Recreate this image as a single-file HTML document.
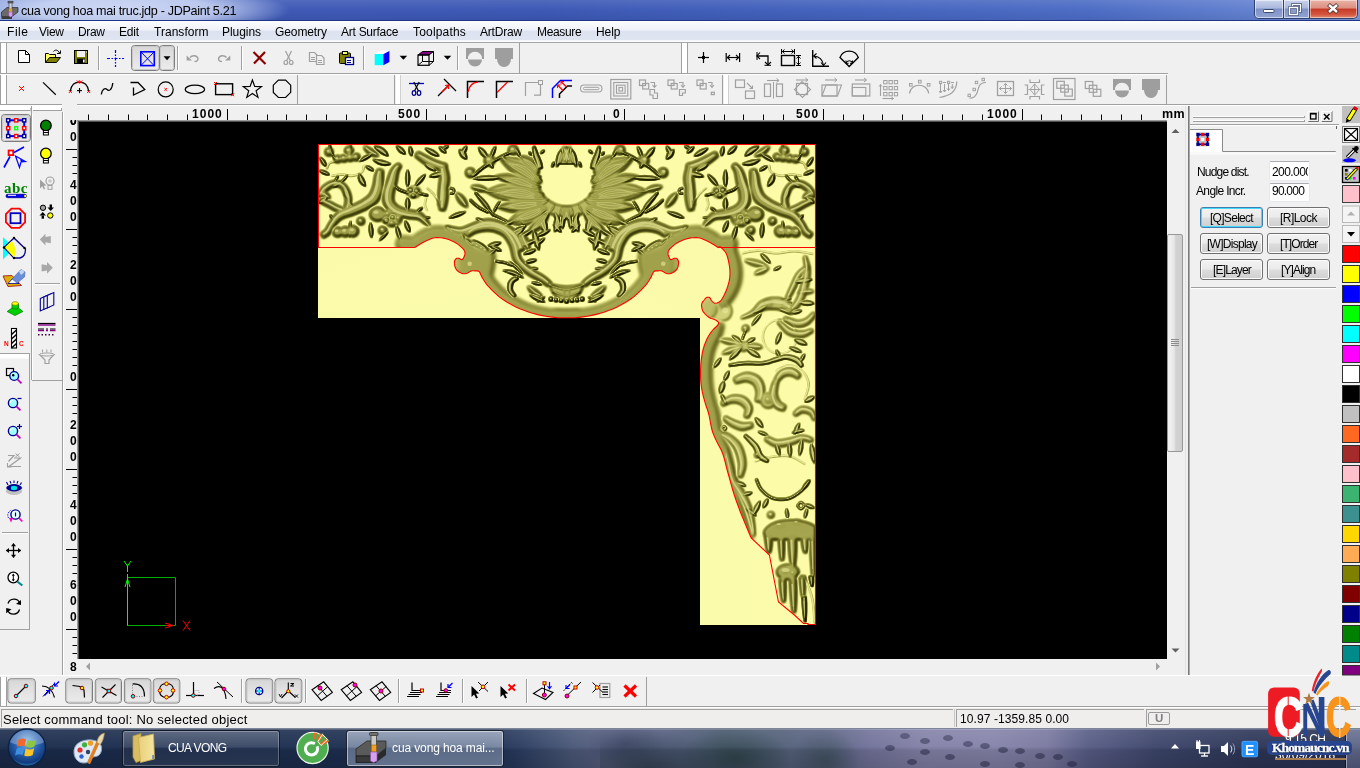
<!DOCTYPE html>
<html lang="en"><head><meta charset="utf-8"><title>cua vong hoa mai truc.jdp - JDPaint 5.21</title>
<style>
html,body{margin:0;padding:0;}
body{width:1360px;height:768px;overflow:hidden;position:relative;background:#f0f0f0;font-family:"Liberation Sans",sans-serif;font-size:12px;color:#000;}
.a{position:absolute;}
.t{position:absolute;white-space:nowrap;line-height:1;}
svg{position:absolute;overflow:visible;}
.t{will-change:transform;}

</style></head>
<body>
<!-- chrome -->
<div class="a" style="left:0px;top:0px;width:1360px;height:20px;background:linear-gradient(90deg,#7f98da 0,#5672c6 14%,#3f5ab6 21%,#3d59b5 40%,#4463bd 60%,#4d6dc5 80%,#6381d0 92%,#7f9adc 100%);"></div>
<div class="a" style="left:0px;top:0px;width:1360px;height:20px;background:linear-gradient(180deg,rgba(255,255,255,.10) 0,rgba(255,255,255,0) 50%,rgba(0,0,30,.08) 100%);"></div>
<div class="a" style="left:-40px;top:-14px;width:330px;height:48px;background:radial-gradient(ellipse closest-side at center,rgba(232,238,255,.8) 0,rgba(225,232,252,.7) 55%,rgba(215,225,250,0) 100%);"></div>
<div class="a" style="left:0px;top:20px;width:1360px;height:1px;background:#1f3688;"></div>
<div class="a" style="left:0px;top:21px;width:1360px;height:1px;background:#fbfcfe;"></div>
<div class="t" style="left:21.0px;top:4.6px;font-size:12.6px;letter-spacing:-0.31px;">cua vong hoa mai truc.jdp - JDPaint 5.21</div>
<div class="a" style="left:0px;top:22px;width:1360px;height:19px;background:linear-gradient(180deg,#fafbfd 0,#eef1f8 42%,#dce2ef 50%,#dfe5f1 100%);"></div>
<div class="a" style="left:0px;top:40px;width:1360px;height:1px;background:#f4f6fa;"></div>
<div class="a" style="left:0px;top:41px;width:1360px;height:1px;background:#fafbfd;"></div>
<div class="a" style="left:0px;top:42px;width:1360px;height:1px;background:#a6a6a6;"></div>
<div class="t" style="left:7.0px;top:25.8px;font-size:12px;letter-spacing:0.55px;">File</div>
<div class="t" style="left:39.0px;top:25.8px;font-size:12px;letter-spacing:-0.26px;">View</div>
<div class="t" style="left:78.0px;top:25.8px;font-size:12px;letter-spacing:-0.33px;">Draw</div>
<div class="t" style="left:119.0px;top:25.8px;font-size:12px;letter-spacing:-0.23px;">Edit</div>
<div class="t" style="left:153.5px;top:25.8px;font-size:12px;letter-spacing:0.03px;">Transform</div>
<div class="t" style="left:222.0px;top:25.8px;font-size:12px;letter-spacing:-0.06px;">Plugins</div>
<div class="t" style="left:275.0px;top:25.8px;font-size:12px;letter-spacing:-0.10px;">Geometry</div>
<div class="t" style="left:341.0px;top:25.8px;font-size:12px;letter-spacing:-0.26px;">Art Surface</div>
<div class="t" style="left:413.2px;top:25.8px;font-size:12px;letter-spacing:0.18px;">Toolpaths</div>
<div class="t" style="left:480.4px;top:25.8px;font-size:12px;letter-spacing:-0.19px;">ArtDraw</div>
<div class="t" style="left:537.4px;top:25.8px;font-size:12px;letter-spacing:-0.35px;">Measure</div>
<div class="t" style="left:596.2px;top:25.8px;font-size:12px;letter-spacing:-0.09px;">Help</div>
<div class="a" style="left:1254px;top:-2px;width:104px;height:20.5px;background:#30406f;border-radius:0 0 5px 5px;"></div>
<div class="a" style="left:1255px;top:0px;width:27.5px;height:17.5px;background:linear-gradient(180deg,#c9d3ec 0,#aab8de 45%,#7e90c6 50%,#93a5d4 100%);border-radius:0 0 0 4px;box-shadow:inset 0 0 0 1px rgba(255,255,255,.55);"></div>
<div class="a" style="left:1283.5px;top:0px;width:25px;height:17.5px;background:linear-gradient(180deg,#c9d3ec 0,#aab8de 45%,#7e90c6 50%,#93a5d4 100%);box-shadow:inset 0 0 0 1px rgba(255,255,255,.55);"></div>
<div class="a" style="left:1309.5px;top:0px;width:47px;height:17.5px;background:linear-gradient(180deg,#e9b4a8 0,#dc8f80 45%,#c63a26 50%,#d4553e 80%,#e08a70 100%);border-radius:0 0 4px 0;box-shadow:inset 0 0 0 1px rgba(255,255,255,.45);"></div>
<svg width="1360" height="768" viewBox="0 0 1360 768" style="left:0;top:0;pointer-events:none;">
<rect x="1263.5" y="9.5" width="10.5" height="3" fill="#fff" stroke="#3c4a70" stroke-width="1" rx=".8"/><rect x="1292.5" y="4.5" width="8" height="7" fill="none" stroke="#3c4a70" stroke-width="2.6" /><rect x="1292.5" y="4.5" width="8" height="7" fill="none" stroke="#fff" stroke-width="1.2" /><rect x="1289.5" y="7.5" width="8" height="7" fill="#8c9cc8" stroke="#3c4a70" stroke-width="2.6" /><rect x="1289.5" y="7.5" width="8" height="7" fill="none" stroke="#fff" stroke-width="1.4" /><line x1="1328.5" y1="4.5" x2="1337.5" y2="12.5" stroke="#4a3030" stroke-width="4.2" /><line x1="1337.5" y1="4.5" x2="1328.5" y2="12.5" stroke="#4a3030" stroke-width="4.2" /><line x1="1329" y1="5" x2="1337" y2="12" stroke="#fff" stroke-width="2.4" /><line x1="1337" y1="5" x2="1329" y2="12" stroke="#fff" stroke-width="2.4" /><polygon points="1.5,12 7,7.5 18,7.5 18,12 12,16.5 1.5,16.5" fill="#6a6a6a" stroke="#2a2a2a" stroke-width="0.7" /><polygon points="1.5,16.5 12,16.5 12,19 1.5,19" fill="#3a3a3a"  /><rect x="8" y="1.2" width="5" height="1.8" fill="#707070" stroke="#303030" stroke-width="0.6" /><rect x="9" y="3" width="3" height="6" fill="#d0d0d0" stroke="#404040" stroke-width="0.6" /><rect x="9" y="8.5" width="3" height="3.5" fill="#f0a020"  /><polygon points="8.8,12 12.4,12 12.4,16 10.5,17 8.8,16" fill="#e0a0f0" stroke="#8050a0" stroke-width="0.5" />
</svg>

<!-- toolbars -->
<div class="a" style="left:0px;top:73px;width:1168px;height:1px;background:#a0a0a0;"></div>
<div class="a" style="left:0px;top:74px;width:1168px;height:1px;background:#fff;"></div>
<div class="a" style="left:0px;top:104px;width:62px;height:1px;background:#a0a0a0;"></div>
<div class="a" style="left:77px;top:104px;width:1283px;height:1px;background:#a0a0a0;"></div>
<div class="a" style="left:77px;top:105px;width:1283px;height:1px;background:#fff;"></div>
<svg width="1360" height="768" viewBox="0 0 1360 768" style="left:0;top:0;pointer-events:none;">
<defs><linearGradient id="gp" x1="0" y1="0" x2="0" y2="1"><stop offset="0" stop-color="#d6d6d6"/><stop offset=".5" stop-color="#e2e2e2"/><stop offset="1" stop-color="#ececec"/></linearGradient></defs><rect x="1" y="43" width="5" height="30" fill="#fff"  /><line x1="0.5" y1="43" x2="0.5" y2="73" stroke="#a0a0a0" stroke-width="1" /><line x1="6.5" y1="43" x2="6.5" y2="73" stroke="#a0a0a0" stroke-width="1" /><path d="M18.5 50.5H25.5L29.5 54.5V62.5H18.5Z" fill="#fff" stroke="#000" stroke-width="1" /><path d="M25.5 50.5V54.5H29.5" fill="none" stroke="#000" stroke-width="1" /><path d="M45.5 62.5V53.5H48.5L49.5 54.5H55.5V57.5" fill="#ffff66" stroke="#000" stroke-width="1" /><path d="M45.5 62.5L49.5 57.5H60.5L56.5 62.5Z" fill="#808000" stroke="#000" stroke-width="1" /><path d="M53.5 51.5C55 49.5 58 49.5 59.5 53" fill="none" stroke="#000" stroke-width="1" /><path d="M57 53.5H60.5V50.5" fill="none" stroke="#000" stroke-width="1" /><rect x="74.5" y="50.5" width="13" height="13" fill="#808000" stroke="#000" stroke-width="1" /><rect x="77" y="51" width="8" height="6" fill="#f0f0f0"  /><rect x="77" y="58.5" width="8" height="5" fill="#000"  /><rect x="83" y="59.5" width="1.6" height="3" fill="#fff"  /><rect x="86" y="51.5" width="1" height="1" fill="#fff"  /><line x1="98.5" y1="46" x2="98.5" y2="70" stroke="#a0a0a0" stroke-width="1" /><line x1="99.5" y1="46" x2="99.5" y2="70" stroke="#fff" stroke-width="1" /><line x1="107" y1="58.5" x2="124" y2="58.5" stroke="#0000ff" stroke-width="1.2" stroke-dasharray="3 1.5 1.5 1.5"/><line x1="115.5" y1="50" x2="115.5" y2="67" stroke="#0000ff" stroke-width="1.2" stroke-dasharray="3 1.5 1.5 1.5"/><rect x="131.5" y="45.5" width="28" height="25" rx="3" ry="3" fill="url(#gp)" stroke="#7d7d7d" stroke-width="1"/><rect x="132.5" y="46.5" width="26" height="23" rx="2" ry="2" fill="none" stroke="#c9c9c9" stroke-width="1"/><rect x="159.5" y="45.5" width="15" height="25" rx="3" ry="3" fill="url(#gp)" stroke="#7d7d7d" stroke-width="1"/><rect x="160.5" y="46.5" width="13" height="23" rx="2" ry="2" fill="none" stroke="#c9c9c9" stroke-width="1"/><rect x="140.8" y="51.8" width="13.5" height="13.8" fill="none" stroke="#0000ff" stroke-width="1.6" /><line x1="141" y1="52" x2="154" y2="65.5" stroke="#0000ff" stroke-width="1" /><line x1="154" y1="52" x2="141" y2="65.5" stroke="#0000ff" stroke-width="1" /><polygon points="163.5,56.2 170.5,56.2 167,60.2" fill="#000"  /><line x1="177.5" y1="46" x2="177.5" y2="70" stroke="#a0a0a0" stroke-width="1" /><line x1="178.5" y1="46" x2="178.5" y2="70" stroke="#fff" stroke-width="1" /><path d="M190 57.5C192 55 197 55 198 58.5C198 60.5 196.5 61.5 194.5 61.5" fill="none" stroke="#a0a0a0" stroke-width="1.4" /><polygon points="186.6,55.5 186.6,60.5 192,60.5" fill="#a0a0a0"  /><path d="M226.5 57.5C224.5 55 219.5 55 218.5 58.5C218.5 60.5 220 61.5 222 61.5" fill="none" stroke="#a0a0a0" stroke-width="1.4" /><polygon points="230.3,55.5 230.3,60.5 225,60.5" fill="#a0a0a0"  /><line x1="241.5" y1="46" x2="241.5" y2="70" stroke="#a0a0a0" stroke-width="1" /><line x1="242.5" y1="46" x2="242.5" y2="70" stroke="#fff" stroke-width="1" /><line x1="253.5" y1="52" x2="265.5" y2="64" stroke="#8b0000" stroke-width="2.2" /><line x1="265" y1="52" x2="254" y2="63.5" stroke="#8b0000" stroke-width="2.2" /><line x1="285.5" y1="51" x2="290.5" y2="61" stroke="#a0a0a0" stroke-width="1.3" /><line x1="291.5" y1="51" x2="286.5" y2="61" stroke="#a0a0a0" stroke-width="1.3" /><ellipse cx="285.8" cy="62.5" rx="1.8" ry="2" fill="none" stroke="#a0a0a0" stroke-width="1.2" /><ellipse cx="291.2" cy="62.5" rx="1.8" ry="2" fill="none" stroke="#a0a0a0" stroke-width="1.2" /><path d="M309.5 52.5H314.5L317.5 55.5V61.5H309.5Z" fill="#f0f0f0" stroke="#a0a0a0" stroke-width="1.2" /><path d="M316.5 55.5H321.5L324 58V64.5H316.5Z" fill="#f0f0f0" stroke="#a0a0a0" stroke-width="1.2" /><line x1="311" y1="57.5" x2="315" y2="57.5" stroke="#a0a0a0" stroke-width="1" /><line x1="311" y1="59.5" x2="315" y2="59.5" stroke="#a0a0a0" stroke-width="1" /><line x1="318" y1="60.5" x2="322" y2="60.5" stroke="#a0a0a0" stroke-width="1" /><line x1="318" y1="62.5" x2="322" y2="62.5" stroke="#a0a0a0" stroke-width="1" /><rect x="339.5" y="53" width="11" height="10.5" fill="#808000" stroke="#000" stroke-width="1" rx="1"/><rect x="342.5" y="51.5" width="5" height="3" fill="#ffff66" stroke="#000" stroke-width="1" /><rect x="345.5" y="57.5" width="8" height="7" fill="#fff" stroke="#00008b" stroke-width="1.3" /><line x1="347" y1="60.5" x2="351" y2="60.5" stroke="#00008b" stroke-width="1" /><line x1="347" y1="62.5" x2="351" y2="62.5" stroke="#00008b" stroke-width="1" /><line x1="363.5" y1="46" x2="363.5" y2="70" stroke="#a0a0a0" stroke-width="1" /><line x1="364.5" y1="46" x2="364.5" y2="70" stroke="#fff" stroke-width="1" /><polygon points="374.7,54 383.3,54 383.3,65.2 374.7,65.2" fill="#00ffff"  /><polygon points="383.3,54 389.4,50.8 389.4,62 383.3,65.2" fill="#0000ff"  /><polygon points="374.7,54 380.8,50.8 389.4,50.8 383.3,54" fill="#fff"  /><polygon points="399.6,55.8 407.2,55.8 403.4,59.8" fill="#000"  /><polygon points="418,55 422.5,51.5 433.5,51.5 429,55" fill="#800080" stroke="#000" stroke-width="1" /><rect x="418" y="55" width="11" height="10.3" fill="none" stroke="#000" stroke-width="1.2" /><path d="M433.5 51.5V61.5L429 65.3M422.5 55V61.5H433.5M422.5 61.5L418 65.3" fill="none" stroke="#000" stroke-width="1" /><polygon points="443.7,55.8 451.3,55.8 447.5,59.8" fill="#000"  /><line x1="457.5" y1="46" x2="457.5" y2="70" stroke="#a0a0a0" stroke-width="1" /><line x1="458.5" y1="46" x2="458.5" y2="70" stroke="#fff" stroke-width="1" /><path d="M466 48H484V59H482A7 7 0 0 0 468 59H466Z" fill="#9e9e9e"  /><path d="M468 59.5A7 7 0 0 0 482 59.5Z" fill="#9e9e9e"  /><path d="M468 58.5A7 6.8 0 0 1 482 58.5Z" fill="#f0f0f0"  /><path d="M495 48H513V59H511A7 8 0 0 1 497 59H495Z" fill="#9e9e9e"  /><line x1="519.5" y1="43" x2="519.5" y2="73" stroke="#a0a0a0" stroke-width="1" /><rect x="682" y="43" width="5" height="30" fill="#fff"  /><line x1="681.5" y1="43" x2="681.5" y2="73" stroke="#a0a0a0" stroke-width="1" /><line x1="687.5" y1="43" x2="687.5" y2="73" stroke="#a0a0a0" stroke-width="1" /><line x1="698" y1="57.5" x2="709" y2="57.5" stroke="#000" stroke-width="1.2" /><line x1="703.5" y1="52" x2="703.5" y2="63" stroke="#000" stroke-width="1.2" /><rect x="702" y="56" width="3" height="3" fill="#000"  /><line x1="726.2" y1="53" x2="726.2" y2="62" stroke="#000" stroke-width="1.2" /><line x1="739.6" y1="53" x2="739.6" y2="62" stroke="#000" stroke-width="1.2" /><line x1="727" y1="57.5" x2="739" y2="57.5" stroke="#000" stroke-width="1.1" /><polyline points="730,55 727.3,57.5 730,60" fill="none" stroke="#000" stroke-width="1.1" /><polyline points="736,55 738.7,57.5 736,60" fill="none" stroke="#000" stroke-width="1.1" /><polyline points="757,56 763.5,56 763.5,56 768,56 768,65" fill="none" stroke="#000" stroke-width="1.3" /><polyline points="760,52.5 756.8,56 760,59" fill="none" stroke="#000" stroke-width="1.1" /><polyline points="765,62 768,65 771,62" fill="none" stroke="#000" stroke-width="1.1" /><line x1="757" y1="52" x2="757" y2="60" stroke="#000" stroke-width="1" /><line x1="764.5" y1="65.3" x2="771" y2="65.3" stroke="#000" stroke-width="1" /><rect x="781.5" y="55.5" width="13" height="10" fill="none" stroke="#000" stroke-width="1.4" /><line x1="781.5" y1="49" x2="781.5" y2="54" stroke="#000" stroke-width="1" /><line x1="794.5" y1="49" x2="794.5" y2="54" stroke="#000" stroke-width="1" /><line x1="782" y1="51.5" x2="794" y2="51.5" stroke="#000" stroke-width="1" /><polyline points="784.5,49.5 782.3,51.5 784.5,53.5" fill="none" stroke="#000" stroke-width="1" /><polyline points="791.5,49.5 793.7,51.5 791.5,53.5" fill="none" stroke="#000" stroke-width="1" /><line x1="796" y1="55.5" x2="801" y2="55.5" stroke="#000" stroke-width="1" /><line x1="796" y1="65.5" x2="801" y2="65.5" stroke="#000" stroke-width="1" /><line x1="798.5" y1="56" x2="798.5" y2="65" stroke="#000" stroke-width="1" /><polyline points="796.5,58.5 798.5,56.3 800.5,58.5" fill="none" stroke="#000" stroke-width="1" /><polyline points="796.5,62.5 798.5,64.7 800.5,62.5" fill="none" stroke="#000" stroke-width="1" /><polyline points="812.7,50 812.7,66.2 829,66.2" fill="none" stroke="#000" stroke-width="1.4" /><path d="M813.5 56C819 56 823 60 823.5 65.5" fill="none" stroke="#000" stroke-width="1.2" /><polyline points="816.5,53.5 813.7,56 816.5,58.5" fill="none" stroke="#000" stroke-width="1.1" /><polyline points="821,62.5 823.5,65.5 826,62.5" fill="none" stroke="#000" stroke-width="1.1" /><path d="M840 57.5A9.8 9.8 0 0 1 858.3 57.5L849.2 66.5Z" fill="none" stroke="#000" stroke-width="1.3" /><path d="M846 63A3.5 3.5 0 0 1 852.5 63" fill="none" stroke="#000" stroke-width="1.1" /><polyline points="846,60.5 846,63.3 848.6,63.3" fill="none" stroke="#000" stroke-width="1" /><polyline points="852.5,60.5 852.5,63.3 850,63.3" fill="none" stroke="#000" stroke-width="1" /><line x1="864.5" y1="43" x2="864.5" y2="73" stroke="#a0a0a0" stroke-width="1" /><rect x="1" y="75" width="5" height="29" fill="#fff"  /><line x1="0.5" y1="75" x2="0.5" y2="104" stroke="#a0a0a0" stroke-width="1" /><line x1="6.5" y1="75" x2="6.5" y2="104" stroke="#a0a0a0" stroke-width="1" /><line x1="19" y1="86" x2="24" y2="91" stroke="#ff0000" stroke-width="1" /><line x1="24" y1="86" x2="19" y2="91" stroke="#ff0000" stroke-width="1" /><line x1="43" y1="82.4" x2="55.8" y2="94.7" stroke="#000" stroke-width="1.2" /><path d="M70.3 91C71.5 84 76 82.2 79.5 82.2C83 82.2 87.5 84 88.7 91" fill="none" stroke="#000" stroke-width="1.2" /><line x1="68.8" y1="90" x2="71.8" y2="93" stroke="#ff0000" stroke-width="1" /><line x1="71.8" y1="90" x2="68.8" y2="93" stroke="#ff0000" stroke-width="1" /><line x1="87.2" y1="90" x2="90.2" y2="93" stroke="#ff0000" stroke-width="1" /><line x1="90.2" y1="90" x2="87.2" y2="93" stroke="#ff0000" stroke-width="1" /><line x1="76.8" y1="80.5" x2="79.8" y2="83.5" stroke="#ff0000" stroke-width="1" /><line x1="79.8" y1="80.5" x2="76.8" y2="83.5" stroke="#ff0000" stroke-width="1" /><line x1="79.2" y1="80.5" x2="82.2" y2="83.5" stroke="#ff0000" stroke-width="1" /><line x1="82.2" y1="80.5" x2="79.2" y2="83.5" stroke="#ff0000" stroke-width="1" /><line x1="77" y1="90.6" x2="82" y2="90.6" stroke="#000" stroke-width="1.1" /><line x1="79.5" y1="88" x2="79.5" y2="93.2" stroke="#000" stroke-width="1.1" /><path d="M101.3 94.5C102 89 105 87.5 107 89.5C109 91.5 112 90 112.8 83" fill="none" stroke="#000" stroke-width="1.3" /><polyline points="130.5,82.5 138,82.5 144.8,89.5 133.5,95 133.5,87.5" fill="none" stroke="#000" stroke-width="1.3" /><circle cx="165.7" cy="89.4" r="7.5" fill="none" stroke="#000" stroke-width="1.2" /><line x1="164.4" y1="88.1" x2="167" y2="90.7" stroke="#ff0000" stroke-width="1" /><line x1="167" y1="88.1" x2="164.4" y2="90.7" stroke="#ff0000" stroke-width="1" /><ellipse cx="194.9" cy="89.4" rx="9.7" ry="4.2" fill="none" stroke="#000" stroke-width="1.3" /><rect x="215.6" y="83.8" width="17" height="10.8" fill="none" stroke="#000" stroke-width="1.4" /><line x1="214" y1="82" x2="217" y2="85" stroke="#ff0000" stroke-width="1" /><line x1="217" y1="82" x2="214" y2="85" stroke="#ff0000" stroke-width="1" /><line x1="231.1" y1="93.2" x2="234.1" y2="96.2" stroke="#ff0000" stroke-width="1" /><line x1="234.1" y1="93.2" x2="231.1" y2="96.2" stroke="#ff0000" stroke-width="1" /><polygon points="252.4,80.0 254.7,86.4 261.5,86.6 256.1,90.8 258.0,97.4 252.4,93.5 246.8,97.4 248.7,90.8 243.3,86.6 250.1,86.4" fill="none" stroke="#000" stroke-width="1.2" /><polygon points="290.7,92.4 285.6,97.5 278.4,97.5 273.3,92.4 273.3,85.2 278.4,80.1 285.6,80.1 290.7,85.2" fill="none" stroke="#000" stroke-width="1.2" /><line x1="297.5" y1="75" x2="297.5" y2="104" stroke="#a0a0a0" stroke-width="1" /><line x1="394.5" y1="75" x2="394.5" y2="104" stroke="#a0a0a0" stroke-width="1" /><rect x="396" y="75" width="4" height="29" fill="#fff"  /><line x1="400.5" y1="75" x2="400.5" y2="104" stroke="#d0d0d0" stroke-width="1" /><line x1="409" y1="83.5" x2="424" y2="83.5" stroke="#0000c0" stroke-width="1.3" /><line x1="413.8" y1="82" x2="418.5" y2="91" stroke="#000" stroke-width="1.2" /><line x1="419.2" y1="82" x2="414.5" y2="91" stroke="#000" stroke-width="1.2" /><ellipse cx="414" cy="93" rx="1.8" ry="2.3" fill="none" stroke="#00008b" stroke-width="1.2" /><ellipse cx="419" cy="93" rx="1.8" ry="2.3" fill="none" stroke="#00008b" stroke-width="1.2" /><line x1="444" y1="79" x2="456" y2="91" stroke="#000" stroke-width="1.2" /><line x1="438" y1="96" x2="449" y2="85" stroke="#000" stroke-width="1.2" /><line x1="442" y1="92" x2="449" y2="85" stroke="#ff0000" stroke-width="1.3" /><polyline points="445,85.5 449,85 448.5,89" fill="none" stroke="#ff0000" stroke-width="1.2" /><polyline points="467.5,98 467.5,81.5 484,81.5" fill="none" stroke="#000" stroke-width="1.5" /><path d="M468 92C469 86 472 82.5 478 82" fill="none" stroke="#ff0000" stroke-width="1.3" /><polyline points="496.5,98 496.5,81.5 513,81.5" fill="none" stroke="#000" stroke-width="1.5" /><line x1="497" y1="92.5" x2="507.5" y2="82" stroke="#ff0000" stroke-width="1.3" /><polyline points="525.5,96 525.5,82.5 540.5,82.5 540.5,95.2 534,95.2" fill="none" stroke="#a0a0a0" stroke-width="1.2" /><rect x="538.5" y="80.5" width="4" height="4" fill="#f0f0f0" stroke="#a0a0a0" stroke-width="1" /><polyline points="552.5,98 552.5,88.5 560.5,80.5 572,80.5" fill="none" stroke="#0000ff" stroke-width="1.5" /><polyline points="559.5,98 559.5,94 567.5,86 572,86" fill="none" stroke="#000" stroke-width="1.5" /><line x1="563" y1="90.5" x2="557.5" y2="85" stroke="#ff0000" stroke-width="1.2" /><line x1="566.5" y1="87" x2="561" y2="81.5" stroke="#ff0000" stroke-width="1.2" /><polyline points="557.5,88 557.5,85 560.5,85" fill="none" stroke="#ff0000" stroke-width="1" /><polyline points="561,84.5 561,81.5 564,81.5" fill="none" stroke="#ff0000" stroke-width="1" /><rect x="580.5" y="85" width="21.5" height="7" fill="none" stroke="#a0a0a0" stroke-width="1.1" rx="3.5"/><rect x="583.5" y="87.3" width="15.5" height="2.4" fill="none" stroke="#a0a0a0" stroke-width="1" rx="1.2"/><rect x="610.8" y="79.5" width="20" height="19.5" fill="none" stroke="#a0a0a0" stroke-width="1.2" /><rect x="613.8" y="82.5" width="14" height="13.5" fill="none" stroke="#a0a0a0" stroke-width="1.1" /><rect x="616.5" y="85.2" width="8.6" height="8" fill="none" stroke="#a0a0a0" stroke-width="1.1" /><rect x="619" y="87.5" width="3.6" height="3.5" fill="none" stroke="#a0a0a0" stroke-width="1.1" /><rect x="639.5" y="80" width="6" height="5.5" fill="none" stroke="#a0a0a0" stroke-width="1.2" /><rect x="642.7" y="83.5" width="6" height="5.5" fill="none" stroke="#a0a0a0" stroke-width="1.2" /><polyline points="650.5,82.5 654.5,82.5 654.5,87" fill="none" stroke="#a0a0a0" stroke-width="1.1" /><polyline points="652.5,85 654.5,87.3 656.5,85" fill="none" stroke="#a0a0a0" stroke-width="1.1" /><polygon points="650,89.5 654.5,89.5 654.5,93 657.5,93 657.5,98.5 653,98.5 653,95 650,95" fill="none" stroke="#a0a0a0" stroke-width="1.2" /><rect x="668" y="80" width="6" height="5.5" fill="none" stroke="#a0a0a0" stroke-width="1.2" /><rect x="671.2" y="83.5" width="6" height="5.5" fill="none" stroke="#a0a0a0" stroke-width="1.2" /><polyline points="679,82.5 683,82.5 683,87" fill="none" stroke="#a0a0a0" stroke-width="1.1" /><polyline points="681,85 683,87.3 685,85" fill="none" stroke="#a0a0a0" stroke-width="1.1" /><polygon points="679.5,89.5 685.3,89.5 685.3,93 682.5,93 682.5,95.5 679.5,95.5" fill="none" stroke="#a0a0a0" stroke-width="1.2" /><rect x="697" y="80" width="6" height="5.5" fill="none" stroke="#a0a0a0" stroke-width="1.2" /><rect x="700.2" y="83.5" width="6" height="5.5" fill="none" stroke="#a0a0a0" stroke-width="1.2" /><polyline points="708,82.5 712,82.5 712,87" fill="none" stroke="#a0a0a0" stroke-width="1.1" /><polyline points="710,85 712,87.3 714,85" fill="none" stroke="#a0a0a0" stroke-width="1.1" /><rect x="711.3" y="92.3" width="3" height="2.3" fill="none" stroke="#a0a0a0" stroke-width="1.2" /><line x1="722.5" y1="75" x2="722.5" y2="104" stroke="#a0a0a0" stroke-width="1" /><rect x="724" y="75" width="4" height="29" fill="#fff"  /><line x1="728.5" y1="75" x2="728.5" y2="104" stroke="#d0d0d0" stroke-width="1" /><rect x="735.5" y="80" width="9" height="7.5" fill="none" stroke="#a0a0a0" stroke-width="1.2" /><rect x="745.5" y="91" width="9" height="7.5" fill="none" stroke="#a0a0a0" stroke-width="1.2" /><line x1="747" y1="83" x2="752.5" y2="88.5" stroke="#a0a0a0" stroke-width="1.1" /><polyline points="752.5,85.5 752.5,88.5 749.5,88.5" fill="none" stroke="#a0a0a0" stroke-width="1.1" /><rect x="764.5" y="84" width="6" height="12.5" fill="none" stroke="#a0a0a0" stroke-width="1.2" /><rect x="776.5" y="84" width="6" height="12.5" fill="none" stroke="#a0a0a0" stroke-width="1.2" /><line x1="773.5" y1="82" x2="773.5" y2="98.5" stroke="#a0a0a0" stroke-width="1" /><line x1="767" y1="80.5" x2="779" y2="80.5" stroke="#a0a0a0" stroke-width="1.1" /><polyline points="776.5,78.5 779,80.5 776.5,82.5" fill="none" stroke="#a0a0a0" stroke-width="1" /><rect x="796.5" y="83.5" width="11" height="11" fill="none" stroke="#a0a0a0" stroke-width="1.2" /><polygon points="802,81.5 810.5,89.5 802.5,97.5 794.5,89.5" fill="none" stroke="#a0a0a0" stroke-width="1.1" /><line x1="796" y1="80" x2="808" y2="80" stroke="#a0a0a0" stroke-width="1.1" /><polyline points="805.5,78 808,80 805.5,82" fill="none" stroke="#a0a0a0" stroke-width="1" /><rect x="822" y="85" width="15" height="11" fill="none" stroke="#a0a0a0" stroke-width="1.2" /><polygon points="826,85 841.5,85 837.5,96 822,96" fill="none" stroke="#a0a0a0" stroke-width="1.1" /><line x1="825" y1="80" x2="837" y2="80" stroke="#a0a0a0" stroke-width="1.1" /><polyline points="834.5,78 837,80 834.5,82" fill="none" stroke="#a0a0a0" stroke-width="1" /><rect x="852.3" y="84" width="17.5" height="12" fill="none" stroke="#a0a0a0" stroke-width="1.2" /><rect x="852.3" y="87.5" width="13.5" height="8.5" fill="none" stroke="#a0a0a0" stroke-width="1.1" /><line x1="855" y1="80" x2="866.5" y2="80" stroke="#a0a0a0" stroke-width="1.1" /><polyline points="864,78 866.5,80 864,82" fill="none" stroke="#a0a0a0" stroke-width="1" /><rect x="883.7" y="80.5" width="3.3" height="3.3" fill="none" stroke="#a0a0a0" stroke-width="1" /><rect x="883.7" y="86.5" width="3.3" height="3.3" fill="none" stroke="#a0a0a0" stroke-width="1" /><rect x="883.7" y="92.5" width="3.3" height="3.3" fill="none" stroke="#a0a0a0" stroke-width="1" /><rect x="889" y="80.5" width="3.3" height="3.3" fill="none" stroke="#a0a0a0" stroke-width="1" /><rect x="889" y="86.5" width="3.3" height="3.3" fill="none" stroke="#a0a0a0" stroke-width="1" /><rect x="889" y="92.5" width="3.3" height="3.3" fill="none" stroke="#a0a0a0" stroke-width="1" /><rect x="894.3" y="80.5" width="3.3" height="3.3" fill="none" stroke="#a0a0a0" stroke-width="1" /><rect x="894.3" y="86.5" width="3.3" height="3.3" fill="none" stroke="#a0a0a0" stroke-width="1" /><rect x="894.3" y="92.5" width="3.3" height="3.3" fill="none" stroke="#a0a0a0" stroke-width="1" /><line x1="880.5" y1="84.5" x2="880.5" y2="96" stroke="#a0a0a0" stroke-width="1.1" /><polyline points="879,86.5 880.5,84.5 882,86.5" fill="none" stroke="#a0a0a0" stroke-width="1" /><line x1="882.5" y1="98.5" x2="893.5" y2="98.5" stroke="#a0a0a0" stroke-width="1.1" /><polyline points="891.5,97 893.5,98.5 891.5,100" fill="none" stroke="#a0a0a0" stroke-width="1" /><path d="M909.5 93.5C911 82.5 927 82.5 928.8 93.5" fill="none" stroke="#a0a0a0" stroke-width="1.2" /><rect x="909.5" y="83.5" width="2.6" height="2.6" fill="#f0f0f0" stroke="#a0a0a0" stroke-width="1" /><rect x="918.5" y="80.3" width="2.6" height="2.6" fill="#f0f0f0" stroke="#a0a0a0" stroke-width="1" /><rect x="927.3" y="83.5" width="2.6" height="2.6" fill="#f0f0f0" stroke="#a0a0a0" stroke-width="1" /><path d="M939.5 97.5C950 95.5 956.5 92 956.8 81.5" fill="none" stroke="#a0a0a0" stroke-width="1.2" /><line x1="940.5" y1="84" x2="940.5" y2="93" stroke="#a0a0a0" stroke-width="1" /><polyline points="939,91 940.5,93 942,91" fill="none" stroke="#a0a0a0" stroke-width="1" /><line x1="944.5" y1="84" x2="944.5" y2="92" stroke="#a0a0a0" stroke-width="1" /><polyline points="943,90 944.5,92 946,90" fill="none" stroke="#a0a0a0" stroke-width="1" /><line x1="948.5" y1="84" x2="948.5" y2="90.5" stroke="#a0a0a0" stroke-width="1" /><polyline points="947,88.5 948.5,90.5 950,88.5" fill="none" stroke="#a0a0a0" stroke-width="1" /><line x1="952.3" y1="84" x2="952.3" y2="88.5" stroke="#a0a0a0" stroke-width="1" /><polyline points="950.8,86.5 952.3,88.5 953.8,86.5" fill="none" stroke="#a0a0a0" stroke-width="1" /><rect x="939.5" y="81.3" width="2.2" height="2.2" fill="#f0f0f0" stroke="#a0a0a0" stroke-width="1" /><rect x="947.5" y="81.3" width="2.2" height="2.2" fill="#f0f0f0" stroke="#a0a0a0" stroke-width="1" /><line x1="943" y1="82.5" x2="946" y2="82.5" stroke="#a0a0a0" stroke-width="1" /><line x1="951" y1="82.5" x2="954" y2="82.5" stroke="#a0a0a0" stroke-width="1" /><path d="M969.5 98C975 99 977.5 93 978.5 88C979.5 84 982 82.5 986 82.5" fill="none" stroke="#a0a0a0" stroke-width="1.2" /><rect x="968" y="94.2" width="2.4" height="2.4" fill="#f0f0f0" stroke="#a0a0a0" stroke-width="1" /><rect x="973" y="88.3" width="2.4" height="2.4" fill="#f0f0f0" stroke="#a0a0a0" stroke-width="1" /><rect x="975.3" y="81.3" width="2.4" height="2.4" fill="#f0f0f0" stroke="#a0a0a0" stroke-width="1" /><rect x="982" y="78.3" width="2.4" height="2.4" fill="#f0f0f0" stroke="#a0a0a0" stroke-width="1" /><rect x="997.5" y="81.5" width="16" height="14" fill="none" stroke="#a0a0a0" stroke-width="1.3" /><line x1="999.5" y1="88.5" x2="1011.5" y2="88.5" stroke="#a0a0a0" stroke-width="1" /><line x1="1005.5" y1="83.5" x2="1005.5" y2="93.5" stroke="#a0a0a0" stroke-width="1" /><polyline points="1001.5,86.5 999.5,88.5 1001.5,90.5" fill="none" stroke="#a0a0a0" stroke-width="1" /><polyline points="1009.5,86.5 1011.5,88.5 1009.5,90.5" fill="none" stroke="#a0a0a0" stroke-width="1" /><polyline points="1003.5,85.5 1005.5,83.5 1007.5,85.5" fill="none" stroke="#a0a0a0" stroke-width="1" /><polyline points="1003.5,91.5 1005.5,93.5 1007.5,91.5" fill="none" stroke="#a0a0a0" stroke-width="1" /><polyline points="1024.5,85 1027.5,85 1027.5,94.5 1024.5,94.5" fill="none" stroke="#a0a0a0" stroke-width="1.2" /><polyline points="1044.5,85 1041.5,85 1041.5,94.5 1044.5,94.5" fill="none" stroke="#a0a0a0" stroke-width="1.2" /><polyline points="1030,79.5 1030,82.5 1039.5,82.5 1039.5,79.5" fill="none" stroke="#a0a0a0" stroke-width="1.2" /><polyline points="1030,99.5 1030,96.5 1039.5,96.5 1039.5,99.5" fill="none" stroke="#a0a0a0" stroke-width="1.2" /><line x1="1028.5" y1="89.5" x2="1040.5" y2="89.5" stroke="#a0a0a0" stroke-width="1" /><line x1="1034.7" y1="83.5" x2="1034.7" y2="95.5" stroke="#a0a0a0" stroke-width="1" /><polygon points="1034.7,84 1039.5,89.5 1034.7,95 1030,89.5" fill="none" stroke="#a0a0a0" stroke-width="0.9" /><rect x="1053.5" y="78.5" width="21.5" height="21" fill="none" stroke="#a0a0a0" stroke-width="1.2" /><rect x="1056.8" y="81.3" width="7.5" height="7" fill="none" stroke="#a0a0a0" stroke-width="1.2" /><rect x="1060.8" y="85.1" width="7.5" height="7" fill="none" stroke="#a0a0a0" stroke-width="1.2" /><rect x="1064.8" y="89.1" width="7.5" height="7" fill="none" stroke="#a0a0a0" stroke-width="1.2" /><rect x="1085.3" y="81.5" width="7.5" height="7" fill="none" stroke="#a0a0a0" stroke-width="1.2" /><rect x="1089.3" y="85.3" width="7.5" height="7" fill="none" stroke="#a0a0a0" stroke-width="1.2" /><rect x="1093.3" y="89.3" width="7.5" height="7" fill="none" stroke="#a0a0a0" stroke-width="1.2" /><path d="M1113 79H1131V90H1129A7 7 0 0 0 1115 90H1113Z" fill="#9e9e9e"  /><path d="M1115 90.5A7 7 0 0 0 1129 90.5Z" fill="#9e9e9e"  /><path d="M1115 89.5A7 6.8 0 0 1 1129 89.5Z" fill="#f0f0f0"  /><path d="M1142 79H1160V90H1158A7 8 0 0 1 1144 90H1142Z" fill="#9e9e9e"  /><line x1="1166.5" y1="75" x2="1166.5" y2="104" stroke="#a0a0a0" stroke-width="1" />
</svg>

<!-- left -->
<div class="t" style="left:4.0px;top:180.6px;font-size:15px;color:#008000;font-weight:bold;font-family:'Liberation Serif',serif;letter-spacing:0.50px;">abc</div>
<div class="t" style="left:4.3px;top:341.3px;font-size:6.5px;color:#ff0000;font-weight:bold;">N</div>
<div class="t" style="left:18.5px;top:341.3px;font-size:6.5px;color:#ff0000;font-weight:bold;">C</div>
<svg width="1360" height="768" viewBox="0 0 1360 768" style="left:0;top:0;pointer-events:none;">
<rect x="0" y="105" width="62" height="5" fill="#fff"  /><line x1="0" y1="110.5" x2="30.5" y2="110.5" stroke="#a0a0a0" stroke-width="1" /><line x1="33" y1="110.5" x2="61.5" y2="110.5" stroke="#a0a0a0" stroke-width="1" /><line x1="61.5" y1="108" x2="61.5" y2="111" stroke="#a0a0a0" stroke-width="1" /><line x1="30.5" y1="108" x2="30.5" y2="111" stroke="#c0c0c0" stroke-width="1" /><line x1="31.5" y1="106" x2="31.5" y2="380" stroke="#a0a0a0" stroke-width="1" /><line x1="32.5" y1="114" x2="32.5" y2="380" stroke="#fff" stroke-width="1" /><line x1="62.5" y1="112" x2="62.5" y2="675" stroke="#a0a0a0" stroke-width="1" /><line x1="63.5" y1="112" x2="63.5" y2="675" stroke="#fff" stroke-width="1" /><line x1="0" y1="353.5" x2="30" y2="353.5" stroke="#a0a0a0" stroke-width="1" /><rect x="0" y="354" width="29" height="4.5" fill="#fff"  /><line x1="29.5" y1="354" x2="29.5" y2="629" stroke="#a0a0a0" stroke-width="1" /><line x1="0" y1="629.5" x2="30" y2="629.5" stroke="#a0a0a0" stroke-width="1" /><line x1="32" y1="380.5" x2="62" y2="380.5" stroke="#a0a0a0" stroke-width="1" /><rect x="1.5" y="114.5" width="29" height="27" rx="3" ry="3" fill="url(#gp)" stroke="#7d7d7d" stroke-width="1"/><rect x="2.5" y="115.5" width="27" height="25" rx="2" ry="2" fill="none" stroke="#c9c9c9" stroke-width="1"/><rect x="8.2" y="120.3" width="16" height="15.8" fill="none" stroke="#0000ff" stroke-width="2" /><rect x="6.6" y="118.7" width="3.2" height="3.2" fill="#fff" stroke="#00008b" stroke-width="1.4" /><rect x="22.6" y="118.7" width="3.2" height="3.2" fill="#fff" stroke="#00008b" stroke-width="1.4" /><rect x="6.6" y="134.5" width="3.2" height="3.2" fill="#fff" stroke="#00008b" stroke-width="1.4" /><rect x="22.6" y="134.5" width="3.2" height="3.2" fill="#fff" stroke="#00008b" stroke-width="1.4" /><rect x="14.6" y="118.7" width="3.2" height="3.2" fill="#fff" stroke="#ff0000" stroke-width="1.4" /><rect x="6.6" y="126.6" width="3.2" height="3.2" fill="#fff" stroke="#ff0000" stroke-width="1.4" /><rect x="22.6" y="126.6" width="3.2" height="3.2" fill="#fff" stroke="#ff0000" stroke-width="1.4" /><rect x="14.6" y="134.5" width="3.2" height="3.2" fill="#fff" stroke="#ff0000" stroke-width="1.4" /><rect x="14.7" y="126.7" width="3" height="3" fill="#f0f0f0" stroke="#00ff00" stroke-width="1.3" /><line x1="14" y1="152.5" x2="24" y2="147" stroke="#0000ff" stroke-width="1.6" /><line x1="10" y1="156.5" x2="4" y2="167.5" stroke="#0000ff" stroke-width="1.6" /><rect x="8.6" y="150.5" width="4.6" height="4.6" fill="#fff" stroke="#ff0000" stroke-width="1.8" /><path d="M15.5 156L25.5 161.5L21 162L19.5 167.5Z" fill="none" stroke="#0000ff" stroke-width="1.2" /><path d="M20 159L25.5 161.5L21 162Z" fill="#0000ff"  /><rect x="6" y="194.3" width="20.5" height="3.4" fill="#0000ff" stroke="#00008b" stroke-width="0.8" rx="1.7"/><line x1="8" y1="195.3" x2="16" y2="195.3" stroke="#fff" stroke-width="1" /><circle cx="25.3" cy="196" r="1.2" fill="#ffff00"  /><polygon points="25.1,222.2 19.5,227.8 11.5,227.8 5.9,222.2 5.9,214.2 11.5,208.6 19.5,208.6 25.1,214.2" fill="none" stroke="#ff0000" stroke-width="1.8" /><rect x="10.5" y="213.2" width="10" height="10" fill="none" stroke="#0000c0" stroke-width="1.8" /><polygon points="3,237 3,259.5 14,248" fill="#00ffff"  /><path d="M14 238L4 247.5L14 258H20C24 257 25.5 253 25.5 249L14 238Z" fill="#f0f0f0" stroke="#00008b" stroke-width="1.3" /><path d="M11.5 241L5 247.5L14 257.5C16 253 16 246 11.5 241Z" fill="#ffff00"  /><circle cx="14" cy="238" r="1.2" fill="#000"  /><circle cx="4" cy="247.5" r="1.2" fill="#000"  /><circle cx="14" cy="258" r="1.2" fill="#000"  /><circle cx="24.5" cy="248" r="1.2" fill="#000"  /><polygon points="3,276 12,275.5 21.5,285.5 8,286.5" fill="#e0b000" stroke="#a52a2a" stroke-width="1" /><polygon points="8,283.5 13,278 19,283.5" fill="#fff" stroke="#00008b" stroke-width="0.8" /><polygon points="12,279 21,269.5 25,272 24.5,277 17,283" fill="#6a8fd8" stroke="#4060b0" stroke-width="0.6" /><polygon points="19,271.5 22,269.5 24.5,272 21,275" fill="#c8d8f0"  /><polygon points="7.2,311.5 12,308 12,303.5 18.5,303.5 18.5,308 22.9,311.5 15,315.5" fill="#00d000" stroke="#008000" stroke-width="0.8" /><ellipse cx="15.2" cy="303.5" rx="3.2" ry="1.8" fill="#ffff00" stroke="#808000" stroke-width="0.7" /><path d="M12 308C14 309.5 16.5 309.5 18.5 308" fill="none" stroke="#008000" stroke-width="0.8" /><rect x="11.5" y="328.5" width="5" height="19.5" fill="#fff" stroke="#000" stroke-width="1.1" /><line x1="11.5" y1="334.5" x2="16.5" y2="330" stroke="#000" stroke-width="1.6" /><line x1="11.5" y1="339" x2="16.5" y2="334.5" stroke="#000" stroke-width="1.6" /><line x1="11.5" y1="343.5" x2="16.5" y2="339" stroke="#000" stroke-width="1.6" /><line x1="11.5" y1="348" x2="16.5" y2="343.5" stroke="#000" stroke-width="1.6" /><rect x="6.5" y="368.5" width="7" height="7" fill="#f0f0f0" stroke="#000" stroke-width="1.2" /><circle cx="14.2" cy="376" r="4.4" fill="#a0ffff" stroke="#00008b" stroke-width="1.4" /><line x1="17.5" y1="379.3" x2="21.5" y2="383.3" stroke="#c000c0" stroke-width="1.8" /><path d="M11.56 376A2.64 2.64 0 0 1 14.2 373.36" fill="none" stroke="#fff" stroke-width="1" /><circle cx="13.2" cy="375.2" r="1.2" fill="#000"  /><circle cx="13" cy="403" r="4.6" fill="#a0ffff" stroke="#00008b" stroke-width="1.4" /><line x1="16.45" y1="406.45" x2="20.45" y2="410.45" stroke="#c000c0" stroke-width="1.8" /><path d="M10.24 403A2.76 2.76 0 0 1 13 400.24" fill="none" stroke="#fff" stroke-width="1" /><line x1="17.5" y1="398.5" x2="21.5" y2="398.5" stroke="#00008b" stroke-width="1.2" /><circle cx="13" cy="431" r="4.6" fill="#a0ffff" stroke="#00008b" stroke-width="1.4" /><line x1="16.45" y1="434.45" x2="20.45" y2="438.45" stroke="#c000c0" stroke-width="1.8" /><path d="M10.24 431A2.76 2.76 0 0 1 13 428.24" fill="none" stroke="#fff" stroke-width="1" /><line x1="17" y1="426.5" x2="22" y2="426.5" stroke="#00008b" stroke-width="1.2" /><line x1="19.5" y1="424" x2="19.5" y2="429" stroke="#00008b" stroke-width="1.2" /><polyline points="8,455.5 14,455.5 8.5,461.5" fill="none" stroke="#a0a0a0" stroke-width="1.2" /><polyline points="14,458 20.5,458 9,466.5 21,466.5" fill="none" stroke="#a0a0a0" stroke-width="1.2" /><polyline points="7.5,463 7.5,467 11.5,467" fill="none" stroke="#a0a0a0" stroke-width="1.1" /><line x1="15.5" y1="453.5" x2="19.5" y2="457" stroke="#a0a0a0" stroke-width="1" /><line x1="19.5" y1="453.5" x2="15.5" y2="457" stroke="#a0a0a0" stroke-width="1" /><ellipse cx="14" cy="491" rx="8.2" ry="4" fill="#c0c0c0"  /><path d="M6 488C9 482.5 19 482.5 22.3 488C19 492.5 9 492.5 6 488Z" fill="#00008b"  /><ellipse cx="14" cy="488" rx="3.2" ry="2.2" fill="#00e0e0"  /><line x1="8" y1="485" x2="6.5" y2="482" stroke="#00008b" stroke-width="1.1" /><line x1="11" y1="483.5" x2="10" y2="481" stroke="#00008b" stroke-width="1.1" /><line x1="14" y1="483" x2="14" y2="480.5" stroke="#00008b" stroke-width="1.1" /><line x1="17" y1="483.5" x2="18" y2="481" stroke="#00008b" stroke-width="1.1" /><line x1="20" y1="485" x2="21.5" y2="482.5" stroke="#00008b" stroke-width="1.1" /><circle cx="15.5" cy="514.5" r="4.6" fill="#e8ffff" stroke="#00008b" stroke-width="1.4" /><line x1="19" y1="518" x2="22.3" y2="521.5" stroke="#ff00c0" stroke-width="1.8" /><line x1="15.5" y1="512.5" x2="15.5" y2="516.5" stroke="#00008b" stroke-width="1.2" /><path d="M10.5 510.5C8 512 7 515 8.5 518" fill="none" stroke="#0000ff" stroke-width="1" stroke-dasharray="1.2 1.2"/><polygon points="9,518 13,518 11,522.5" fill="#ff00c0"  /><line x1="2" y1="532.5" x2="28" y2="532.5" stroke="#a0a0a0" stroke-width="1" /><line x1="2" y1="533.5" x2="28" y2="533.5" stroke="#fff" stroke-width="1" /><line x1="6.5" y1="550.5" x2="20.5" y2="550.5" stroke="#000" stroke-width="1.3" /><line x1="13.5" y1="543.8" x2="13.5" y2="557.3" stroke="#000" stroke-width="1.3" /><polygon points="13.5,543 11,546.3 16,546.3" fill="#000"  /><polygon points="13.5,558 11,554.7 16,554.7" fill="#000"  /><polygon points="5.8,550.5 9,548 9,553" fill="#000"  /><polygon points="21.2,550.5 18,548 18,553" fill="#000"  /><circle cx="13.3" cy="577.5" r="5.3" fill="#fff" stroke="#000" stroke-width="1.3" /><line x1="17.3" y1="581.5" x2="22.3" y2="585.5" stroke="#008b8b" stroke-width="2.2" /><line x1="13.3" y1="574.5" x2="13.3" y2="580.5" stroke="#000" stroke-width="1" /><polygon points="13.3,573.5 11.8,575.8 14.8,575.8" fill="#000"  /><polygon points="13.3,581.5 11.8,579.2 14.8,579.2" fill="#000"  /><path d="M8 603.5A6.3 6.3 0 0 1 19.8 603" fill="none" stroke="#000" stroke-width="1.3" /><path d="M19.5 609.5A6.3 6.3 0 0 1 7.5 610" fill="none" stroke="#000" stroke-width="1.3" /><polygon points="21,600 21,605 16,604" fill="#000"  /><polygon points="6.2,613.2 6.2,608 11.5,609.3" fill="#000"  /><circle cx="45.9" cy="125.5" r="5.3" fill="#008000" stroke="#000" stroke-width="1.3" /><rect x="43.4" y="130.5" width="5" height="4.5" fill="#f0f0f0" stroke="#000" stroke-width="1" /><line x1="43.4" y1="132.5" x2="48.4" y2="132.5" stroke="#000" stroke-width="1" /><circle cx="45.9" cy="153.5" r="5.3" fill="#ffff00" stroke="#000" stroke-width="1.3" /><rect x="43.4" y="158.5" width="5" height="4.5" fill="#f0f0f0" stroke="#000" stroke-width="1" /><line x1="43.4" y1="160.5" x2="48.4" y2="160.5" stroke="#000" stroke-width="1" /><polygon points="40,179.5 40,188.5 42.3,186.3 43.8,189.5 45.2,188.8 43.7,185.8 46.5,185.5" fill="#a0a0a0"  /><circle cx="50" cy="181" r="4" fill="#f0f0f0" stroke="#a0a0a0" stroke-width="1.2" /><circle cx="50" cy="181" r="1.8" fill="#c8c8c8"  /><rect x="48" y="185.5" width="4" height="3.8" fill="#f0f0f0" stroke="#a0a0a0" stroke-width="1" /><circle cx="43" cy="207.8" r="2.7" fill="#a0a0a0" stroke="#000" stroke-width="1" /><circle cx="50.3" cy="215.5" r="2.7" fill="#ffff00" stroke="#000" stroke-width="1" /><polygon points="47.5,207.5 54,207.5 50.7,211" fill="#000"  /><rect x="49.6" y="204.5" width="2.4" height="3.5" fill="#000"  /><polygon points="39.5,215.5 46,215.5 42.7,212" fill="#000"  /><rect x="41.6" y="215.5" width="2.4" height="3.2" fill="#000"  /><polygon points="39.8,239.6 45.5,233.8 45.5,237 50.8,236 50.8,243.2 45.5,242.2 45.5,245.5" fill="#a8a8a8"  /><polygon points="52.8,267.8 47,262 47,265.2 41.6,264.2 41.6,271.4 47,270.4 47,273.7" fill="#a8a8a8"  /><line x1="35" y1="283.5" x2="60" y2="283.5" stroke="#a0a0a0" stroke-width="1" /><line x1="35" y1="284.5" x2="60" y2="284.5" stroke="#fff" stroke-width="1" /><polygon points="40.3,298.5 46.8,295.5 46.8,308 40.3,311" fill="#f0f0f0" stroke="#00008b" stroke-width="1.1" /><polygon points="43.8,297 50.3,294 50.3,306.5 43.8,309.5" fill="#f0f0f0" stroke="#00008b" stroke-width="1.1" /><polygon points="47.3,295.5 53.8,292.5 53.8,305 47.3,308" fill="#f0f0f0" stroke="#00008b" stroke-width="1.1" /><line x1="38" y1="323.5" x2="55.5" y2="323.5" stroke="#000" stroke-width="1.2" /><line x1="38" y1="325" x2="55.5" y2="325" stroke="#800080" stroke-width="1.4" /><line x1="38" y1="329" x2="55.5" y2="329" stroke="#000" stroke-width="1.2" stroke-dasharray="6 2 2 2"/><line x1="38" y1="330.5" x2="55.5" y2="330.5" stroke="#800080" stroke-width="1.4" stroke-dasharray="6 2 2 2"/><line x1="38" y1="334.8" x2="55.5" y2="334.8" stroke="#400040" stroke-width="1.6" stroke-dasharray="1.5 2"/><polygon points="39.5,354.5 54,354.5 49,360 49,363.5 45,363.5 45,360" fill="#f0f0f0" stroke="#a0a0a0" stroke-width="1.2" /><ellipse cx="46.8" cy="354.5" rx="7.3" ry="1.5" fill="#f0f0f0" stroke="#a0a0a0" stroke-width="1" /><line x1="42.5" y1="349.5" x2="42.5" y2="352.5" stroke="#a0a0a0" stroke-width="1" /><line x1="46.8" y1="349.5" x2="46.8" y2="352.5" stroke="#a0a0a0" stroke-width="1" /><line x1="51" y1="349.5" x2="51" y2="352.5" stroke="#a0a0a0" stroke-width="1" />
</svg>

<!-- canvas -->
<div class="a" style="left:77px;top:120px;width:1090px;height:539px;background:#000;box-shadow:inset 1px 1px 0 #808080;"></div>
<div class="a" style="left:77px;top:120px;width:1090px;height:1px;background:#9a9a9a;"></div>
<div class="a" style="left:77px;top:121px;width:1090px;height:1px;background:#505050;"></div>
<div class="a" style="left:77px;top:120px;width:1px;height:539px;background:#9a9a9a;"></div>
<div class="a" style="left:78px;top:121px;width:1px;height:538px;background:#505050;"></div>
<svg width="1360" height="768" viewBox="0 0 1360 768" style="left:0;top:0;pointer-events:none;">
<line x1="88.5" y1="114.5" x2="88.5" y2="120" stroke="#000" stroke-width="1" /><line x1="108.5" y1="114.5" x2="108.5" y2="120" stroke="#000" stroke-width="1" /><line x1="128.5" y1="114.5" x2="128.5" y2="120" stroke="#000" stroke-width="1" /><line x1="147.5" y1="114.5" x2="147.5" y2="120" stroke="#000" stroke-width="1" /><line x1="167.5" y1="114.5" x2="167.5" y2="120" stroke="#000" stroke-width="1" /><line x1="187.5" y1="114.5" x2="187.5" y2="120" stroke="#000" stroke-width="1" /><line x1="207.5" y1="114.5" x2="207.5" y2="120" stroke="#000" stroke-width="1" /><line x1="227.5" y1="109" x2="227.5" y2="120" stroke="#000" stroke-width="1" /><line x1="247.5" y1="114.5" x2="247.5" y2="120" stroke="#000" stroke-width="1" /><line x1="267.5" y1="114.5" x2="267.5" y2="120" stroke="#000" stroke-width="1" /><line x1="286.5" y1="114.5" x2="286.5" y2="120" stroke="#000" stroke-width="1" /><line x1="306.5" y1="114.5" x2="306.5" y2="120" stroke="#000" stroke-width="1" /><line x1="326.5" y1="114.5" x2="326.5" y2="120" stroke="#000" stroke-width="1" /><line x1="346.5" y1="114.5" x2="346.5" y2="120" stroke="#000" stroke-width="1" /><line x1="366.5" y1="114.5" x2="366.5" y2="120" stroke="#000" stroke-width="1" /><line x1="386.5" y1="114.5" x2="386.5" y2="120" stroke="#000" stroke-width="1" /><line x1="406.5" y1="114.5" x2="406.5" y2="120" stroke="#000" stroke-width="1" /><line x1="426.5" y1="109" x2="426.5" y2="120" stroke="#000" stroke-width="1" /><line x1="445.5" y1="114.5" x2="445.5" y2="120" stroke="#000" stroke-width="1" /><line x1="465.5" y1="114.5" x2="465.5" y2="120" stroke="#000" stroke-width="1" /><line x1="485.5" y1="114.5" x2="485.5" y2="120" stroke="#000" stroke-width="1" /><line x1="505.5" y1="114.5" x2="505.5" y2="120" stroke="#000" stroke-width="1" /><line x1="525.5" y1="114.5" x2="525.5" y2="120" stroke="#000" stroke-width="1" /><line x1="545.5" y1="114.5" x2="545.5" y2="120" stroke="#000" stroke-width="1" /><line x1="565.5" y1="114.5" x2="565.5" y2="120" stroke="#000" stroke-width="1" /><line x1="584.5" y1="114.5" x2="584.5" y2="120" stroke="#000" stroke-width="1" /><line x1="604.5" y1="114.5" x2="604.5" y2="120" stroke="#000" stroke-width="1" /><line x1="624.5" y1="109" x2="624.5" y2="120" stroke="#000" stroke-width="1" /><line x1="644.5" y1="114.5" x2="644.5" y2="120" stroke="#000" stroke-width="1" /><line x1="664.5" y1="114.5" x2="664.5" y2="120" stroke="#000" stroke-width="1" /><line x1="684.5" y1="114.5" x2="684.5" y2="120" stroke="#000" stroke-width="1" /><line x1="704.5" y1="114.5" x2="704.5" y2="120" stroke="#000" stroke-width="1" /><line x1="724.5" y1="114.5" x2="724.5" y2="120" stroke="#000" stroke-width="1" /><line x1="743.5" y1="114.5" x2="743.5" y2="120" stroke="#000" stroke-width="1" /><line x1="763.5" y1="114.5" x2="763.5" y2="120" stroke="#000" stroke-width="1" /><line x1="783.5" y1="114.5" x2="783.5" y2="120" stroke="#000" stroke-width="1" /><line x1="803.5" y1="114.5" x2="803.5" y2="120" stroke="#000" stroke-width="1" /><line x1="823.5" y1="109" x2="823.5" y2="120" stroke="#000" stroke-width="1" /><line x1="843.5" y1="114.5" x2="843.5" y2="120" stroke="#000" stroke-width="1" /><line x1="863.5" y1="114.5" x2="863.5" y2="120" stroke="#000" stroke-width="1" /><line x1="882.5" y1="114.5" x2="882.5" y2="120" stroke="#000" stroke-width="1" /><line x1="902.5" y1="114.5" x2="902.5" y2="120" stroke="#000" stroke-width="1" /><line x1="922.5" y1="114.5" x2="922.5" y2="120" stroke="#000" stroke-width="1" /><line x1="942.5" y1="114.5" x2="942.5" y2="120" stroke="#000" stroke-width="1" /><line x1="962.5" y1="114.5" x2="962.5" y2="120" stroke="#000" stroke-width="1" /><line x1="982.5" y1="114.5" x2="982.5" y2="120" stroke="#000" stroke-width="1" /><line x1="1002.5" y1="114.5" x2="1002.5" y2="120" stroke="#000" stroke-width="1" /><line x1="1022.5" y1="109" x2="1022.5" y2="120" stroke="#000" stroke-width="1" /><line x1="1041.5" y1="114.5" x2="1041.5" y2="120" stroke="#000" stroke-width="1" /><line x1="1061.5" y1="114.5" x2="1061.5" y2="120" stroke="#000" stroke-width="1" /><line x1="1081.5" y1="114.5" x2="1081.5" y2="120" stroke="#000" stroke-width="1" /><line x1="1101.5" y1="114.5" x2="1101.5" y2="120" stroke="#000" stroke-width="1" /><line x1="1121.5" y1="114.5" x2="1121.5" y2="120" stroke="#000" stroke-width="1" /><line x1="1141.5" y1="114.5" x2="1141.5" y2="120" stroke="#000" stroke-width="1" /><line x1="72.5" y1="125.5" x2="77" y2="125.5" stroke="#000" stroke-width="1" class="vt"/><line x1="72.5" y1="133.5" x2="77" y2="133.5" stroke="#000" stroke-width="1" class="vt"/><line x1="72.5" y1="141.5" x2="77" y2="141.5" stroke="#000" stroke-width="1" class="vt"/><line x1="66" y1="149.5" x2="77" y2="149.5" stroke="#000" stroke-width="1" /><line x1="72.5" y1="157.5" x2="77" y2="157.5" stroke="#000" stroke-width="1" class="vt"/><line x1="72.5" y1="165.5" x2="77" y2="165.5" stroke="#000" stroke-width="1" class="vt"/><line x1="72.5" y1="173.5" x2="77" y2="173.5" stroke="#000" stroke-width="1" class="vt"/><line x1="72.5" y1="181.5" x2="77" y2="181.5" stroke="#000" stroke-width="1" class="vt"/><line x1="72.5" y1="189.5" x2="77" y2="189.5" stroke="#000" stroke-width="1" class="vt"/><line x1="72.5" y1="197.5" x2="77" y2="197.5" stroke="#000" stroke-width="1" class="vt"/><line x1="72.5" y1="205.5" x2="77" y2="205.5" stroke="#000" stroke-width="1" class="vt"/><line x1="72.5" y1="213.5" x2="77" y2="213.5" stroke="#000" stroke-width="1" class="vt"/><line x1="72.5" y1="221.5" x2="77" y2="221.5" stroke="#000" stroke-width="1" class="vt"/><line x1="66" y1="229.5" x2="77" y2="229.5" stroke="#000" stroke-width="1" /><line x1="72.5" y1="237.5" x2="77" y2="237.5" stroke="#000" stroke-width="1" class="vt"/><line x1="72.5" y1="245.5" x2="77" y2="245.5" stroke="#000" stroke-width="1" class="vt"/><line x1="72.5" y1="253.5" x2="77" y2="253.5" stroke="#000" stroke-width="1" class="vt"/><line x1="72.5" y1="261.5" x2="77" y2="261.5" stroke="#000" stroke-width="1" class="vt"/><line x1="72.5" y1="269.5" x2="77" y2="269.5" stroke="#000" stroke-width="1" class="vt"/><line x1="72.5" y1="277.5" x2="77" y2="277.5" stroke="#000" stroke-width="1" class="vt"/><line x1="72.5" y1="285.5" x2="77" y2="285.5" stroke="#000" stroke-width="1" class="vt"/><line x1="72.5" y1="293.5" x2="77" y2="293.5" stroke="#000" stroke-width="1" class="vt"/><line x1="72.5" y1="301.5" x2="77" y2="301.5" stroke="#000" stroke-width="1" class="vt"/><line x1="66" y1="309.5" x2="77" y2="309.5" stroke="#000" stroke-width="1" /><line x1="72.5" y1="317.5" x2="77" y2="317.5" stroke="#000" stroke-width="1" class="vt"/><line x1="72.5" y1="325.5" x2="77" y2="325.5" stroke="#000" stroke-width="1" class="vt"/><line x1="72.5" y1="333.5" x2="77" y2="333.5" stroke="#000" stroke-width="1" class="vt"/><line x1="72.5" y1="341.5" x2="77" y2="341.5" stroke="#000" stroke-width="1" class="vt"/><line x1="72.5" y1="349.5" x2="77" y2="349.5" stroke="#000" stroke-width="1" class="vt"/><line x1="72.5" y1="357.5" x2="77" y2="357.5" stroke="#000" stroke-width="1" class="vt"/><line x1="72.5" y1="365.5" x2="77" y2="365.5" stroke="#000" stroke-width="1" class="vt"/><line x1="72.5" y1="373.5" x2="77" y2="373.5" stroke="#000" stroke-width="1" class="vt"/><line x1="72.5" y1="381.5" x2="77" y2="381.5" stroke="#000" stroke-width="1" class="vt"/><line x1="66" y1="389.5" x2="77" y2="389.5" stroke="#000" stroke-width="1" /><line x1="72.5" y1="397.5" x2="77" y2="397.5" stroke="#000" stroke-width="1" class="vt"/><line x1="72.5" y1="405.5" x2="77" y2="405.5" stroke="#000" stroke-width="1" class="vt"/><line x1="72.5" y1="413.5" x2="77" y2="413.5" stroke="#000" stroke-width="1" class="vt"/><line x1="72.5" y1="421.5" x2="77" y2="421.5" stroke="#000" stroke-width="1" class="vt"/><line x1="72.5" y1="429.5" x2="77" y2="429.5" stroke="#000" stroke-width="1" class="vt"/><line x1="72.5" y1="437.5" x2="77" y2="437.5" stroke="#000" stroke-width="1" class="vt"/><line x1="72.5" y1="445.5" x2="77" y2="445.5" stroke="#000" stroke-width="1" class="vt"/><line x1="72.5" y1="453.5" x2="77" y2="453.5" stroke="#000" stroke-width="1" class="vt"/><line x1="72.5" y1="461.5" x2="77" y2="461.5" stroke="#000" stroke-width="1" class="vt"/><line x1="66" y1="469.5" x2="77" y2="469.5" stroke="#000" stroke-width="1" /><line x1="72.5" y1="477.5" x2="77" y2="477.5" stroke="#000" stroke-width="1" class="vt"/><line x1="72.5" y1="485.5" x2="77" y2="485.5" stroke="#000" stroke-width="1" class="vt"/><line x1="72.5" y1="493.5" x2="77" y2="493.5" stroke="#000" stroke-width="1" class="vt"/><line x1="72.5" y1="501.5" x2="77" y2="501.5" stroke="#000" stroke-width="1" class="vt"/><line x1="72.5" y1="509.5" x2="77" y2="509.5" stroke="#000" stroke-width="1" class="vt"/><line x1="72.5" y1="517.5" x2="77" y2="517.5" stroke="#000" stroke-width="1" class="vt"/><line x1="72.5" y1="525.5" x2="77" y2="525.5" stroke="#000" stroke-width="1" class="vt"/><line x1="72.5" y1="533.5" x2="77" y2="533.5" stroke="#000" stroke-width="1" class="vt"/><line x1="72.5" y1="541.5" x2="77" y2="541.5" stroke="#000" stroke-width="1" class="vt"/><line x1="66" y1="549.5" x2="77" y2="549.5" stroke="#000" stroke-width="1" /><line x1="72.5" y1="557.5" x2="77" y2="557.5" stroke="#000" stroke-width="1" class="vt"/><line x1="72.5" y1="565.5" x2="77" y2="565.5" stroke="#000" stroke-width="1" class="vt"/><line x1="72.5" y1="573.5" x2="77" y2="573.5" stroke="#000" stroke-width="1" class="vt"/><line x1="72.5" y1="581.5" x2="77" y2="581.5" stroke="#000" stroke-width="1" class="vt"/><line x1="72.5" y1="589.5" x2="77" y2="589.5" stroke="#000" stroke-width="1" class="vt"/><line x1="72.5" y1="597.5" x2="77" y2="597.5" stroke="#000" stroke-width="1" class="vt"/><line x1="72.5" y1="605.5" x2="77" y2="605.5" stroke="#000" stroke-width="1" class="vt"/><line x1="72.5" y1="613.5" x2="77" y2="613.5" stroke="#000" stroke-width="1" class="vt"/><line x1="72.5" y1="621.5" x2="77" y2="621.5" stroke="#000" stroke-width="1" class="vt"/><line x1="66" y1="629.5" x2="77" y2="629.5" stroke="#000" stroke-width="1" /><line x1="72.5" y1="637.5" x2="77" y2="637.5" stroke="#000" stroke-width="1" class="vt"/><line x1="72.5" y1="645.5" x2="77" y2="645.5" stroke="#000" stroke-width="1" class="vt"/><line x1="72.5" y1="653.5" x2="77" y2="653.5" stroke="#000" stroke-width="1" class="vt"/>
</svg>
<div class="a" style="left:191.1px;top:108px;width:31.8px;height:12px;background:#f0f0f0;"></div>
<div class="t" style="left:192.0px;top:108.2px;font-size:12px;font-weight:bold;letter-spacing:1.03px;">1000</div>
<div class="a" style="left:397.35px;top:108px;width:24.2px;height:12px;background:#f0f0f0;"></div>
<div class="t" style="left:398.3px;top:108.2px;font-size:12px;font-weight:bold;letter-spacing:1.09px;">500</div>
<div class="a" style="left:611.6px;top:108px;width:8.6px;height:12px;background:#f0f0f0;"></div>
<div class="t" style="left:612.5px;top:108.2px;font-size:12px;font-weight:bold;letter-spacing:-0.07px;">0</div>
<div class="a" style="left:794.65px;top:108px;width:24.2px;height:12px;background:#f0f0f0;"></div>
<div class="t" style="left:795.5px;top:108.2px;font-size:12px;font-weight:bold;letter-spacing:1.09px;">500</div>
<div class="a" style="left:985.7px;top:108px;width:31.8px;height:12px;background:#f0f0f0;"></div>
<div class="t" style="left:986.6px;top:108.2px;font-size:12px;font-weight:bold;letter-spacing:1.03px;">1000</div>
<div class="a" style="left:1160px;top:107px;width:26px;height:13px;background:#f0f0f0;"></div>
<div class="t" style="left:1161.5px;top:108.2px;font-size:12.5px;font-weight:bold;letter-spacing:0.27px;">mm</div>
<div class="a" style="left:68px;top:115.6px;width:9px;height:11px;background:#f0f0f0;"></div>
<div class="t" style="left:69.6px;top:115.3px;font-size:12px;font-weight:bold;">0</div>
<div class="a" style="left:68px;top:131.6px;width:9px;height:11px;background:#f0f0f0;"></div>
<div class="t" style="left:69.6px;top:131.3px;font-size:12px;font-weight:bold;">0</div>
<div class="a" style="left:68px;top:179.4px;width:9px;height:11px;background:#f0f0f0;"></div>
<div class="t" style="left:69.6px;top:179.1px;font-size:12px;font-weight:bold;">4</div>
<div class="a" style="left:68px;top:195.4px;width:9px;height:11px;background:#f0f0f0;"></div>
<div class="t" style="left:69.6px;top:195.1px;font-size:12px;font-weight:bold;">0</div>
<div class="a" style="left:68px;top:211.4px;width:9px;height:11px;background:#f0f0f0;"></div>
<div class="t" style="left:69.6px;top:211.1px;font-size:12px;font-weight:bold;">0</div>
<div class="a" style="left:68px;top:259.4px;width:9px;height:11px;background:#f0f0f0;"></div>
<div class="t" style="left:69.6px;top:259.1px;font-size:12px;font-weight:bold;">2</div>
<div class="a" style="left:68px;top:275.4px;width:9px;height:11px;background:#f0f0f0;"></div>
<div class="t" style="left:69.6px;top:275.1px;font-size:12px;font-weight:bold;">0</div>
<div class="a" style="left:68px;top:291.4px;width:9px;height:11px;background:#f0f0f0;"></div>
<div class="t" style="left:69.6px;top:291.1px;font-size:12px;font-weight:bold;">0</div>
<div class="a" style="left:68px;top:371.5px;width:9px;height:11px;background:#f0f0f0;"></div>
<div class="t" style="left:69.6px;top:371.2px;font-size:12px;font-weight:bold;">0</div>
<div class="a" style="left:68px;top:419.3px;width:9px;height:11px;background:#f0f0f0;"></div>
<div class="t" style="left:69.6px;top:419.0px;font-size:12px;font-weight:bold;">2</div>
<div class="a" style="left:68px;top:435.3px;width:9px;height:11px;background:#f0f0f0;"></div>
<div class="t" style="left:69.6px;top:435.0px;font-size:12px;font-weight:bold;">0</div>
<div class="a" style="left:68px;top:451.3px;width:9px;height:11px;background:#f0f0f0;"></div>
<div class="t" style="left:69.6px;top:451.0px;font-size:12px;font-weight:bold;">0</div>
<div class="a" style="left:68px;top:499.2px;width:9px;height:11px;background:#f0f0f0;"></div>
<div class="t" style="left:69.6px;top:498.9px;font-size:12px;font-weight:bold;">4</div>
<div class="a" style="left:68px;top:515.2px;width:9px;height:11px;background:#f0f0f0;"></div>
<div class="t" style="left:69.6px;top:514.9px;font-size:12px;font-weight:bold;">0</div>
<div class="a" style="left:68px;top:531.2px;width:9px;height:11px;background:#f0f0f0;"></div>
<div class="t" style="left:69.6px;top:530.9px;font-size:12px;font-weight:bold;">0</div>
<div class="a" style="left:68px;top:579.1px;width:9px;height:11px;background:#f0f0f0;"></div>
<div class="t" style="left:69.6px;top:578.8px;font-size:12px;font-weight:bold;">6</div>
<div class="a" style="left:68px;top:595.1px;width:9px;height:11px;background:#f0f0f0;"></div>
<div class="t" style="left:69.6px;top:594.8px;font-size:12px;font-weight:bold;">0</div>
<div class="a" style="left:68px;top:611.1px;width:9px;height:11px;background:#f0f0f0;"></div>
<div class="t" style="left:69.6px;top:610.8px;font-size:12px;font-weight:bold;">0</div>
<div class="a" style="left:64px;top:106px;width:13px;height:15px;background:#f0f0f0;"></div>
<div class="a" style="left:64px;top:120px;width:13px;height:6.4px;overflow:hidden;"><div class="t" style="left:5.6px;top:-4.7px;font-size:12px;font-weight:bold;">0</div></div><div class="a" style="left:64px;top:659px;width:13px;height:16px;background:#f0f0f0;"></div>
<div class="t" style="left:69.6px;top:660.7px;font-size:12px;font-weight:bold;">8</div>
<div class="a" style="left:1167px;top:122px;width:17px;height:537px;background:#f0f0f0;"></div>
<div class="a" style="left:79px;top:659px;width:1088px;height:16px;background:#f0f0f0;"></div>
<div class="a" style="left:1167px;top:659px;width:17px;height:16px;background:#f0f0f0;"></div>
<div class="a" style="left:1167px;top:234px;width:16px;height:218px;background:linear-gradient(90deg,#f4f4f4 0,#e6e6e6 45%,#d2d2d2 55%,#cfcfcf 100%);border:1px solid #979797;border-radius:2px;box-sizing:border-box;"></div>
<div class="a" style="left:1171px;top:339px;width:8px;height:1px;background:#8c8c8c;"></div>
<div class="a" style="left:1171px;top:341px;width:8px;height:1px;background:#8c8c8c;"></div>
<div class="a" style="left:1171px;top:343px;width:8px;height:1px;background:#8c8c8c;"></div>
<div class="a" style="left:1171px;top:345px;width:8px;height:1px;background:#8c8c8c;"></div>
<svg width="1360" height="768" viewBox="0 0 1360 768" style="left:0;top:0;pointer-events:none;">
<polygon points="1171.5,133 1175.5,129 1179.5,133" fill="#606060"  /><polygon points="1171.5,648.5 1179.5,648.5 1175.5,652.5" fill="#606060"  /><polygon points="90,662.5 90,670.5 86,666.5" fill="#a0a0a0"  /><polygon points="1156,662.5 1156,670.5 1160,666.5" fill="#a0a0a0"  />
</svg>
<div class="a" style="left:0px;top:675px;width:1360px;height:1px;background:#fff;"></div>

<!-- art -->
<svg width="1360" height="768" viewBox="0 0 1360 768" style="left:0;top:0;pointer-events:none;">
<defs><radialGradient id="ybg" cx=".3" cy=".9" r="1"><stop offset="0" stop-color="#fdfdb0"/><stop offset="1" stop-color="#f9f9a8"/></radialGradient><clipPath id="rc"><polygon points="318.5,247.5 318.5,144.5 815.5,144.5 815.5,624.5 815.5,624.5 808.0,624.5 808.0,623.5 803.5,623.5 795.0,615.5 778.5,602.0 769.4,555.0 751.2,538.0 749.5,534.0 747.1,528.3 744.4,521.9 742.0,516.0 739.9,510.7 738.0,505.5 736.1,500.3 734.3,495.0 732.6,489.5 731.0,483.9 729.5,478.4 728.0,473.0 726.6,467.8 725.3,462.6 724.0,457.7 722.6,453.4 721.1,449.8 719.5,446.7 717.9,443.8 716.5,441.0 715.2,438.2 714.1,435.7 713.0,433.0 712.0,430.0 711.2,426.4 710.4,422.5 709.7,418.5 709.0,415.0 708.2,412.0 707.3,409.4 706.4,406.8 705.6,404.3 704.8,401.7 704.1,399.1 703.4,396.6 702.8,394.0 702.2,391.4 701.7,388.7 701.3,386.0 701.0,383.4 700.8,380.8 700.7,378.2 700.6,375.6 700.6,373.0 700.6,370.5 700.7,367.9 700.8,365.4 701.0,362.6 701.3,359.6 701.8,356.3 702.3,353.1 703.0,350.0 703.8,347.1 704.8,344.2 705.9,341.5 707.0,339.0 708.1,336.8 709.3,334.8 710.6,332.9 712.0,331.0 713.8,329.0 715.9,327.0 717.7,325.1 718.6,323.5 718.4,322.2 717.4,321.2 716.0,320.3 714.7,319.6 713.6,319.1 712.4,318.8 711.2,318.5 710.0,318.0 708.8,317.2 707.7,316.3 706.6,315.3 705.6,314.4 704.7,313.6 704.0,312.7 703.3,311.9 702.8,311.0 702.4,310.0 702.1,308.8 701.8,307.7 701.7,306.6 701.6,305.6 701.6,304.7 701.8,303.8 702.0,303.0 702.4,302.2 703.0,301.4 703.7,300.7 704.3,300.0 704.8,299.3 705.2,298.7 705.7,298.1 706.3,297.7 707.0,297.4 707.9,297.3 708.8,297.3 709.5,297.5 710.1,298.0 710.5,298.8 710.9,299.7 711.5,300.5 712.2,301.3 713.0,302.1 713.9,302.8 714.7,303.2 715.5,303.3 716.3,303.2 717.2,303.0 718.0,302.6 718.8,302.2 719.6,301.8 720.4,301.1 721.3,300.0 722.4,298.2 723.7,295.9 724.9,293.4 726.0,291.0 726.9,288.7 727.7,286.4 728.4,284.2 729.0,281.9 729.4,279.7 729.8,277.5 729.9,275.3 730.0,273.0 729.9,270.7 729.8,268.4 729.4,266.0 729.0,263.6 728.5,260.9 727.8,258.1 727.0,255.4 726.0,253.0 724.6,251.0 722.8,249.2 721.1,247.7 720.0,246.7 718.2,247.5 717.0,246.7 715.2,245.5 713.1,244.2 711.0,243.0 708.7,241.8 706.2,240.5 703.7,239.4 701.5,238.5 699.7,238.0 698.1,237.7 696.6,237.6 695.0,237.6 693.3,237.7 691.5,237.8 689.7,238.1 687.9,238.5 686.1,239.0 684.3,239.6 682.6,240.3 681.0,241.0 679.6,241.6 678.3,242.3 677.0,243.0 675.6,243.9 674.0,245.1 672.2,246.6 670.6,248.1 669.4,249.4 668.7,250.5 668.2,251.6 668.1,252.6 668.0,253.5 668.1,254.4 668.3,255.3 668.6,256.1 669.0,256.9 669.4,257.7 669.8,258.6 670.2,259.3 670.8,259.7 671.5,259.6 672.3,259.2 673.2,258.7 674.0,258.4 674.8,258.3 675.5,258.2 676.3,258.3 676.9,258.7 677.5,259.3 678.0,260.1 678.4,261.2 678.6,262.4 678.5,263.9 678.2,265.8 677.7,267.6 676.9,269.2 675.8,270.5 674.4,271.7 672.9,272.6 671.5,273.3 670.1,273.6 668.7,273.7 667.3,273.6 666.0,273.3 664.9,272.8 663.9,272.1 662.9,271.4 661.9,270.9 660.9,270.7 660.0,270.7 659.0,270.8 658.0,270.9 656.9,270.9 655.8,270.9 654.7,271.1 653.7,271.7 653.0,272.7 652.5,274.0 651.8,275.6 650.9,277.4 649.6,279.5 648.2,281.8 646.4,284.3 644.1,287.0 641.3,289.9 637.9,293.1 634.3,296.4 630.4,299.3 626.2,302.0 621.7,304.5 617.1,306.9 612.7,308.9 608.5,310.6 604.5,312.1 600.4,313.3 596.2,314.4 591.7,315.4 587.1,316.2 582.6,316.9 578.5,317.4 574.8,317.7 571.4,317.8 568.5,317.8 566.5,317.8 566.5,317.8 564.5,317.8 561.6,317.8 558.2,317.7 554.5,317.4 550.4,316.9 545.9,316.2 541.3,315.4 536.8,314.4 532.6,313.3 528.5,312.1 524.5,310.6 520.3,308.9 515.9,306.9 511.3,304.5 506.8,302.0 502.6,299.3 498.7,296.4 495.1,293.1 491.7,289.9 488.9,287.0 486.6,284.3 484.8,281.8 483.4,279.5 482.1,277.4 481.2,275.6 480.5,274.0 480.0,272.7 479.3,271.7 478.3,271.1 477.2,270.9 476.1,270.9 475.0,270.9 474.0,270.8 473.0,270.7 472.1,270.7 471.1,270.9 470.1,271.4 469.1,272.1 468.1,272.8 467.0,273.3 465.7,273.6 464.3,273.7 462.9,273.6 461.5,273.3 460.1,272.6 458.6,271.7 457.2,270.5 456.1,269.2 455.3,267.6 454.8,265.8 454.5,263.9 454.4,262.4 454.6,261.2 455.0,260.1 455.5,259.3 456.1,258.7 456.7,258.3 457.5,258.2 458.2,258.3 459.0,258.4 459.8,258.7 460.7,259.2 461.5,259.6 462.2,259.7 462.8,259.3 463.2,258.6 463.6,257.7 464.0,256.9 464.4,256.1 464.7,255.3 464.9,254.4 465.0,253.5 464.9,252.6 464.8,251.6 464.3,250.5 463.6,249.4 462.4,248.1 460.7,246.6 459.0,245.1 457.4,243.9 456.0,243.0 454.7,242.3 453.4,241.6 452.0,241.0 450.4,240.3 448.7,239.6 446.9,239.0 445.1,238.5 443.3,238.1 441.5,237.8 439.7,237.7 438.0,237.6 436.4,237.6 434.9,237.7 433.3,238.0 431.5,238.5 429.3,239.4 426.8,240.5 424.3,241.8 422.0,243.0 419.9,244.2 417.8,245.5 416.0,246.7 414.8,247.5"/></clipPath><filter id="fb" filterUnits="userSpaceOnUse" x="300" y="130" width="540" height="510"><feGaussianBlur stdDeviation="2.2"/></filter><filter id="fw" filterUnits="userSpaceOnUse" x="300" y="130" width="540" height="510"><feGaussianBlur stdDeviation="0.85"/></filter><filter id="fm" filterUnits="userSpaceOnUse" x="300" y="130" width="540" height="510"><feGaussianBlur stdDeviation="0.55"/></filter><filter id="ft" filterUnits="userSpaceOnUse" x="300" y="130" width="540" height="510"><feGaussianBlur stdDeviation="0.32"/></filter><filter id="fh" filterUnits="userSpaceOnUse" x="300" y="130" width="540" height="510"><feGaussianBlur stdDeviation="0.45"/></filter><filter id="rel" filterUnits="userSpaceOnUse" x="300" y="130" width="540" height="510" color-interpolation-filters="sRGB"><feGaussianBlur in="SourceAlpha" stdDeviation="0.35" result="h"/><feDiffuseLighting in="h" surfaceScale="3.3" diffuseConstant="1" lighting-color="#ffffff" result="d"><feDistantLight azimuth="235" elevation="80"/></feDiffuseLighting><feColorMatrix in="h" type="matrix" values="0 0 0 -0.36 1  0 0 0 -0.36 1  0 0 0 -0.36 1  0 0 0 0 1" result="hr"/><feComposite in="d" in2="hr" operator="arithmetic" k1="1" k2="0" k3="0" k4="0" result="dd"/><feComponentTransfer in="dd"><feFuncR type="linear" slope="1.0" intercept="0"/><feFuncG type="linear" slope="1.0" intercept="0"/><feFuncB type="gamma" amplitude="0.68" exponent="1.8" offset="0"/></feComponentTransfer></filter></defs><polygon points="318,144 816,144 816,625 700,625 700,318 318,318" fill="url(#ybg)"/><g clip-path="url(#rc)"><g filter="url(#rel)" fill="#000"><g id="lh"><g filter="url(#fb)"><polygon points="396.1,244.1 397.1,245.7 398.5,248.0 400.0,250.6 401.3,253.2 401.6,255.0 400.7,256.0 400.5,257.4 401.8,259.9 406.1,263.7 414.7,266.4 423.7,265.4 429.1,263.1 431.8,261.6 432.8,261.4 433.0,261.8 434.0,261.7 435.8,261.1 437.5,260.6 438.6,260.3 439.0,260.4 438.7,260.6 438.0,260.8 437.3,260.8 437.2,260.8 437.7,260.7 438.1,260.6 438.4,260.5 438.8,260.4 439.3,260.4 439.7,260.3 440.0,260.2 440.6,260.3 441.3,260.4 442.3,260.6 443.3,261.0 444.3,261.2 444.8,261.3 444.9,261.2 444.9,261.0 445.1,261.0 445.9,261.4 446.8,261.9 447.5,262.3 447.8,262.5 447.3,261.7 446.4,260.3 446.1,259.5 446.1,259.7 446.4,260.6 446.7,261.7 475.1,251.8 474.9,251.2 474.5,250.1 473.8,248.3 472.8,246.1 471.3,243.6 469.5,241.6 467.9,239.9 466.2,238.4 464.7,237.0 463.2,235.8 461.7,234.7 460.1,233.7 458.7,232.9 457.3,232.2 456.1,231.6 454.7,230.9 453.1,230.2 451.4,229.5 449.6,228.8 447.6,228.3 445.7,227.8 443.8,227.4 441.9,227.0 440.0,226.8 438.1,226.7 436.5,226.7 434.7,226.8 432.6,227.0 430.3,227.5 428.0,228.2 425.6,229.2 423.3,230.4 421.0,231.6 419.0,232.8 416.8,234.2 414.6,235.9 412.9,237.5 412.1,238.4 412.7,238.5 414.8,238.4 416.9,239.3 417.1,239.8 415.9,239.4 413.7,238.3 411.0,237.4 408.3,236.9 405.5,236.7 402.8,236.7 400.5,236.6 398.9,236.6"/><polygon points="469.0,245.2 467.7,246.5 465.8,248.3 463.6,251.1 461.5,254.5 460.2,258.2 459.7,261.7 459.7,265.6 460.0,270.3 460.7,275.7 462.2,281.8 464.6,287.7 467.8,292.5 470.9,295.9 473.4,298.0 475.7,299.7 478.4,301.9 481.6,304.5 485.2,307.2 489.1,310.0 493.2,312.7 497.4,315.2 501.7,317.5 505.9,319.6 510.0,321.5 514.0,323.2 518.0,324.7 521.9,326.0 525.7,327.1 529.5,328.0 533.3,328.9 537.3,329.8 541.5,330.6 545.5,331.3 549.3,331.8 552.9,332.3 556.1,332.6 559.1,332.7 561.8,332.8 564.2,332.8 566.6,332.8 569.6,332.7 572.9,332.6 576.1,332.5 578.7,332.4 580.5,332.4 579.7,310.4 577.9,310.4 575.2,310.5 572.2,310.6 569.2,310.7 566.4,310.8 564.1,310.8 561.9,310.8 559.9,310.7 557.8,310.6 555.3,310.4 552.2,310.0 548.8,309.6 545.3,309.0 541.8,308.3 538.5,307.6 535.3,306.7 532.3,305.7 529.3,304.7 526.3,303.5 523.3,302.2 520.0,300.6 516.5,298.8 513.1,297.0 509.9,295.0 507.0,293.0 504.4,290.8 501.8,288.4 499.4,285.9 497.1,283.4 495.1,281.0 493.4,278.9 492.1,277.3 491.5,276.3 491.4,275.8 491.5,275.3 491.6,274.1 492.1,272.1 492.7,269.4 493.3,266.5 493.7,263.8 493.9,261.4 493.9,258.9 493.9,256.3 493.9,254.0 494.0,252.2"/></g><g filter="url(#fw)"><ellipse cx="461.5" cy="265.5" rx="9.0" ry="9.5" fill-opacity="0.5"/><ellipse cx="461.5" cy="265.5" rx="6.2" ry="6.7" fill-opacity="0.35"/><ellipse cx="474.0" cy="266.5" rx="7.8" ry="6.7" fill-opacity="0.5"/><path d="M363.2 145.7Q367.1 157.0 379.0 156.0Q373.1 147.9 363.2 145.7Z"/><polygon points="414.7,155.8 415.7,156.7 417.2,158.0 419.0,159.6 421.0,161.1 422.9,162.5 424.9,163.7 426.9,164.8 429.0,165.9 431.1,167.0 433.4,167.9 435.9,168.8 438.6,169.6 441.2,170.3 443.4,170.9 445.0,171.3 447.0,164.5 445.5,164.0 443.3,163.3 440.9,162.5 438.4,161.6 436.2,160.8 434.3,159.9 432.4,159.0 430.4,158.1 428.5,157.1 426.7,156.1 424.8,155.2 422.7,154.1 420.7,153.0 419.0,152.0 417.8,151.4"/><polygon points="439.5,181.9 439.6,183.3 439.7,185.2 439.8,187.4 439.8,189.7 439.9,191.6 439.8,193.5 439.7,195.4 439.6,197.4 439.5,199.3 439.5,201.2 439.4,203.1 439.4,205.1 439.3,207.0 439.3,208.6 439.3,209.8 444.7,210.5 445.0,209.4 445.4,207.8 445.9,206.0 446.4,203.9 446.8,201.9 447.1,200.0 447.3,197.9 447.5,195.8 447.6,193.7 447.5,191.4 447.3,189.1 447.0,186.7 446.5,184.4 446.1,182.5 445.9,181.1"/><circle cx="328.9" cy="151.7" r="3.8"/><circle cx="348.9" cy="150.7" r="4.2"/><circle cx="337.5" cy="158.9" r="3.4"/><circle cx="343.9" cy="158.2" r="3.4"/><circle cx="350.1" cy="157.5" r="3.4"/><circle cx="356.1" cy="156.9" r="3.4"/><polygon points="321.2,197.8 322.0,196.7 323.0,195.2 324.2,193.5 325.4,192.0 326.6,190.7 327.9,189.7 329.4,188.5 330.9,187.6 332.4,186.8 333.8,186.3 335.1,186.1 336.6,186.1 338.0,186.3 339.3,186.7 340.3,187.2 341.1,188.0 342.0,189.2 342.8,190.8 343.5,192.4 344.1,194.0 344.6,195.5 345.0,197.0 345.3,198.4 345.5,199.9 345.5,201.3 345.3,202.8 344.8,204.5 344.2,206.4 343.5,208.1 343.1,209.3 347.6,211.0 348.1,209.9 348.8,208.3 349.7,206.3 350.5,204.1 350.9,201.9 351.0,199.8 350.9,197.7 350.6,195.7 350.1,193.8 349.5,191.9 348.7,190.1 347.7,188.2 346.4,186.3 345.0,184.5 343.2,183.0 341.3,181.9 339.2,181.2 337.0,180.8 334.8,180.8 332.6,181.0 330.4,181.6 328.3,182.6 326.2,183.8 324.3,185.1 322.6,186.6 321.0,188.4 319.7,190.5 318.6,192.5 317.7,194.2 317.1,195.3"/><polygon points="319.4,202.2 320.4,202.7 321.9,203.4 323.6,204.3 325.4,205.2 327.0,206.0 328.5,206.8 330.0,207.7 331.5,208.6 333.2,209.6 334.9,210.5 336.8,211.3 338.8,212.2 340.8,213.0 342.4,213.6 343.6,214.1 345.7,209.1 344.5,208.6 342.8,207.9 340.9,207.1 338.9,206.3 337.2,205.5 335.7,204.8 334.2,204.0 332.6,203.1 331.0,202.2 329.3,201.4 327.5,200.6 325.6,199.8 323.8,199.1 322.3,198.5 321.2,198.1"/><path d="M319.6 191.5Q322.1 199.4 330.3 198.0Q327.8 190.1 319.6 191.5Z"/><polygon points="323.2,238.0 323.9,237.5 325.1,236.8 326.6,236.0 328.1,234.9 329.6,233.6 330.8,232.0 331.7,230.5 332.5,229.0 333.3,227.6 334.3,226.2 335.5,224.6 336.8,222.9 338.2,221.3 339.6,219.9 341.1,218.9 342.7,218.0 344.6,217.3 346.9,216.6 349.4,215.8 352.0,214.9 354.6,213.9 357.3,212.9 360.1,211.8 362.9,210.6 365.5,209.4 368.0,208.1 370.4,206.8 372.8,205.3 375.2,203.5 377.4,201.3 379.1,198.8 380.4,196.1 381.4,193.5 382.1,190.9 382.7,188.4 383.1,185.6 383.2,182.8 383.1,180.3 383.0,178.1 383.0,176.3 383.0,174.8 383.0,173.3 383.0,172.0 383.0,170.9 383.1,170.0 377.8,168.7 377.4,169.4 376.9,170.4 376.2,171.8 375.6,173.4 375.0,175.3 374.6,177.5 374.2,179.8 373.9,182.1 373.5,184.2 373.0,186.1 372.4,188.1 371.6,190.0 370.9,191.8 370.0,193.4 369.2,194.6 368.1,195.8 366.7,197.0 365.0,198.3 363.1,199.6 361.0,200.9 358.8,202.1 356.4,203.3 353.8,204.5 351.2,205.7 348.7,206.9 346.4,207.9 344.0,208.9 341.6,210.0 339.1,211.3 336.7,212.9 334.7,214.9 333.0,217.0 331.6,219.0 330.4,221.0 329.2,222.8 328.2,224.5 327.3,226.2 326.6,227.7 325.9,228.8 325.3,229.7 324.5,230.5 323.4,231.3 322.2,232.1 321.1,232.8 320.3,233.3"/><polygon points="398.1,162.9 397.2,163.5 396.0,164.4 394.5,165.7 392.9,167.2 391.4,169.2 390.3,171.3 389.3,173.6 388.5,175.9 387.7,178.1 387.0,180.2 386.2,182.2 385.3,184.5 384.4,187.0 383.6,189.6 383.1,192.2 382.8,194.7 382.8,197.2 382.9,199.8 383.5,202.4 384.5,205.0 385.9,207.4 387.7,209.4 389.6,211.2 391.7,212.7 394.0,214.1 396.5,215.2 399.1,216.1 401.7,216.8 404.3,217.3 406.8,217.8 409.4,218.2 411.9,218.3 414.2,218.5 416.1,218.6 417.6,218.9 419.1,219.5 420.8,220.6 422.6,221.9 424.2,223.2 425.7,224.2 426.8,225.0 427.7,225.6 428.4,226.1 429.0,226.5 429.5,226.8 430.1,226.4 430.0,225.9 429.8,225.1 429.5,224.2 429.0,223.1 428.2,221.8 427.3,220.3 426.1,218.5 424.6,216.5 422.8,214.5 420.5,212.8 417.9,211.7 415.3,211.0 412.8,210.6 410.6,210.2 408.5,209.7 406.3,209.0 403.9,208.4 401.7,207.7 399.9,207.0 398.4,206.2 397.0,205.3 395.8,204.2 394.8,203.0 394.0,201.9 393.5,200.9 393.3,200.0 393.2,198.7 393.2,197.2 393.3,195.5 393.5,193.7 393.8,191.9 394.3,189.9 394.9,187.7 395.6,185.3 396.2,182.9 396.7,180.4 397.1,178.1 397.4,175.9 397.7,173.9 398.1,172.4 398.5,171.0 399.2,169.5 400.1,168.1 400.9,166.8 401.4,165.8"/><circle cx="337.5" cy="231.9" r="4.6"/><circle cx="345.1" cy="231.6" r="4.8"/><circle cx="352.9" cy="231.1" r="5.3"/><ellipse cx="377.6" cy="214.0" rx="7.7" ry="6.7"/><ellipse cx="391.9" cy="217.3" rx="10.3" ry="9.0" fill-opacity="0.6"/><circle cx="387.6" cy="213.7" r="2.9"/><circle cx="394.0" cy="211.6" r="2.7"/><circle cx="398.3" cy="218.0" r="2.9"/><circle cx="391.9" cy="223.0" r="2.9"/><circle cx="360.7" cy="221.0" r="3.5"/><circle cx="382.6" cy="230.2" r="3.8"/><ellipse cx="413.6" cy="191.8" rx="7.1" ry="5.8" fill-opacity="0.6"/><polygon points="438.3,164.4 438.5,166.3 438.9,169.0 439.4,172.0 439.7,174.9 439.8,177.4 439.8,179.5 439.6,181.7 439.3,184.1 439.0,186.7 438.7,189.6 438.5,193.0 438.4,196.6 438.3,200.2 438.2,203.4 438.1,205.6 444.8,206.2 445.1,204.0 445.5,200.9 446.1,197.3 446.6,193.7 447.0,190.6 447.5,188.0 448.0,185.5 448.5,182.9 448.8,180.1 448.8,177.0 448.3,173.7 447.5,170.4 446.6,167.3 445.7,164.7 445.2,162.9"/><circle cx="470.1" cy="172.5" r="4.5"/><circle cx="489.4" cy="160.3" r="5.1"/><circle cx="513.0" cy="150.0" r="4.6"/><path d="M470.4 186.1Q477.9 193.5 488.0 190.4Q480.4 182.9 470.4 186.1Z"/><path d="M541.6 182.9Q530.7 153.3 499.4 157.9Q514.4 180.8 541.6 182.9Z" fill-opacity="0.8"/><path d="M544.5 197.3Q517.0 172.9 485.1 191.3Q513.2 209.6 544.5 197.3Z" fill-opacity="0.8"/><path d="M547.4 207.3Q522.7 201.8 508.0 222.3Q534.2 231.8 547.4 207.3Z" fill-opacity="0.8"/><path d="M538.8 172.9Q537.2 155.2 519.5 155.7Q524.4 169.6 538.8 172.9Z" fill-opacity="0.8"/><path d="M548.8 211.6Q533.4 217.7 527.3 233.1Q547.0 231.3 548.8 211.6Z" fill-opacity="0.8"/><path d="M540.2 188.7Q521.0 169.1 494.4 175.8Q514.9 190.7 540.2 188.7Z" fill-opacity="0.8"/><path d="M545.2 203.0Q520.2 193.8 497.3 207.3Q522.5 219.4 545.2 203.0Z" fill-opacity="0.8"/><polygon points="532.4,163.2 531.5,165.4 530.2,168.7 528.8,172.7 527.6,177.2 527.2,181.7 527.7,186.1 528.6,190.4 530.1,194.5 532.0,198.5 534.3,202.1 537.1,205.3 540.3,208.1 543.8,210.4 547.4,212.4 551.1,214.1 555.4,215.4 560.0,216.2 564.3,216.8 567.9,217.1 570.3,217.4 571.7,207.2 569.1,206.8 565.6,206.4 561.7,205.7 558.1,204.9 555.1,203.9 552.4,202.6 549.7,201.0 547.2,199.2 545.0,197.3 543.3,195.3 541.7,192.9 540.2,190.1 538.9,187.1 538.0,184.0 537.5,181.3 537.4,178.4 537.9,174.9 538.7,171.3 539.5,167.9 540.1,165.5" fill-opacity="0.75"/><path d="M563.1 162.9Q571.6 156.3 570.0 145.7Q561.5 152.3 563.1 162.9Z"/><path d="M455.7 192.3Q456.5 203.8 467.5 207.6Q466.7 196.0 455.7 192.3Z"/><polygon points="445.2,228.8 447.1,229.8 449.8,231.2 453.0,232.8 456.4,234.3 459.8,235.1 462.9,235.3 465.7,234.9 468.2,234.3 470.5,233.6 472.9,233.0 475.7,232.3 478.7,231.3 481.5,230.5 484.0,229.9 486.2,229.7 488.3,229.9 490.7,230.4 493.2,231.0 495.7,231.8 498.0,232.7 500.2,233.6 502.3,234.7 504.4,236.0 506.3,237.2 507.8,238.5 509.0,239.6 510.0,240.8 511.0,242.2 511.9,243.8 512.9,245.3 513.7,246.8 514.5,248.4 515.2,250.0 515.8,251.4 516.2,252.5 524.7,249.4 524.4,248.4 523.9,246.8 523.3,244.9 522.6,242.8 521.7,240.8 520.9,239.0 520.0,237.1 518.8,234.9 517.2,232.7 515.3,230.5 513.1,228.5 510.7,226.7 508.1,224.9 505.2,223.3 502.3,222.0 499.2,220.9 496.0,220.1 492.6,219.4 489.1,219.1 485.5,219.2 481.8,219.9 478.4,221.0 475.3,222.3 472.6,223.5 470.1,224.5 467.7,225.5 465.5,226.4 463.7,227.2 462.0,227.8 460.3,228.1 457.8,228.1 454.7,227.6 451.3,226.9 448.4,226.3 446.3,225.8"/><path d="M520.2 231.6Q519.1 243.9 529.5 250.5Q530.6 238.2 520.2 231.6Z"/><polygon points="467.3,237.6 468.8,236.6 470.8,235.3 473.0,233.8 475.4,232.6 477.7,231.8 480.4,231.3 483.5,230.8 486.7,230.6 489.8,230.6 492.5,230.8 494.8,231.2 497.0,231.9 499.1,232.8 501.0,233.9 502.8,235.2 504.4,236.8 506.0,238.8 507.4,241.1 508.8,243.6 510.0,246.1 510.8,248.5 511.5,251.3 512.1,254.6 513.0,258.0 514.5,261.4 516.6,264.3 518.9,266.9 521.4,269.2 523.9,271.3 526.5,273.3 529.4,275.2 532.5,277.0 535.5,278.6 538.3,280.1 540.6,281.4 542.5,282.6 544.3,283.8 545.9,284.9 547.2,285.8 548.2,286.5 551.3,282.6 550.4,281.8 549.3,280.7 547.8,279.3 546.0,277.8 543.9,276.2 541.4,274.6 538.6,273.0 535.8,271.4 533.0,269.7 530.6,267.9 528.2,266.0 525.9,264.1 523.8,262.1 522.1,260.0 520.7,258.0 519.8,255.7 519.3,253.1 518.8,249.9 518.1,246.5 517.1,243.2 515.6,240.1 514.0,237.2 512.2,234.4 510.1,231.8 507.8,229.4 505.3,227.5 502.7,225.8 499.8,224.5 496.8,223.5 493.5,222.9 490.0,222.7 486.2,222.9 482.4,223.4 478.8,224.1 475.5,225.1 472.3,226.6 469.5,228.5 467.2,230.4 465.3,232.0 464.0,233.1"/><circle cx="473.2" cy="243.5" r="2.8"/><circle cx="477.3" cy="246.0" r="2.8"/><circle cx="481.4" cy="248.3" r="2.8"/><circle cx="485.1" cy="250.4" r="2.8"/><path d="M527.2 285.6Q530.8 297.2 542.9 297.3Q537.0 288.8 527.2 285.6Z"/></g><g filter="url(#fm)"><path d="M374.0 146.4Q379.4 153.8 388.3 156.0Q384.8 145.8 374.0 146.4Z"/><path d="M396.2 145.7Q398.0 153.1 405.5 154.3Q403.7 147.0 396.2 145.7Z"/><path d="M409.8 146.0Q407.2 151.7 411.6 156.0Q414.2 150.4 409.8 146.0Z"/><path d="M372.5 159.3Q380.4 167.6 391.2 164.1Q382.4 159.5 372.5 159.3Z"/><path d="M358.9 161.5Q367.4 160.3 372.5 153.6Q364.1 154.8 358.9 161.5Z"/><path d="M424.8 147.9Q429.9 155.6 439.1 156.0Q434.0 148.3 424.8 147.9Z"/><path d="M439.1 146.4Q440.1 152.2 446.0 152.9Q445.0 147.1 439.1 146.4Z"/><path d="M429.1 176.5Q438.4 178.9 445.6 172.6Q436.3 170.2 429.1 176.5Z"/><path d="M424.8 164.3Q428.6 170.9 436.3 170.8Q432.4 164.2 424.8 164.3Z"/><path d="M320.0 156.9Q320.2 163.6 326.3 166.5Q326.1 159.8 320.0 156.9Z"/><path d="M319.1 170.4Q323.3 175.2 329.6 174.6Q325.5 169.8 319.1 170.4Z"/><path d="M358.9 173.6Q356.6 182.9 365.4 186.5Q365.2 178.6 358.9 173.6Z"/><path d="M365.4 165.8Q368.2 170.8 374.0 170.8Q371.1 165.8 365.4 165.8Z"/><path d="M318.9 203.0Q325.5 203.6 327.5 197.3Q320.8 196.7 318.9 203.0Z"/><path d="M343.9 187.2Q342.2 195.3 348.9 200.1Q350.6 192.1 343.9 187.2Z"/><path d="M341.8 181.5Q335.9 182.0 333.2 187.2Q339.1 186.8 341.8 181.5Z"/><circle cx="386.2" cy="220.2" r="2.6"/><circle cx="392.6" cy="217.3" r="2.2"/><path d="M370.4 222.3Q367.5 230.4 371.5 238.1Q374.5 229.9 370.4 222.3Z"/><path d="M396.2 225.2Q395.1 234.0 400.8 240.9Q401.8 232.1 396.2 225.2Z"/><path d="M404.8 220.2Q404.0 227.6 409.8 232.3Q410.5 224.9 404.8 220.2Z"/><path d="M407.6 187.2Q411.5 178.3 407.6 169.3Q403.8 178.3 407.6 187.2Z"/><path d="M407.6 197.3Q403.5 204.1 407.6 210.9Q411.8 204.1 407.6 197.3Z"/><path d="M414.8 186.5Q423.1 182.8 425.5 174.1Q417.2 177.8 414.8 186.5Z"/><circle cx="410.5" cy="190.1" r="2.4"/><circle cx="416.5" cy="190.8" r="2.4"/><circle cx="413.4" cy="195.4" r="2.2"/><path d="M459.3 149.3Q458.7 157.3 466.5 159.3Q467.1 151.3 459.3 149.3Z"/><path d="M466.5 145.7Q460.6 148.6 461.5 155.0Q467.4 152.2 466.5 145.7Z"/><path d="M488.0 158.6Q486.9 149.7 478.4 146.9Q479.4 155.8 488.0 158.6Z"/><path d="M490.8 157.5Q496.1 153.0 495.5 146.0Q490.2 150.5 490.8 157.5Z"/><path d="M490.1 162.9Q489.0 166.8 493.0 167.9Q494.0 164.0 490.1 162.9Z"/><path d="M472.6 178.4Q487.2 182.1 501.6 177.5Q487.0 173.8 472.6 178.4Z"/><path d="M540.7 184.5Q523.7 171.0 503.9 161.9Q520.3 176.4 540.7 184.5Z" fill-opacity="1"/><path d="M541.3 183.5Q524.0 166.6 500.9 159.2Q520.7 172.1 541.3 183.5Z" fill-opacity="1"/><path d="M541.9 182.4Q525.9 163.2 501.3 158.6Q522.7 168.7 541.9 182.4Z" fill-opacity="1"/><path d="M542.6 181.4Q529.2 161.4 505.1 159.9Q526.0 166.9 542.6 181.4Z" fill-opacity="1"/><path d="M544.3 199.4Q519.4 196.1 494.5 193.7Q518.7 202.0 544.3 199.4Z" fill-opacity="1"/><path d="M544.4 198.3Q517.4 192.5 489.8 192.5Q516.8 198.3 544.4 198.3Z" fill-opacity="1"/><path d="M544.5 197.3Q515.4 188.4 485.1 191.3Q514.8 194.2 544.5 197.3Z" fill-opacity="1"/><path d="M544.6 196.2Q518.1 185.2 489.9 191.0Q517.5 191.1 544.6 196.2Z" fill-opacity="1"/><path d="M544.7 195.1Q520.6 182.5 494.7 190.8Q520.1 188.4 544.7 195.1Z" fill-opacity="1"/><path d="M548.0 208.9Q531.3 217.3 513.1 221.6Q533.5 223.3 548.0 208.9Z" fill-opacity="1"/><path d="M547.6 207.8Q528.7 215.0 509.7 222.1Q530.9 221.0 547.6 207.8Z" fill-opacity="1"/><path d="M547.2 206.7Q527.4 211.8 509.4 221.4Q529.7 217.7 547.2 206.7Z" fill-opacity="1"/><path d="M546.7 205.6Q527.7 208.0 512.3 219.4Q530.1 214.0 546.7 205.6Z" fill-opacity="1"/><path d="M539.9 189.7Q519.3 182.2 497.9 177.5Q517.7 187.9 539.9 189.7Z" fill-opacity="1"/><path d="M540.2 188.7Q518.8 177.1 494.4 175.8Q517.1 182.8 540.2 188.7Z" fill-opacity="1"/><path d="M540.5 187.6Q521.7 173.3 498.3 176.1Q520.1 179.1 540.5 187.6Z" fill-opacity="1"/><path d="M545.3 204.2Q523.4 207.6 501.2 207.8Q523.9 214.4 545.3 204.2Z" fill-opacity="1"/><path d="M545.2 203.0Q521.1 203.2 497.3 207.3Q521.7 210.0 545.2 203.0Z" fill-opacity="1"/><path d="M545.1 201.7Q522.5 198.2 501.0 206.1Q523.2 205.0 545.1 201.7Z" fill-opacity="1"/><path d="M514.4 220.2Q507.1 219.9 503.0 225.9Q510.3 226.2 514.4 220.2Z"/><path d="M525.9 225.9Q516.9 225.7 511.6 233.1Q520.6 233.2 525.9 225.9Z"/><path d="M507.3 161.5Q505.5 156.4 500.1 155.7Q501.9 160.9 507.3 161.5Z"/><path d="M520.2 157.2Q520.6 151.6 515.9 148.6Q515.4 154.2 520.2 157.2Z"/><polygon points="532.7,146.7 532.7,147.8 532.8,149.3 533.0,151.1 533.2,153.1 533.5,155.0 534.0,156.8 534.6,158.7 535.2,160.6 535.8,162.2 536.3,163.7 536.8,165.0 537.2,166.3 537.5,167.4 537.8,168.4 538.0,169.1 542.4,168.1 542.3,167.4 542.2,166.4 541.9,165.1 541.6,163.7 541.2,162.1 540.6,160.5 539.9,158.7 539.2,157.0 538.4,155.2 537.8,153.7 537.1,152.1 536.5,150.3 535.8,148.7 535.3,147.2 534.9,146.2"/><path d="M556.7 167.2Q563.8 159.1 561.7 148.6Q554.5 156.6 556.7 167.2Z"/><path d="M554.5 211.6Q553.4 220.8 560.5 226.6Q561.7 217.4 554.5 211.6Z"/><path d="M566.0 210.2Q563.9 216.6 569.1 220.9Q571.3 214.4 566.0 210.2Z"/><path d="M543.1 217.3Q541.1 225.4 546.7 231.6Q548.6 223.5 543.1 217.3Z"/><path d="M448.6 218.0Q458.5 218.1 466.1 211.6Q456.1 211.5 448.6 218.0Z"/><path d="M475.8 218.0Q480.2 224.5 488.0 224.8Q483.6 218.3 475.8 218.0Z"/><path d="M472.9 240.2Q478.3 248.4 488.0 250.2Q482.6 242.0 472.9 240.2Z"/><path d="M490.1 245.9Q494.5 251.4 501.6 251.0Q497.1 245.5 490.1 245.9Z"/><path d="M533.1 228.8Q531.1 241.0 539.1 250.5Q541.0 238.3 533.1 228.8Z"/><path d="M540.2 220.2Q538.8 228.8 546.2 233.3Q547.6 224.8 540.2 220.2Z"/><path d="M559.1 220.2Q553.2 224.6 554.5 231.9Q560.4 227.4 559.1 220.2Z"/><path d="M445.1 226.2Q447.5 231.7 453.3 233.0Q451.0 227.5 445.1 226.2Z"/><path d="M487.5 246.0Q495.3 247.8 501.2 242.6Q493.5 240.7 487.5 246.0Z"/><path d="M495.7 249.4Q490.0 250.3 487.5 255.6Q493.3 254.7 495.7 249.4Z"/><path d="M519.7 237.8Q527.9 236.7 532.0 229.6Q523.8 230.6 519.7 237.8Z"/><path d="M521.7 246.0Q531.0 245.9 537.4 239.1Q528.1 239.2 521.7 246.0Z"/><path d="M523.1 254.2Q530.7 255.0 536.1 249.4Q528.4 248.6 523.1 254.2Z"/><path d="M525.1 262.4Q531.7 264.3 536.8 259.7Q530.2 257.7 525.1 262.4Z"/><path d="M527.9 269.2Q533.2 271.6 538.1 268.6Q532.8 266.1 527.9 269.2Z"/><path d="M531.3 230.9Q537.1 229.9 538.1 224.1Q532.3 225.1 531.3 230.9Z"/><path d="M536.8 236.4Q545.2 236.3 550.4 229.6Q542.0 229.7 536.8 236.4Z"/><path d="M534.7 246.0Q541.6 244.0 545.0 237.8Q538.1 239.7 534.7 246.0Z"/><path d="M516.2 235.0Q522.3 234.1 523.8 228.2Q517.7 229.1 516.2 235.0Z"/><path d="M553.2 224.1Q554.7 230.8 561.4 232.3Q559.9 225.6 553.2 224.1Z"/><path d="M554.5 229.6Q560.9 228.4 564.1 222.7Q557.7 223.9 554.5 229.6Z"/><path d="M523.8 278.1Q515.2 268.2 502.3 270.3Q512.7 275.1 523.8 278.1Z"/><polygon points="516.9,276.1 516.0,276.5 514.6,277.0 512.9,277.8 511.1,278.9 509.7,280.4 508.7,282.1 508.1,284.1 507.8,286.1 507.7,288.2 508.0,290.3 508.9,292.3 510.3,294.0 511.7,295.5 513.0,296.7 513.8,297.5 515.9,295.7 515.3,294.7 514.3,293.3 513.3,291.8 512.5,290.4 512.2,289.2 512.1,288.0 512.2,286.6 512.4,285.1 512.8,283.7 513.2,282.7 513.8,281.9 514.9,281.0 516.2,280.2 517.4,279.4 518.3,278.8"/><path d="M529.2 294.5Q535.6 301.7 545.2 302.3Q538.9 295.1 529.2 294.5Z"/><path d="M542.2 284.3Q537.3 280.5 531.3 282.2Q536.3 286.0 542.2 284.3Z"/></g><g filter="url(#ft)"><polyline points="329.6,145.7 329.9,146.7 330.2,148.1 330.7,149.7 331.2,151.4 331.7,152.9 332.4,154.3 333.2,155.8 334.1,157.2 334.8,158.5 335.3,159.3" fill="none" stroke="#000" stroke-width="1.6" stroke-linecap="round" stroke-linejoin="round"/><polyline points="350.4,146.4 350.2,148.0 350.1,149.6 349.9,151.2 349.8,152.7 349.6,154.3" fill="none" stroke="#000" stroke-width="1.6" stroke-linecap="round" stroke-linejoin="round"/><polyline points="326.7,168.6 327.1,167.8 327.5,166.5 328.1,165.2 328.8,163.9 329.6,162.9 330.8,162.3 332.2,162.0 333.8,161.7 335.1,161.6 336.0,161.5" fill="none" stroke="#000" stroke-width="0.8" stroke-linecap="round" stroke-linejoin="round" stroke-opacity="0.5"/><polyline points="331.7,175.8 333.1,175.6 335.0,175.2 337.3,174.8 339.6,174.5 341.8,174.4 343.8,174.5 345.8,175.0 347.8,175.4 349.8,175.8 351.8,175.8 353.9,175.5 356.2,174.9 358.4,174.1 360.3,173.2 361.8,172.2 362.8,170.9 363.3,169.3 363.6,167.6 363.8,166.1 364.0,165.1" fill="none" stroke="#000" stroke-width="0.8" stroke-linecap="round" stroke-linejoin="round" stroke-opacity="0.4"/><polyline points="337.5,176.5 337.1,177.2 336.6,178.3 336.0,179.4 335.4,180.6 334.6,181.5 333.7,182.3 332.5,183.0 331.3,183.5 330.3,184.0 329.6,184.4" fill="none" stroke="#000" stroke-width="1.6" stroke-linecap="round" stroke-linejoin="round"/><polyline points="346.8,175.8 346.3,176.4 345.6,177.3 344.9,178.3 344.0,179.2 343.2,180.1 342.3,180.8 341.3,181.5 340.3,182.1 339.5,182.6 338.9,182.9" fill="none" stroke="#000" stroke-width="1.4" stroke-linecap="round" stroke-linejoin="round"/><path d="M416.2 212.3Q420.8 211.6 422.7 207.3Q418.1 208.0 416.2 212.3Z"/><path d="M422.7 218.0Q426.8 219.6 430.5 217.3Q426.4 215.8 422.7 218.0Z"/><path d="M334.6 220.2Q333.8 215.8 329.6 214.4Q330.4 218.8 334.6 220.2Z"/><path d="M353.2 208.0Q353.3 203.9 349.6 202.3Q349.5 206.3 353.2 208.0Z"/><path d="M388.3 231.6Q382.2 234.8 379.0 240.9Q385.1 237.8 388.3 231.6Z"/><path d="M350.4 220.2Q347.6 228.7 349.6 237.4Q352.4 228.9 350.4 220.2Z"/><polyline points="394.0,185.8 394.9,186.4 396.1,187.3 397.5,188.3 399.0,189.3 400.5,190.1 402.0,190.8 403.6,191.4 405.2,191.9 406.6,192.4 407.6,192.7" fill="none" stroke="#000" stroke-width="2" stroke-linecap="round" stroke-linejoin="round"/><polyline points="419.1,193.3 420.7,193.7 422.2,194.1 423.8,194.5 425.4,194.9 427.0,195.3" fill="none" stroke="#000" stroke-width="1.6" stroke-linecap="round" stroke-linejoin="round"/><polyline points="427.0,188.0 427.7,188.6 428.9,189.5 430.2,190.6 431.5,191.8 432.7,193.0 433.8,194.3 434.9,195.8 435.9,197.3 436.9,198.8 437.7,200.1 438.4,201.3 439.0,202.5 439.5,203.6 440.0,204.5 440.3,205.1" fill="none" stroke="#000" stroke-width="0.8" stroke-linecap="round" stroke-linejoin="round" stroke-opacity="0.5"/><polyline points="426.2,197.3 426.0,198.3 425.6,199.7 425.2,201.3 424.9,203.0 424.8,204.4 425.0,205.8 425.5,207.1 426.1,208.3 426.6,209.4 427.0,210.2" fill="none" stroke="#000" stroke-width="0.7" stroke-linecap="round" stroke-linejoin="round" stroke-opacity="0.4"/><polyline points="450.0,188.0 450.6,188.1 451.4,188.3 452.3,188.6 453.1,188.9 453.6,189.4 453.9,190.0 454.0,190.8 454.0,191.7 453.9,192.4 453.6,193.0 453.1,193.2 452.4,193.3 451.5,193.3 450.8,193.3 450.3,193.3" fill="none" stroke="#000" stroke-width="1.2" stroke-linecap="round" stroke-linejoin="round"/><path d="M442.9 148.6Q446.9 149.5 448.6 145.7Q444.6 144.9 442.9 148.6Z"/><polyline points="511.6,151.7 509.6,152.7 506.9,154.0 503.7,155.6 500.4,157.3 497.3,158.9 494.3,160.5 491.3,162.2 488.3,164.0 485.5,165.8 482.9,167.5 480.6,169.3 478.3,171.2 476.2,173.1 474.5,174.7 473.2,175.8" fill="none" stroke="#000" stroke-width="2.2" stroke-linecap="round" stroke-linejoin="round"/><path d="M538.2 173.6Q531.4 163.4 520.6 157.6Q527.9 167.2 538.2 173.6Z" fill-opacity="1"/><path d="M538.8 172.9Q532.5 160.5 519.5 155.7Q529.1 164.3 538.8 172.9Z" fill-opacity="1"/><path d="M539.4 172.2Q534.9 159.2 521.4 156.7Q531.6 163.1 539.4 172.2Z" fill-opacity="1"/><path d="M549.5 212.3Q541.3 223.8 529.5 231.8Q544.9 227.5 549.5 212.3Z" fill-opacity="1"/><path d="M548.8 211.6Q538.4 222.7 527.3 233.1Q542.0 226.3 548.8 211.6Z" fill-opacity="1"/><path d="M548.1 210.9Q536.9 219.4 528.6 230.9Q540.5 223.0 548.1 210.9Z" fill-opacity="1"/><path d="M532.3 174.4Q536.6 177.5 541.9 176.9Q537.6 173.8 532.3 174.4Z" fill-opacity="0.9"/><path d="M530.9 185.1Q535.8 187.9 541.4 187.0Q536.5 184.1 530.9 185.1Z" fill-opacity="0.9"/><path d="M533.8 196.5Q539.4 196.7 543.8 193.3Q538.2 193.1 533.8 196.5Z" fill-opacity="0.9"/><path d="M540.9 205.9Q546.1 204.1 548.8 199.4Q543.6 201.1 540.9 205.9Z" fill-opacity="0.9"/><path d="M550.2 212.3Q554.2 209.3 554.8 204.4Q550.9 207.4 550.2 212.3Z" fill-opacity="0.9"/><path d="M559.5 215.2Q562.7 211.7 562.1 207.0Q559.0 210.5 559.5 215.2Z" fill-opacity="0.9"/><path d="M568.1 216.6Q570.4 212.7 568.8 208.4Q566.6 212.3 568.1 216.6Z" fill-opacity="0.9"/><path d="M531.6 155.7Q531.8 152.5 528.8 151.5Q528.6 154.7 531.6 155.7Z"/><path d="M540.2 153.6Q543.6 153.3 544.5 150.0Q541.1 150.3 540.2 153.6Z"/><path d="M551.7 167.2Q555.1 165.3 554.5 161.5Q551.1 163.3 551.7 167.2Z"/><polyline points="475.8,193.0 477.0,194.5 478.6,196.8 480.5,199.4 482.5,202.0 484.4,204.4 486.3,206.7 488.3,209.1 490.3,211.4 492.0,213.3 493.3,214.7" fill="none" stroke="#000" stroke-width="2" stroke-linecap="round" stroke-linejoin="round"/><polyline points="470.4,200.1 471.5,201.1 473.0,202.6 474.9,204.3 476.8,205.9 478.7,207.3 480.5,208.4 482.6,209.5 484.6,210.5 486.3,211.3 487.5,211.9" fill="none" stroke="#000" stroke-width="1.8" stroke-linecap="round" stroke-linejoin="round"/><path d="M500.4 200.1Q494.8 205.7 492.7 213.3Q498.3 207.8 500.4 200.1Z"/><path d="M476.5 193.7Q481.5 202.8 490.1 208.7Q485.1 199.6 476.5 193.7Z"/><polyline points="493.3,214.7 494.2,215.2 495.5,215.8 497.0,216.5 498.6,217.3 500.1,218.0 501.7,218.8 503.3,219.6 504.9,220.4 506.3,221.1 507.3,221.6" fill="none" stroke="#000" stroke-width="1.5" stroke-linecap="round" stroke-linejoin="round"/><path d="M446.4 225.9Q448.4 230.8 453.6 231.6Q451.6 226.8 446.4 225.9Z"/><path d="M461.5 234.5Q457.8 236.2 457.2 240.2Q460.9 238.5 461.5 234.5Z"/><path d="M507.3 224.5Q512.0 224.2 514.4 220.2Q509.7 220.4 507.3 224.5Z"/><path d="M465.8 238.8Q467.6 244.1 472.9 245.9Q471.0 240.7 465.8 238.8Z"/><path d="M525.9 225.9Q524.6 221.4 520.2 220.2Q521.4 224.6 525.9 225.9Z"/><path d="M460.2 233.0Q460.2 237.4 464.3 239.1Q464.3 234.7 460.2 233.0Z"/><path d="M523.1 274.7Q518.6 264.5 508.0 261.0Q515.3 268.2 523.1 274.7Z"/><path d="M536.8 302.1Q542.1 301.2 545.0 296.6Q539.6 297.4 536.8 302.1Z"/><polyline points="495.7,261.0 496.8,261.2 498.4,261.4 500.3,261.7 502.2,262.0 503.9,262.4 505.7,262.9 507.6,263.5 509.5,264.2 511.0,264.7 512.1,265.1" fill="none" stroke="#000" stroke-width="1.5" stroke-linecap="round" stroke-linejoin="round"/></g></g><use href="#lh" transform="translate(1133 0) scale(-1 1)"/><g filter="url(#fb)"><polygon points="709.1,262.6 710.4,263.8 711.6,265.1 712.0,266.0 711.2,266.1 709.2,264.6 707.7,262.9 707.1,262.7 706.9,263.7 706.9,265.6 706.9,267.7 707.0,269.3 706.9,270.4 706.9,271.3 706.9,272.2 706.9,273.0 706.9,273.8 706.9,274.5 707.0,275.3 707.0,276.1 707.1,277.0 707.2,278.0 707.2,279.0 707.2,280.2 707.2,281.6 707.2,283.0 707.3,284.6 707.3,286.4 707.3,288.3 707.4,289.8 708.0,290.5 709.4,290.2 711.2,289.9 712.4,290.2 712.4,291.1 711.8,292.1 720.9,307.6 721.3,307.7 722.1,307.6 723.7,307.1 725.7,306.0 727.6,304.5 729.1,302.7 730.6,300.9 732.1,298.9 733.6,296.8 734.8,294.8 735.9,292.8 736.9,290.7 737.8,288.6 738.6,286.4 739.3,284.2 739.9,282.0 740.3,279.8 740.6,277.6 740.8,275.3 740.9,273.0 740.8,270.7 740.6,268.4 740.3,266.1 739.9,263.8 739.4,261.7 738.8,259.6 738.2,257.1 737.3,254.2 736.0,251.0 733.9,247.5 730.9,244.6 727.9,242.7 725.4,241.4 723.6,240.7 722.5,240.3"/><polygon points="700.7,315.2 699.6,316.5 698.1,318.1 696.4,319.8 694.8,321.2 693.8,321.8 693.3,321.7 692.6,322.1 691.3,323.6 689.4,326.2 687.5,329.4 686.0,332.3 684.9,335.2 683.8,338.2 682.8,341.3 681.9,344.7 681.1,348.1 680.5,351.5 680.0,354.7 679.7,357.6 679.3,360.4 679.1,363.2 678.9,366.0 678.9,368.5 678.8,370.8 678.8,373.0 678.8,375.3 678.8,377.6 678.9,380.2 679.1,382.9 679.4,385.6 679.8,388.4 680.3,391.1 680.9,393.6 681.6,396.1 682.2,398.6 683.0,401.1 683.7,403.5 684.5,405.8 685.3,408.0 686.1,410.3 687.0,412.7 687.9,414.9 688.6,416.7 689.3,418.2 689.8,419.7 690.5,421.5 691.2,424.2 692.1,427.5 693.1,431.2 694.3,434.9 695.7,438.4 697.1,441.4 698.5,443.9 699.7,446.0 701.2,448.3 702.9,451.0 704.6,453.3 706.0,455.1 707.3,456.7 708.5,458.5 709.9,461.0 711.3,464.2 712.9,468.0 714.5,472.1 716.2,476.2 717.9,480.4 719.6,484.6 721.4,489.1 723.3,493.5 725.2,497.9 727.2,502.2 729.3,506.3 731.4,510.4 733.5,514.4 735.7,518.5 738.1,523.0 740.9,527.9 743.5,532.7 745.8,536.7 747.4,539.6 753.0,537.3 751.9,534.2 750.3,529.8 748.4,524.8 746.6,519.6 745.0,514.8 743.6,510.5 742.2,506.3 740.9,502.1 739.7,497.9 738.6,493.6 737.5,489.3 736.4,484.8 735.4,480.3 734.5,475.8 733.6,471.5 732.7,467.3 731.9,463.1 731.1,458.9 730.2,454.9 729.2,451.0 728.0,447.5 726.8,444.4 725.6,441.8 724.6,439.6 723.7,437.5 722.9,435.4 722.1,433.3 721.4,431.5 720.8,429.6 720.3,427.7 719.9,425.3 719.5,422.5 719.1,419.3 718.6,416.0 718.0,412.8 717.3,409.9 716.6,407.4 715.9,405.3 715.3,403.4 714.8,401.5 714.3,399.5 713.7,397.5 713.3,395.6 712.9,393.7 712.5,391.8 712.1,389.9 711.8,388.0 711.6,386.0 711.4,384.2 711.2,382.3 711.1,380.6 711.0,378.8 710.9,376.9 710.9,375.0 710.8,373.0 710.8,371.0 710.9,369.2 710.9,367.4 711.0,365.6 711.2,363.6 711.4,361.4 711.7,359.0 712.1,356.7 712.5,354.5 712.9,352.5 713.5,350.6 714.1,348.7 714.8,346.8 715.5,345.0 716.2,343.5 716.7,342.4 717.3,341.4 718.2,339.9 719.4,337.8 720.6,335.3 721.4,332.6 722.1,329.9 722.6,327.3 722.9,325.2 723.2,323.7"/></g><g filter="url(#fw)"><path d="M548.6 282C552 296 558 300 566.5 300C575 300 581 296 584.4 282C578 287.5 555 287.5 548.6 282Z" fill-opacity=".8"/><ellipse cx="708.0" cy="307.5" rx="9.5" ry="11.8" fill-opacity="0.5"/><ellipse cx="708.5" cy="308.0" rx="6.7" ry="9.0" fill-opacity="0.35"/><ellipse cx="722.0" cy="311.0" rx="10.1" ry="10.1" fill-opacity="0.45"/><path d="M768.1 266.2Q757.2 257.4 743.4 259.7Q754.3 268.6 768.1 266.2Z" fill-opacity="0.72"/><path d="M769.4 267.6Q759.6 266.0 753.8 274.1Q763.6 275.7 769.4 267.6Z" fill-opacity="0.72"/><polygon points="741.1,318.6 742.8,318.2 745.1,317.7 747.9,317.0 750.9,316.1 753.7,315.1 756.3,313.9 758.9,312.4 761.2,311.1 763.3,310.1 765.0,309.5 766.6,309.2 768.3,309.0 769.9,309.0 771.7,309.0 773.4,309.1 775.2,309.1 777.0,309.2 778.7,309.4 780.3,309.6 781.6,309.9 782.8,310.3 784.4,311.1 786.0,312.1 787.6,313.1 788.8,313.9 794.4,307.2 793.5,306.2 792.2,304.8 790.5,303.0 788.4,301.2 785.9,299.7 783.3,298.7 780.8,298.0 778.2,297.6 775.7,297.4 773.2,297.4 770.8,297.6 768.4,298.0 765.9,298.7 763.4,299.7 760.8,301.1 758.4,303.1 756.4,305.3 754.7,307.5 753.0,309.5 751.3,311.1 749.2,312.5 746.8,313.9 744.2,315.2 742.0,316.2 740.5,317.0" fill-opacity="0.72"/><ellipse cx="768.1" cy="303.2" rx="4.7" ry="3.5" fill-opacity="0.72"/><polygon points="790.7,314.7 792.3,313.0 794.6,310.7 797.3,307.9 799.9,304.9 802.2,301.7 803.8,298.4 805.2,295.1 806.3,291.8 807.2,288.5 808.0,285.3 808.7,282.1 809.2,278.7 809.7,275.4 809.9,272.1 809.8,268.8 809.3,265.6 808.5,262.4 807.5,259.5 806.6,257.1 806.0,255.5 803.2,256.2 803.5,258.0 803.9,260.4 804.3,263.3 804.6,266.2 804.6,268.9 804.2,271.6 803.6,274.4 802.9,277.5 802.0,280.5 801.2,283.6 800.4,286.8 799.6,289.9 798.7,292.9 797.7,295.8 796.6,298.5 795.0,301.3 792.9,304.3 790.6,307.2 788.6,309.8 787.2,311.6" fill-opacity="0.72"/><polygon points="787.9,300.9 788.9,299.2 790.3,296.8 792.0,293.9 793.7,291.0 795.2,288.2 796.6,285.5 797.8,282.7 799.0,280.1 800.2,277.7 801.5,275.7 802.9,273.8 804.7,272.0 806.6,270.2 808.3,268.7 809.6,267.6 807.4,264.9 806.1,265.7 804.1,266.9 801.8,268.4 799.4,270.3 797.3,272.5 795.6,275.0 794.1,277.7 792.9,280.5 791.7,283.3 790.5,285.9 789.2,288.8 787.9,291.9 786.6,294.9 785.6,297.5 784.8,299.3" fill-opacity="0.72"/><polygon points="782.8,320.5 784.5,321.4 787.0,322.8 790.0,324.4 793.2,325.9 796.3,326.7 799.2,326.8 801.9,326.5 804.4,325.7 806.6,324.7 808.8,323.4 810.8,321.6 812.6,319.5 814.1,317.4 815.2,315.6 816.1,314.4 812.9,311.8 811.8,312.9 810.4,314.5 808.8,316.1 807.1,317.5 805.6,318.5 804.1,319.2 802.4,319.8 800.6,320.2 798.9,320.4 797.2,320.4 795.1,320.0 792.2,319.1 789.3,318.0 786.6,316.9 784.7,316.2" fill-opacity="0.72"/><polygon points="777.0,322.3 778.3,323.9 780.1,326.3 782.2,329.0 784.7,331.7 787.5,333.9 790.4,335.3 793.4,336.2 796.4,336.8 799.4,337.0 802.2,336.9 805.1,336.2 807.8,335.0 810.0,333.6 811.9,332.4 813.1,331.6 811.7,328.5 810.2,329.0 808.2,329.7 805.9,330.4 803.7,330.9 801.7,331.1 799.6,331.0 797.2,330.7 794.8,330.3 792.5,329.7 790.4,328.8 788.3,327.5 786.0,325.5 783.6,323.2 781.6,321.1 780.1,319.6" fill-opacity="0.72"/><path d="M796.8 292.3Q806.0 296.9 814.5 291.0Q805.2 286.4 796.8 292.3Z" fill-opacity="0.72"/><circle cx="745.5" cy="328.2" r="3.2" fill-opacity="0.72"/><path d="M742.1 344.4Q731.5 336.6 718.6 339.2Q729.2 346.9 742.1 344.4Z" fill-opacity="0.72"/><path d="M743.4 345.7Q730.4 344.1 721.2 353.5Q734.3 355.1 743.4 345.7Z" fill-opacity="0.72"/><path d="M746.0 345.7Q754.0 352.1 762.9 347.0Q754.9 340.5 746.0 345.7Z" fill-opacity="0.72"/><ellipse cx="743.4" cy="346.5" rx="5.3" ry="4.7" fill-opacity="0.6"/><polygon points="735.4,383.5 737.1,383.1 739.5,382.4 742.1,381.7 744.5,381.3 746.1,381.3 747.6,381.6 749.3,382.0 750.8,382.7 752.2,383.4 753.1,384.1 753.8,385.0 754.6,386.3 755.3,388.0 755.9,389.8 756.2,391.4 756.3,392.9 756.1,395.0 755.7,397.2 755.2,399.3 754.9,400.8 760.5,402.6 761.1,401.2 762.0,399.3 763.1,396.9 764.0,394.1 764.4,391.1 764.2,388.3 763.8,385.6 762.9,382.8 761.6,380.0 759.7,377.6 757.3,375.6 754.7,374.2 751.9,373.2 748.9,372.6 745.8,372.6 742.6,373.2 739.6,374.5 736.8,376.0 734.7,377.3 733.2,378.1" fill-opacity="0.72"/><polygon points="777.8,382.2 778.8,381.1 780.2,379.6 781.7,377.9 783.2,376.7 784.3,376.0 785.4,375.7 786.7,375.4 788.1,375.3 789.5,375.3 790.6,375.4 791.7,375.7 793.2,376.3 795.0,377.3 796.6,378.3 797.8,379.0 801.0,374.9 800.1,373.9 798.8,372.5 797.1,370.8 795.0,369.2 792.6,368.1 790.1,367.6 787.6,367.6 785.2,368.0 782.9,368.8 780.6,370.1 778.6,371.9 777.0,374.2 775.7,376.4 774.7,378.2 774.0,379.5" fill-opacity="0.72"/><polygon points="773.4,380.2 772.8,381.9 771.9,384.5 771.0,387.5 770.2,390.8 769.8,394.0 770.1,396.9 770.7,399.7 771.6,402.3 772.8,404.6 774.4,406.8 776.6,408.6 779.0,409.7 781.2,410.3 782.9,410.6 784.0,410.9 786.1,405.5 784.9,404.9 783.4,404.1 781.9,403.3 780.8,402.5 780.1,401.7 779.4,400.7 778.5,399.1 777.8,397.4 777.2,395.5 776.8,393.7 776.8,391.6 777.1,388.9 777.6,386.0 778.1,383.4 778.5,381.5" fill-opacity="0.72"/><ellipse cx="768.1" cy="400.4" rx="7.6" ry="7.6" fill-opacity="0.6"/><circle cx="768.1" cy="399.6" r="3.5" fill-opacity="0.72"/><polygon points="722.3,406.0 723.8,405.4 726.0,404.5 728.3,403.5 730.6,402.8 732.4,402.5 734.0,402.5 735.8,402.6 737.5,403.0 739.0,403.4 740.1,404.0 741.3,404.7 742.6,405.7 743.7,406.9 744.7,408.1 745.2,408.8 745.4,409.6 745.2,411.2 744.7,413.2 744.2,415.1 743.8,416.4 748.2,418.2 748.8,417.0 749.8,415.3 751.0,413.1 751.9,410.5 752.0,407.5 751.2,404.8 749.9,402.4 748.3,400.2 746.3,398.3 744.0,396.8 741.5,395.7 738.9,395.2 736.2,395.0 733.6,395.1 730.9,395.6 728.2,396.8 725.7,398.3 723.4,400.0 721.5,401.5 720.2,402.5" fill-opacity="0.72"/><polygon points="722.7,419.0 723.6,419.8 724.8,421.1 726.4,422.5 728.2,424.0 730.2,425.3 732.1,426.5 734.2,427.6 736.6,428.6 739.1,429.5 741.8,429.9 744.6,429.7 747.3,429.0 749.8,428.2 751.7,427.4 753.0,426.9 752.0,422.3 750.5,422.5 748.4,422.8 746.2,423.0 744.0,423.1 742.4,422.9 740.8,422.6 739.0,422.0 737.0,421.3 735.0,420.4 733.2,419.7 731.4,418.9 729.5,418.0 727.7,417.1 726.2,416.2 725.0,415.6" fill-opacity="0.72"/><polygon points="795.4,416.3 796.6,415.5 798.2,414.4 799.9,413.4 801.4,412.6 802.5,412.3 803.6,412.4 805.2,412.6 806.8,413.0 808.3,413.5 809.3,414.0 810.1,414.7 811.0,416.0 811.8,417.6 812.5,419.2 813.1,420.3 815.9,419.4 815.7,418.3 815.4,416.5 815.0,414.4 814.3,412.2 812.9,410.1 810.9,408.7 808.8,407.6 806.4,406.9 804.0,406.5 801.4,406.6 799.0,407.6 796.9,409.1 795.2,410.8 793.8,412.2 792.9,413.1" fill-opacity="0.72"/><polygon points="717.8,434.5 719.2,435.3 721.2,436.3 723.3,437.6 725.4,438.9 727.1,440.4 728.8,442.0 730.5,443.8 732.2,445.8 733.6,447.8 734.8,449.9 735.8,452.4 736.8,455.3 737.6,458.3 738.2,461.3 738.6,463.9 738.6,466.4 738.3,469.2 737.8,472.0 737.3,474.4 736.9,476.2 742.0,477.5 742.6,475.9 743.5,473.5 744.5,470.5 745.3,467.2 745.6,463.8 745.4,460.3 744.9,456.8 744.0,453.2 743.0,449.7 741.6,446.5 739.8,443.6 737.8,441.1 735.6,438.9 733.3,437.0 731.0,435.2 728.4,433.8 725.7,432.6 723.1,431.8 720.9,431.2 719.5,430.7" fill-opacity="0.72"/><polygon points="723.7,448.6 724.1,450.7 724.6,453.8 725.2,457.4 725.9,461.1 726.5,464.5 727.1,467.6 727.6,470.8 728.2,474.1 728.9,477.4 730.0,480.7 731.4,483.8 733.0,486.5 734.7,489.0 736.4,491.5 738.0,494.1 739.7,497.0 741.4,500.0 743.1,503.0 744.8,506.1 746.1,509.0 747.3,512.0 748.3,515.1 749.2,518.2 750.1,521.3 750.8,524.1 751.4,526.7 751.9,529.4 752.3,531.9 752.7,534.0 752.9,535.5 754.7,535.4 754.7,533.9 754.7,531.7 754.6,529.1 754.5,526.3 754.2,523.4 753.8,520.5 753.4,517.3 752.8,514.0 752.0,510.6 751.1,507.2 749.8,503.8 748.4,500.5 746.8,497.1 745.2,494.0 743.6,490.9 741.9,488.0 740.2,485.4 738.6,483.0 737.1,480.7 735.9,478.3 734.9,475.6 734.1,472.7 733.3,469.6 732.5,466.4 731.6,463.2 730.6,459.9 729.4,456.3 728.3,452.9 727.3,450.0 726.6,447.9" fill-opacity="0.72"/><circle cx="757.2" cy="454.7" r="2.6" fill-opacity="0.72"/><polygon points="764.3,439.8 765.6,440.7 767.4,442.1 769.7,443.7 772.4,445.2 775.3,446.2 778.3,446.5 781.3,446.4 784.1,446.0 786.9,445.5 789.7,444.8 792.5,444.0 795.3,442.9 797.9,441.8 800.2,440.9 802.1,440.4 804.0,440.4 806.2,440.8 808.4,441.4 810.3,442.0 811.8,442.4 813.0,438.5 811.7,438.0 809.8,437.1 807.5,436.2 804.8,435.5 801.8,435.2 798.9,435.5 796.0,436.3 793.3,437.2 790.7,438.0 788.2,438.6 785.7,439.0 783.1,439.5 780.7,439.8 778.4,439.9 776.5,439.9 774.6,439.4 772.4,438.6 770.2,437.6 768.2,436.5 766.7,435.8" fill-opacity="0.72"/><circle cx="770.7" cy="514.6" r="3.2" fill-opacity="0.72"/><path d="M763.7 532.1C768.1 518.5 799.4 515.9 815.5 526.4L815.5 539.4L765.5 539.4Z" fill-opacity=".95"/><polygon points="764.9,534.4 765.0,535.6 765.2,537.3 765.3,539.4 765.5,541.5 765.8,543.4 766.1,545.3 766.5,547.4 766.9,549.5 767.2,551.2 767.5,552.4 770.3,552.4 770.5,551.1 770.8,549.4 771.1,547.3 771.4,545.2 771.5,543.2 771.6,541.2 771.5,539.0 771.5,537.0 771.4,535.2 771.3,534.0" fill-opacity="1"/><polygon points="778.5,536.9 778.6,538.5 778.7,540.7 778.9,543.4 779.1,546.1 779.3,548.6 779.6,551.1 779.9,553.8 780.2,556.4 780.5,558.6 780.7,560.2 783.1,560.2 783.3,558.6 783.5,556.3 783.7,553.7 783.9,551.0 784.0,548.4 784.0,545.9 784.0,543.1 783.9,540.5 783.8,538.2 783.8,536.6" fill-opacity="1"/><polygon points="788.3,534.3 788.4,536.6 788.5,539.8 788.7,543.6 788.9,547.5 789.2,551.2 789.5,554.8 790.0,558.7 790.5,562.5 790.9,565.7 791.2,568.0 794.6,568.0 794.8,565.7 795.1,562.4 795.5,558.6 795.8,554.7 796.0,551.0 796.1,547.3 796.1,543.4 796.0,539.6 795.9,536.3 795.9,534.0" fill-opacity="1"/><polygon points="801.4,537.0 801.5,538.1 801.6,539.6 801.8,541.3 802.0,543.1 802.2,544.7 802.5,546.4 802.9,548.2 803.3,549.9 803.7,551.4 803.9,552.4 806.8,552.4 807.0,551.3 807.3,549.8 807.6,548.0 807.8,546.2 808.0,544.4 808.0,542.7 808.0,540.9 807.9,539.1 807.8,537.6 807.8,536.5" fill-opacity="1"/><polygon points="809.8,534.2 809.9,537.1 810.0,541.1 810.2,545.7 810.3,550.6 810.6,555.0 810.8,559.5 811.2,564.4 811.5,569.0 811.8,573.0 812.0,575.8 814.4,575.8 814.5,573.0 814.7,569.0 815.0,564.3 815.2,559.5 815.3,555.0 815.3,550.4 815.2,545.6 815.2,540.9 815.1,536.9 815.0,534.1" fill-opacity="1"/><ellipse cx="779.8" cy="525.1" rx="5.8" ry="3.5" fill-opacity="0.72"/><ellipse cx="796.8" cy="522.4" rx="4.7" ry="2.9" fill-opacity="0.72"/><ellipse cx="787.7" cy="571.9" rx="11.1" ry="7.6" fill-opacity="0.9"/><circle cx="785.1" cy="570.6" r="2.9" fill-opacity="1"/><circle cx="792.9" cy="572.7" r="2.6" fill-opacity="1"/><polygon points="779.5,578.6 779.7,580.2 779.8,582.4 780.0,585.0 780.2,587.7 780.5,590.3 780.8,592.8 781.2,595.5 781.7,598.1 782.1,600.3 782.3,601.9 784.7,601.8 784.8,600.2 785.0,598.0 785.2,595.3 785.3,592.6 785.4,590.0 785.5,587.5 785.5,584.8 785.4,582.2 785.4,579.9 785.4,578.3" fill-opacity="1"/><polygon points="789.7,578.5 789.8,580.8 789.9,584.1 790.1,587.9 790.4,591.8 790.7,595.4 791.0,599.1 791.5,603.0 791.9,606.8 792.3,610.0 792.6,612.3 795.2,612.3 795.3,609.9 795.5,606.7 795.8,602.9 796.0,598.9 796.1,595.3 796.2,591.6 796.2,587.7 796.1,583.9 796.1,580.6 796.1,578.3" fill-opacity="1"/><polygon points="799.4,576.0 799.5,577.4 799.6,579.4 799.8,581.7 800.0,584.1 800.3,586.4 800.6,588.6 801.0,591.0 801.4,593.3 801.7,595.3 802.0,596.7 804.1,596.6 804.2,595.2 804.3,593.2 804.5,590.8 804.6,588.4 804.7,586.1 804.8,583.9 804.7,581.5 804.7,579.1 804.6,577.1 804.6,575.7" fill-opacity="1"/></g><g filter="url(#fm)"><path d="M566.5 146C563 153 558 156 556.5 164H576.5C575 156 570 153 566.5 146Z" fill-opacity=".6"/><path d="M566.5 164.0Q570.1 155.5 566.5 147.0Q562.9 155.5 566.5 164.0Z"/><path d="M557.5 215.0Q552.6 221.4 555.2 229.0Q560.1 222.6 557.5 215.0Z"/><path d="M563.0 215.0Q558.8 221.8 562.1 229.0Q566.4 222.2 563.0 215.0Z"/><path d="M570.0 215.0Q566.6 222.2 570.9 229.0Q574.2 221.8 570.0 215.0Z"/><path d="M575.5 215.0Q572.9 222.6 577.8 229.0Q580.4 221.4 575.5 215.0Z"/><circle cx="551.0" cy="299.1" r="2.0"/><circle cx="556.0" cy="299.7" r="2.0"/><circle cx="561.0" cy="300.3" r="2.0"/><circle cx="566.5" cy="301.0" r="2.0"/><circle cx="572.0" cy="300.3" r="2.0"/><circle cx="577.0" cy="299.7" r="2.0"/><circle cx="582.0" cy="299.1" r="2.0"/><path d="M770.7 263.6Q768.2 255.8 760.3 253.2Q762.8 261.1 770.7 263.6Z" fill-opacity="0.72"/><path d="M781.1 266.2Q775.9 265.6 773.3 270.2Q778.5 270.8 781.1 266.2Z" fill-opacity="0.72"/><path d="M768.1 304.8Q758.1 304.8 752.5 313.1Q762.5 313.1 768.1 304.8Z" fill-opacity="0.72"/><path d="M761.6 313.1Q754.1 317.8 751.2 326.1Q758.7 321.5 761.6 313.1Z" fill-opacity="0.72"/><path d="M794.2 281.9Q803.9 285.2 812.4 279.3Q802.6 276.0 794.2 281.9Z" fill-opacity="0.72"/><path d="M799.4 302.7Q806.8 307.6 814.5 303.2Q807.1 298.3 799.4 302.7Z" fill-opacity="0.72"/><path d="M791.6 313.1Q797.6 315.2 802.0 310.5Q795.9 308.4 791.6 313.1Z" fill-opacity="0.72"/><path d="M781.1 331.4Q775.0 336.5 775.9 344.4Q782.1 339.3 781.1 331.4Z" fill-opacity="0.72"/><path d="M794.2 339.2Q798.9 346.1 807.2 344.4Q802.4 337.4 794.2 339.2Z" fill-opacity="0.72"/><path d="M789.0 347.0Q794.2 352.8 802.0 352.2Q796.8 346.3 789.0 347.0Z" fill-opacity="0.72"/><path d="M742.1 347.0Q732.5 350.4 729.1 360.0Q738.7 356.6 742.1 347.0Z" fill-opacity="0.72"/><path d="M746.0 348.3Q750.6 356.8 760.3 357.4Q755.7 348.9 746.0 348.3Z" fill-opacity="0.72"/><path d="M742.1 343.1Q739.1 336.1 731.7 335.3Q734.6 342.2 742.1 343.1Z" fill-opacity="0.72"/><path d="M746.0 343.1Q752.3 343.5 755.1 337.9Q748.8 337.4 746.0 343.1Z" fill-opacity="0.72"/><path d="M721.2 357.4Q714.5 360.5 713.4 367.8Q720.1 364.7 721.2 357.4Z" fill-opacity="0.72"/><polygon points="729.2,366.4 731.3,366.1 734.3,365.7 737.7,365.2 741.3,364.8 744.8,364.6 748.2,364.5 752.0,364.6 755.8,364.7 759.6,364.8 763.1,364.6 766.2,364.1 769.1,363.4 771.7,362.6 774.1,361.8 776.4,361.2 778.7,360.5 780.9,359.9 782.8,359.3 784.6,359.0 786.3,358.9 788.2,359.2 790.2,359.7 792.2,360.4 794.0,361.2 795.5,361.9 796.6,362.8 797.8,364.0 798.9,365.3 799.8,366.6 800.5,367.5 803.4,365.5 802.9,364.6 802.2,363.1 801.2,361.4 799.8,359.6 798.1,358.1 796.0,357.0 793.7,356.1 791.3,355.4 788.8,355.0 786.4,354.8 784.0,355.0 781.8,355.6 779.7,356.3 777.6,357.1 775.4,357.8 773.1,358.6 770.6,359.5 768.2,360.4 765.6,361.1 762.8,361.7 759.5,361.9 755.9,361.8 752.1,361.7 748.3,361.6 744.6,361.7 741.0,362.0 737.3,362.6 733.9,363.2 731.0,363.7 728.9,364.1" fill-opacity="0.72"/><path d="M779.8 357.4Q780.5 352.2 775.9 349.6Q775.3 354.8 779.8 357.4Z" fill-opacity="0.72"/><path d="M800.7 361.3Q805.2 358.7 804.6 353.5Q800.0 356.1 800.7 361.3Z" fill-opacity="0.72"/><path d="M723.9 380.8Q717.4 386.0 719.9 393.9Q726.4 388.7 723.9 380.8Z" fill-opacity="0.72"/><path d="M729.1 370.4Q723.3 374.1 723.9 380.8Q729.6 377.2 729.1 370.4Z" fill-opacity="0.72"/><path d="M755.1 417.3Q755.5 425.1 762.9 427.7Q762.5 419.9 755.1 417.3Z" fill-opacity="0.72"/><path d="M721.2 393.9Q720.7 400.6 726.5 404.3Q727.0 397.5 721.2 393.9Z" fill-opacity="0.72"/><path d="M804.6 401.7Q811.6 402.9 814.5 396.5Q807.5 395.2 804.6 401.7Z" fill-opacity="0.72"/><path d="M799.4 422.5Q793.3 427.3 794.2 435.0Q800.3 430.2 799.4 422.5Z" fill-opacity="0.72"/><path d="M726.5 453.4Q721.2 458.9 722.6 466.5Q727.9 461.0 726.5 453.4Z" fill-opacity="0.72"/><path d="M735.6 482.1Q739.4 487.6 746.0 486.0Q742.1 480.5 735.6 482.1Z" fill-opacity="0.72"/><path d="M742.1 495.1Q748.1 497.2 752.5 492.5Q746.4 490.4 742.1 495.1Z" fill-opacity="0.72"/><path d="M746.0 508.1Q749.1 514.8 756.4 515.9Q753.3 509.2 746.0 508.1Z" fill-opacity="0.72"/><polygon points="743.7,436.3 745.1,437.8 747.1,439.9 749.4,442.4 751.6,444.9 753.2,447.0 754.3,448.9 755.2,451.0 756.0,453.2 757.1,455.4 758.5,457.5 760.4,459.2 762.5,460.4 764.6,461.4 766.3,462.0 767.4,462.5 768.8,460.0 767.8,459.2 766.3,458.2 764.7,457.1 763.2,455.8 762.1,454.6 761.3,453.2 760.5,451.3 759.7,449.1 758.6,446.7 757.0,444.2 754.8,441.9 752.2,439.5 749.6,437.3 747.3,435.5 745.7,434.1" fill-opacity="0.72"/><path d="M775.9 443.0Q774.3 450.6 779.8 456.0Q781.5 448.4 775.9 443.0Z" fill-opacity="0.72"/><path d="M789.0 441.7Q785.8 449.8 790.3 457.3Q793.4 449.2 789.0 441.7Z" fill-opacity="0.72"/><path d="M802.0 439.1Q796.9 447.0 799.4 456.0Q804.4 448.2 802.0 439.1Z" fill-opacity="0.72"/><path d="M811.1 443.0Q808.2 454.2 814.5 463.9Q817.4 452.7 811.1 443.0Z" fill-opacity="0.72"/><path d="M768.1 435.2Q763.9 430.5 757.7 431.3Q761.9 436.0 768.1 435.2Z" fill-opacity="0.72"/><path d="M791.6 432.6Q798.8 434.7 804.6 430.0Q797.4 427.9 791.6 432.6Z" fill-opacity="0.72"/><path d="M802.0 489.9Q808.9 486.9 810.3 479.5Q803.4 482.5 802.0 489.9Z" fill-opacity="0.72"/><path d="M768.1 498.2Q762.2 501.4 762.9 508.1Q768.9 504.9 768.1 498.2Z" fill-opacity="0.72"/><path d="M760.3 500.3Q752.5 506.2 752.5 515.9Q760.3 510.1 760.3 500.3Z" fill-opacity="0.72"/><path d="M804.6 504.2Q808.2 509.4 814.5 508.1Q810.8 502.9 804.6 504.2Z" fill-opacity="0.72"/><path d="M787.7 518.5Q789.9 513.0 786.4 508.1Q784.1 513.7 787.7 518.5Z" fill-opacity="0.72"/><path d="M804.6 518.5Q808.4 514.0 807.2 508.1Q803.3 512.7 804.6 518.5Z" fill-opacity="0.72"/><polygon points="802.0,596.8 802.1,598.4 802.3,600.8 802.4,603.6 802.6,606.4 802.8,609.1 803.1,611.8 803.4,614.6 803.8,617.4 804.1,619.8 804.3,621.4 805.9,621.4 806.0,619.7 806.1,617.3 806.2,614.5 806.3,611.6 806.3,609.0 806.3,606.3 806.3,603.4 806.2,600.6 806.1,598.3 806.1,596.6" fill-opacity="1"/><polygon points="809.1,576.0 809.2,576.7 809.3,577.7 809.5,578.9 809.7,580.1 809.9,581.2 810.2,582.3 810.5,583.5 810.8,584.7 811.1,585.6 811.3,586.3 812.9,586.2 813.0,585.4 813.1,584.4 813.2,583.2 813.3,582.0 813.3,580.9 813.3,579.7 813.3,578.5 813.2,577.3 813.2,576.3 813.1,575.6" fill-opacity="1"/></g><g filter="url(#ft)"><path d="M560.0 164.0Q563.9 159.1 563.0 153.0Q559.1 157.9 560.0 164.0Z"/><path d="M573.0 164.0Q573.9 157.9 570.0 153.0Q569.1 159.1 573.0 164.0Z"/><polyline points="550.5,285.5 552.7,286.2 555.7,287.2 559.3,288.3 563.0,289.1 566.5,289.5 570.0,289.1 573.7,288.3 577.3,287.2 580.3,286.2 582.5,285.5" fill="none" stroke="#000" stroke-width="1.8" stroke-linecap="round" stroke-linejoin="round"/><polyline points="553.5,292.0 555.3,292.6 557.8,293.5 560.7,294.4 563.7,295.2 566.5,295.5 569.3,295.2 572.3,294.4 575.2,293.5 577.7,292.6 579.5,292.0" fill="none" stroke="#000" stroke-width="1.6" stroke-linecap="round" stroke-linejoin="round"/><polyline points="564.0,289.5 564.0,291.4 564.0,293.3 564.0,295.2 564.0,297.1 564.0,299.0" fill="none" stroke="#000" stroke-width="1.2" stroke-linecap="round" stroke-linejoin="round"/><polyline points="569.0,289.5 569.0,291.4 569.0,293.3 569.0,295.2 569.0,297.1 569.0,299.0" fill="none" stroke="#000" stroke-width="1.2" stroke-linecap="round" stroke-linejoin="round"/><polyline points="742.1,253.2 744.2,252.8 747.1,252.1 750.5,251.4 754.2,250.9 757.7,250.6 761.2,250.9 764.8,251.5 768.5,252.3 772.2,252.9 775.9,253.2 779.6,253.0 783.2,252.5 786.9,251.9 790.5,251.3 794.2,251.1 798.1,251.4 802.3,252.0 806.4,252.7 809.9,253.3 812.4,253.8" fill="none" stroke="#000" stroke-width="0.7" stroke-linecap="round" stroke-linejoin="round" stroke-opacity="0.4"/><polyline points="781.1,300.1 783.0,299.8 784.8,299.6 786.6,299.3 788.4,299.1 790.3,298.8" fill="none" stroke="#000" stroke-width="1" stroke-linecap="round" stroke-linejoin="round" stroke-opacity="0.72"/><polyline points="781.7,303.2 783.6,303.2 785.6,303.2 787.6,303.2 789.6,303.2 791.6,303.2" fill="none" stroke="#000" stroke-width="1" stroke-linecap="round" stroke-linejoin="round" stroke-opacity="0.72"/><polyline points="781.1,306.6 783.1,307.0 785.1,307.3 787.1,307.7 789.1,308.1 791.0,308.4" fill="none" stroke="#000" stroke-width="1" stroke-linecap="round" stroke-linejoin="round" stroke-opacity="0.72"/><polyline points="780.6,310.0 782.3,310.6 784.0,311.2 785.6,311.9 787.3,312.5 789.0,313.1" fill="none" stroke="#000" stroke-width="1" stroke-linecap="round" stroke-linejoin="round" stroke-opacity="0.72"/><circle cx="779.8" cy="336.6" r="17" fill="none" stroke="#000" stroke-opacity=".3" stroke-width=".8"/><polyline points="745.5,330.8 744.8,332.5 744.1,334.2 743.4,335.8 742.8,337.5 742.1,339.2" fill="none" stroke="#000" stroke-width="1.4" stroke-linecap="round" stroke-linejoin="round" stroke-opacity="0.72"/><polyline points="721.8,428.2 722.1,427.9 722.5,427.3 722.9,426.8 723.4,426.3 723.9,426.1 724.3,426.3 724.9,426.7 725.4,427.2 725.8,427.7 725.9,428.2 725.8,428.7 725.4,429.3 724.9,429.8 724.3,430.2 723.9,430.3 723.4,430.1 722.9,429.7 722.5,429.1 722.1,428.6 721.8,428.2" fill="none" stroke="#000" stroke-width="1.2" stroke-linecap="round" stroke-linejoin="round" stroke-opacity="0.72"/><polyline points="775.9,370.4 777.7,369.5 780.2,368.2 783.1,366.8 786.1,365.7 789.0,365.2 791.7,365.5 794.5,366.2 797.2,367.3 799.8,368.7 802.0,370.4 803.9,372.5 805.6,374.9 806.9,377.7 808.0,380.5 808.5,383.4 808.3,386.6 807.5,390.3 806.4,393.8 805.3,396.9 804.6,399.1" fill="none" stroke="#000" stroke-width="0.7" stroke-linecap="round" stroke-linejoin="round" stroke-opacity="0.4"/><polyline points="756.4,479.5 757.0,480.9 757.8,483.0 758.8,485.4 760.1,487.8 761.6,489.9 763.5,491.8 765.6,493.8 768.1,495.6 770.6,497.1 773.3,498.2 776.3,498.9 779.4,499.2 782.7,499.2 785.9,498.9 789.0,498.2 791.8,497.1 794.7,495.5 797.4,493.7 799.8,491.7 802.0,489.9 803.8,488.0 805.4,485.9 806.7,483.8 807.7,482.0 808.5,480.8" fill="none" stroke="#000" stroke-width="2" stroke-linecap="round" stroke-linejoin="round" stroke-opacity="0.72"/><polyline points="755.1,461.2 756.8,460.7 759.0,459.8 761.7,458.9 764.8,458.0 768.1,457.3 771.9,456.8 776.1,456.2 780.6,455.8 785.0,455.7 789.0,456.0 792.7,457.1 796.3,458.9 799.7,460.9 802.5,462.6 804.6,463.9" fill="none" stroke="#000" stroke-width="0.7" stroke-linecap="round" stroke-linejoin="round" stroke-opacity="0.4"/><polyline points="797.3,505.5 797.8,505.0 798.4,504.1 799.2,503.2 799.9,502.4 800.7,502.1 801.5,502.4 802.4,503.0 803.2,503.8 803.8,504.7 804.1,505.5 803.8,506.3 803.2,507.2 802.4,508.0 801.5,508.7 800.7,508.9 799.9,508.6 799.2,507.9 798.4,507.0 797.8,506.1 797.3,505.5" fill="none" stroke="#000" stroke-width="1.3" stroke-linecap="round" stroke-linejoin="round" stroke-opacity="0.72"/><polyline points="804.6,575.8 805.7,579.0 807.4,583.5 809.3,588.8 811.1,594.2 812.4,599.3 813.2,604.3 813.7,609.8 814.1,615.0 814.3,619.5 814.5,622.7" fill="none" stroke="#000" stroke-width="0.7" stroke-linecap="round" stroke-linejoin="round" stroke-opacity="0.4"/></g></g><g filter="url(#fh)" fill="#e8e89c" opacity=".62"><g id="lhh"><circle cx="469.7" cy="263.8" r="2.3"/><path d="M366.4 147.8Q370.4 151.9 375.8 154.0" fill="none" stroke="#e8e89c" stroke-width="1.1" stroke-linecap="round"/><path d="M376.8 148.4Q382.4 149.3 385.4 154.1" fill="none" stroke="#e8e89c" stroke-width="1.0" stroke-linecap="round"/><path d="M398.0 147.4Q401.2 149.7 403.6 152.6" fill="none" stroke="#e8e89c" stroke-width="0.8" stroke-linecap="round"/><path d="M410.1 148.0Q410.3 151.1 411.3 154.0" fill="none" stroke="#e8e89c" stroke-width="0.7" stroke-linecap="round"/><path d="M376.3 160.3Q381.5 163.1 387.4 163.1" fill="none" stroke="#e8e89c" stroke-width="0.8" stroke-linecap="round"/><path d="M361.7 159.9Q365.6 157.2 369.8 155.2" fill="none" stroke="#e8e89c" stroke-width="0.6" stroke-linecap="round"/><path d="M427.7 149.5Q432.2 151.5 436.3 154.4" fill="none" stroke="#e8e89c" stroke-width="0.8" stroke-linecap="round"/><path d="M440.5 147.7Q442.8 149.4 444.6 151.6" fill="none" stroke="#e8e89c" stroke-width="0.7" stroke-linecap="round"/><polygon points="419.0,155.5 420.9,156.8 422.9,158.1 424.8,159.3 426.7,160.4 428.7,161.5 430.7,162.5 432.7,163.4 434.8,164.3 437.2,165.2 439.7,166.0 442.3,166.8 442.8,165.0 440.3,164.2 437.8,163.3 435.6,162.5 433.5,161.6 431.5,160.7 429.6,159.7 427.6,158.7 425.8,157.7 423.8,156.6 421.8,155.4 419.9,154.2"/><path d="M432.4 175.7Q437.2 174.0 442.3 173.4" fill="none" stroke="#e8e89c" stroke-width="0.9" stroke-linecap="round"/><path d="M427.1 165.6Q430.8 167.2 434.0 169.5" fill="none" stroke="#e8e89c" stroke-width="0.8" stroke-linecap="round"/><polygon points="441.3,185.0 441.5,187.2 441.6,189.5 441.7,191.6 441.7,193.5 441.6,195.5 441.5,197.5 441.3,199.5 441.2,201.4 441.1,203.3 440.9,205.3 440.8,207.2 442.4,207.4 442.7,205.5 442.9,203.5 443.1,201.6 443.3,199.6 443.5,197.7 443.6,195.6 443.7,193.6 443.7,191.5 443.6,189.4 443.4,187.0 443.1,184.8"/><ellipse cx="328.1" cy="150.8" rx="1.4" ry="1.1"/><ellipse cx="348.1" cy="149.7" rx="1.6" ry="1.2"/><ellipse cx="336.8" cy="158.1" rx="1.3" ry="1.0"/><ellipse cx="343.3" cy="157.3" rx="1.3" ry="1.0"/><ellipse cx="349.4" cy="156.6" rx="1.3" ry="1.0"/><ellipse cx="355.4" cy="156.1" rx="1.3" ry="1.0"/><path d="M321.3 158.8Q322.8 161.9 325.0 164.6" fill="none" stroke="#e8e89c" stroke-width="0.7" stroke-linecap="round"/><path d="M321.2 171.2Q324.5 172.2 327.5 173.8" fill="none" stroke="#e8e89c" stroke-width="0.6" stroke-linecap="round"/><path d="M360.2 176.2Q360.4 181.0 364.1 184.0" fill="none" stroke="#e8e89c" stroke-width="1.0" stroke-linecap="round"/><path d="M367.1 166.8Q369.9 168.0 372.3 169.8" fill="none" stroke="#e8e89c" stroke-width="0.6" stroke-linecap="round"/><polygon points="320.8,193.8 321.9,192.0 323.2,190.2 324.6,188.7 326.1,187.4 327.8,186.2 329.6,185.1 331.4,184.2 333.2,183.7 335.0,183.4 336.8,183.5 338.6,183.8 340.3,184.3 341.8,185.1 343.1,186.2 344.2,187.7 345.2,189.5 346.1,191.2 346.8,193.0 347.4,194.6 347.8,196.4 348.1,198.1 348.3,199.8 348.2,201.6 347.9,203.4 347.2,205.4 346.5,207.3 347.7,207.8 348.5,205.9 349.2,203.8 349.6,201.7 349.7,199.8 349.6,197.9 349.3,196.0 348.8,194.2 348.2,192.4 347.4,190.6 346.5,188.8 345.4,187.0 344.1,185.3 342.5,184.0 340.8,183.1 338.9,182.4 336.9,182.1 334.9,182.0 332.9,182.3 330.9,182.9 328.9,183.8 327.0,184.9 325.2,186.2 323.5,187.6 322.1,189.3 320.8,191.2 319.6,193.1"/><polygon points="322.9,201.3 324.6,202.1 326.5,202.9 328.2,203.7 329.7,204.5 331.3,205.4 332.8,206.3 334.4,207.2 336.0,208.0 337.9,208.8 339.8,209.7 341.8,210.4 342.3,209.1 340.4,208.3 338.4,207.5 336.7,206.7 335.1,205.9 333.5,205.1 332.0,204.2 330.4,203.3 328.8,202.5 327.0,201.7 325.2,200.9 323.4,200.1"/><path d="M321.7 192.8Q325.3 194.2 328.2 196.7" fill="none" stroke="#e8e89c" stroke-width="1.1" stroke-linecap="round"/><path d="M320.6 201.8Q322.9 199.7 325.7 198.4" fill="none" stroke="#e8e89c" stroke-width="0.8" stroke-linecap="round"/><path d="M344.9 189.8Q345.9 193.9 347.9 197.6" fill="none" stroke="#e8e89c" stroke-width="0.9" stroke-linecap="round"/><path d="M340.1 182.7Q337.3 184.1 334.9 186.1" fill="none" stroke="#e8e89c" stroke-width="0.6" stroke-linecap="round"/><polygon points="323.7,234.5 325.0,233.6 326.3,232.7 327.5,231.6 328.4,230.4 329.1,229.1 329.9,227.6 330.7,226.0 331.7,224.5 332.9,222.8 334.2,221.0 335.6,219.1 337.2,217.4 338.9,215.9 340.9,214.7 343.1,213.6 345.5,212.8 347.9,211.9 350.4,210.9 352.9,209.8 355.5,208.7 358.2,207.6 360.8,206.4 363.2,205.1 365.5,203.9 367.7,202.6 369.8,201.2 371.7,199.7 373.3,198.0 374.6,196.1 375.7,194.0 376.5,191.8 377.2,189.5 377.8,187.2 378.3,184.9 378.5,182.5 378.7,180.0 378.8,177.8 379.0,175.8 379.3,174.1 379.6,172.5 379.9,171.2 378.3,170.8 377.9,172.1 377.4,173.7 376.9,175.5 376.6,177.6 376.4,179.9 376.1,182.3 375.8,184.6 375.3,186.7 374.7,188.8 374.0,190.9 373.2,192.9 372.2,194.7 371.1,196.2 369.8,197.7 368.2,199.0 366.3,200.3 364.2,201.6 362.1,202.9 359.8,204.2 357.3,205.4 354.6,206.5 352.0,207.7 349.5,208.8 347.1,209.8 344.7,210.8 342.3,211.8 340.0,212.9 337.8,214.3 335.9,216.1 334.2,218.0 332.8,220.0 331.6,221.8 330.4,223.6 329.4,225.2 328.5,226.9 327.8,228.3 327.1,229.6 326.3,230.6 325.4,231.5 324.2,232.4 322.9,233.2"/><polygon points="396.9,165.3 395.6,166.6 394.2,168.1 393.0,169.9 392.1,172.0 391.3,174.1 390.5,176.4 389.9,178.7 389.2,180.8 388.4,183.0 387.6,185.3 386.7,187.7 386.0,190.1 385.6,192.6 385.3,194.9 385.3,197.2 385.4,199.5 385.8,201.8 386.7,204.1 387.9,206.1 389.4,207.9 391.1,209.5 393.0,210.9 395.0,212.2 397.3,213.2 399.8,214.1 402.3,214.7 404.7,215.3 407.2,215.8 409.7,216.3 412.1,216.5 414.5,216.7 416.5,217.0 418.3,217.5 420.0,218.3 421.7,219.6 423.4,221.1 425.0,222.5 426.3,223.7 427.3,224.5 428.1,225.3 428.8,225.9 429.1,225.6 428.6,224.9 427.9,224.0 427.0,223.0 425.8,221.8 424.3,220.2 422.7,218.6 421.0,217.0 419.1,215.9 417.0,215.1 414.8,214.7 412.4,214.5 410.0,214.2 407.6,213.7 405.3,213.2 402.8,212.6 400.4,211.9 398.2,211.1 396.2,210.2 394.4,209.0 392.7,207.7 391.2,206.2 390.0,204.7 389.0,203.0 388.4,201.2 388.1,199.3 388.0,197.2 388.1,195.1 388.3,193.0 388.7,190.8 389.3,188.5 390.1,186.1 390.9,183.8 391.6,181.5 392.2,179.3 392.8,177.0 393.4,174.7 394.0,172.6 394.7,170.8 395.7,169.1 396.9,167.6 398.0,166.2"/><ellipse cx="336.6" cy="230.7" rx="1.7" ry="1.3"/><ellipse cx="344.1" cy="230.4" rx="1.8" ry="1.4"/><ellipse cx="351.9" cy="229.7" rx="2.0" ry="1.5"/><ellipse cx="376.0" cy="212.3" rx="2.7" ry="1.8"/><ellipse cx="387.0" cy="213.0" rx="1.1" ry="0.8"/><ellipse cx="393.5" cy="210.9" rx="1.0" ry="0.8"/><ellipse cx="397.8" cy="217.3" rx="1.1" ry="0.8"/><ellipse cx="391.3" cy="222.3" rx="1.1" ry="0.8"/><ellipse cx="385.6" cy="219.5" rx="1.0" ry="0.7"/><ellipse cx="392.2" cy="216.7" rx="0.8" ry="0.6"/><ellipse cx="360.0" cy="220.1" rx="1.3" ry="1.0"/><ellipse cx="381.8" cy="229.2" rx="1.4" ry="1.1"/><path d="M370.6 225.5Q370.6 230.2 371.3 234.9" fill="none" stroke="#e8e89c" stroke-width="0.7" stroke-linecap="round"/><path d="M397.1 228.3Q398.1 233.2 399.8 237.8" fill="none" stroke="#e8e89c" stroke-width="0.7" stroke-linecap="round"/><path d="M405.8 222.6Q406.9 226.4 408.8 229.9" fill="none" stroke="#e8e89c" stroke-width="0.7" stroke-linecap="round"/><path d="M350.2 223.6Q349.7 228.7 349.8 233.9" fill="none" stroke="#e8e89c" stroke-width="0.5" stroke-linecap="round"/><path d="M407.6 183.7Q407.2 178.3 407.6 172.9" fill="none" stroke="#e8e89c" stroke-width="0.8" stroke-linecap="round"/><path d="M407.6 200.0Q407.1 204.1 407.6 208.1" fill="none" stroke="#e8e89c" stroke-width="0.8" stroke-linecap="round"/><path d="M416.9 184.0Q419.8 180.0 423.4 176.6" fill="none" stroke="#e8e89c" stroke-width="0.8" stroke-linecap="round"/><ellipse cx="410.0" cy="189.5" rx="0.9" ry="0.7"/><ellipse cx="416.0" cy="190.2" rx="0.9" ry="0.7"/><ellipse cx="412.9" cy="194.8" rx="0.8" ry="0.6"/><polygon points="440.8,168.6 441.3,171.6 441.7,174.7 442.0,177.3 441.9,179.7 441.7,182.0 441.4,184.4 441.0,187.0 440.7,189.9 440.5,193.1 440.2,196.8 440.0,200.4 441.9,200.6 442.2,197.0 442.6,193.3 442.9,190.1 443.2,187.4 443.6,184.8 444.0,182.3 444.3,179.8 444.3,177.2 444.0,174.3 443.4,171.2 442.8,168.1"/><path d="M460.8 151.3Q462.4 154.7 465.1 157.3" fill="none" stroke="#e8e89c" stroke-width="1.0" stroke-linecap="round"/><path d="M465.5 147.6Q463.6 150.2 462.5 153.2" fill="none" stroke="#e8e89c" stroke-width="0.8" stroke-linecap="round"/><path d="M444.0 148.0Q445.6 146.9 447.4 146.3" fill="none" stroke="#e8e89c" stroke-width="0.5" stroke-linecap="round"/><ellipse cx="469.2" cy="171.4" rx="1.7" ry="1.3"/><ellipse cx="488.4" cy="159.0" rx="1.9" ry="1.5"/><path d="M486.0 156.3Q483.6 152.4 480.3 149.2" fill="none" stroke="#e8e89c" stroke-width="1.0" stroke-linecap="round"/><path d="M491.8 155.2Q492.8 151.6 494.6 148.3" fill="none" stroke="#e8e89c" stroke-width="0.6" stroke-linecap="round"/><path d="M490.7 163.9Q491.2 165.6 492.4 166.9" fill="none" stroke="#e8e89c" stroke-width="0.6" stroke-linecap="round"/><ellipse cx="512.1" cy="148.9" rx="1.7" ry="1.3"/><path d="M478.4 178.2Q487.1 177.4 495.8 177.7" fill="none" stroke="#e8e89c" stroke-width="0.8" stroke-linecap="round"/><path d="M473.9 187.0Q479.3 187.6 484.4 189.5" fill="none" stroke="#e8e89c" stroke-width="1.1" stroke-linecap="round"/><path d="M533.4 180.0Q522.2 173.4 511.3 166.4" fill="none" stroke="#e8e89c" stroke-width="0.6" stroke-linecap="round"/><path d="M533.3 178.6Q522.5 169.0 509.0 164.1" fill="none" stroke="#e8e89c" stroke-width="0.6" stroke-linecap="round"/><path d="M533.8 177.7Q524.5 165.6 509.4 163.3" fill="none" stroke="#e8e89c" stroke-width="0.6" stroke-linecap="round"/><path d="M535.1 177.1Q527.8 163.8 512.6 164.2" fill="none" stroke="#e8e89c" stroke-width="0.6" stroke-linecap="round"/><path d="M534.3 198.3Q519.1 198.7 504.4 194.8" fill="none" stroke="#e8e89c" stroke-width="0.6" stroke-linecap="round"/><path d="M533.5 197.2Q517.1 195.0 500.7 193.6" fill="none" stroke="#e8e89c" stroke-width="0.6" stroke-linecap="round"/><path d="M532.6 196.1Q515.1 190.9 497.0 192.5" fill="none" stroke="#e8e89c" stroke-width="0.6" stroke-linecap="round"/><path d="M533.7 195.2Q517.8 187.8 500.9 192.0" fill="none" stroke="#e8e89c" stroke-width="0.6" stroke-linecap="round"/><path d="M534.7 194.2Q520.4 185.1 504.7 191.6" fill="none" stroke="#e8e89c" stroke-width="0.6" stroke-linecap="round"/><path d="M541.0 211.5Q532.3 219.9 520.1 219.1" fill="none" stroke="#e8e89c" stroke-width="0.6" stroke-linecap="round"/><path d="M540.0 210.7Q529.7 217.7 517.3 219.2" fill="none" stroke="#e8e89c" stroke-width="0.6" stroke-linecap="round"/><path d="M539.6 209.7Q528.4 214.4 517.0 218.4" fill="none" stroke="#e8e89c" stroke-width="0.6" stroke-linecap="round"/><path d="M539.9 208.4Q528.8 210.7 519.2 216.7" fill="none" stroke="#e8e89c" stroke-width="0.6" stroke-linecap="round"/><path d="M534.6 170.4Q529.8 165.1 524.1 160.8" fill="none" stroke="#e8e89c" stroke-width="0.5" stroke-linecap="round"/><path d="M534.9 169.5Q531.0 162.2 523.3 159.2" fill="none" stroke="#e8e89c" stroke-width="0.5" stroke-linecap="round"/><path d="M535.8 169.1Q533.5 160.9 525.0 159.8" fill="none" stroke="#e8e89c" stroke-width="0.5" stroke-linecap="round"/><path d="M545.5 216.2Q542.8 225.5 533.5 227.9" fill="none" stroke="#e8e89c" stroke-width="0.5" stroke-linecap="round"/><path d="M544.5 215.9Q540.0 224.2 531.6 228.8" fill="none" stroke="#e8e89c" stroke-width="0.5" stroke-linecap="round"/><path d="M544.2 214.9Q538.5 221.0 532.5 226.9" fill="none" stroke="#e8e89c" stroke-width="0.5" stroke-linecap="round"/><path d="M531.5 187.3Q518.6 184.7 506.3 180.0" fill="none" stroke="#e8e89c" stroke-width="0.6" stroke-linecap="round"/><path d="M531.1 186.1Q518.0 179.6 503.6 178.4" fill="none" stroke="#e8e89c" stroke-width="0.6" stroke-linecap="round"/><path d="M532.1 185.3Q521.0 175.9 506.7 178.4" fill="none" stroke="#e8e89c" stroke-width="0.6" stroke-linecap="round"/><path d="M536.5 205.0Q523.6 210.6 510.0 207.1" fill="none" stroke="#e8e89c" stroke-width="0.7" stroke-linecap="round"/><path d="M535.6 203.9Q521.3 206.2 506.9 206.4" fill="none" stroke="#e8e89c" stroke-width="0.7" stroke-linecap="round"/><path d="M536.3 202.6Q522.8 201.2 509.8 205.2" fill="none" stroke="#e8e89c" stroke-width="0.7" stroke-linecap="round"/><path d="M512.2 221.3Q508.5 222.7 505.3 224.8" fill="none" stroke="#e8e89c" stroke-width="0.7" stroke-linecap="round"/><path d="M523.0 227.3Q518.5 229.0 514.4 231.6" fill="none" stroke="#e8e89c" stroke-width="0.8" stroke-linecap="round"/><path d="M505.9 160.3Q503.9 158.3 501.6 156.9" fill="none" stroke="#e8e89c" stroke-width="0.6" stroke-linecap="round"/><path d="M519.3 155.5Q517.7 153.0 516.7 150.3" fill="none" stroke="#e8e89c" stroke-width="0.6" stroke-linecap="round"/><polygon points="533.5,149.2 533.8,150.9 534.1,152.8 534.5,154.7 535.0,156.4 535.7,158.3 536.4,160.1 537.0,161.8 537.5,163.3 537.9,164.7 538.3,166.0 538.6,167.2 539.8,166.9 539.5,165.7 539.2,164.3 538.8,162.9 538.2,161.4 537.6,159.6 536.9,157.8 536.2,156.0 535.6,154.3 535.1,152.6 534.7,150.7 534.3,149.0"/><path d="M557.7 163.5Q558.6 157.7 560.7 152.3" fill="none" stroke="#e8e89c" stroke-width="1.0" stroke-linecap="round"/><path d="M564.5 159.5Q565.9 154.1 568.6 149.2" fill="none" stroke="#e8e89c" stroke-width="1.1" stroke-linecap="round"/><path d="M555.7 214.6Q557.0 219.3 559.3 223.6" fill="none" stroke="#e8e89c" stroke-width="0.9" stroke-linecap="round"/><path d="M566.6 212.3Q567.1 215.6 568.5 218.7" fill="none" stroke="#e8e89c" stroke-width="0.8" stroke-linecap="round"/><path d="M543.8 220.2Q544.4 224.6 545.9 228.8" fill="none" stroke="#e8e89c" stroke-width="0.8" stroke-linecap="round"/><path d="M458.1 195.3Q462.2 199.4 465.1 204.5" fill="none" stroke="#e8e89c" stroke-width="1.3" stroke-linecap="round"/><path d="M452.1 216.7Q457.2 214.4 462.6 212.9" fill="none" stroke="#e8e89c" stroke-width="0.7" stroke-linecap="round"/><path d="M479.2 196.7Q483.5 201.0 487.4 205.7" fill="none" stroke="#e8e89c" stroke-width="0.5" stroke-linecap="round"/><polygon points="450.6,229.1 453.8,230.2 457.1,231.2 460.0,231.6 462.5,231.5 464.7,231.1 466.8,230.4 469.1,229.5 471.5,228.8 474.2,227.9 477.0,226.8 479.9,225.7 482.9,224.9 485.8,224.5 488.7,224.5 491.7,224.9 494.6,225.5 497.4,226.4 500.1,227.3 502.7,228.5 505.2,229.8 507.6,231.3 509.7,232.9 511.6,234.5 513.1,236.1 514.4,237.9 515.5,239.6 516.4,241.4 517.3,243.1 518.2,244.8 518.9,246.7 519.5,248.4 521.8,247.6 521.2,245.8 520.5,243.8 519.6,241.9 518.7,240.1 517.8,238.3 516.7,236.3 515.3,234.3 513.5,232.4 511.5,230.6 509.2,228.9 506.7,227.3 504.0,225.8 501.2,224.5 498.4,223.5 495.3,222.7 492.2,222.0 488.9,221.7 485.6,221.7 482.3,222.3 479.1,223.3 476.1,224.4 473.4,225.6 470.8,226.5 468.3,227.4 466.1,228.3 464.2,229.1 462.2,229.6 460.2,229.8 457.5,229.5 454.3,228.9 450.9,228.0"/><path d="M447.9 227.0Q450.2 228.5 452.2 230.5" fill="none" stroke="#e8e89c" stroke-width="0.5" stroke-linecap="round"/><path d="M478.2 219.4Q482.1 221.0 485.5 223.4" fill="none" stroke="#e8e89c" stroke-width="0.7" stroke-linecap="round"/><path d="M475.9 242.2Q480.7 244.8 485.0 248.2" fill="none" stroke="#e8e89c" stroke-width="0.8" stroke-linecap="round"/><path d="M492.4 246.9Q496.0 248.1 499.3 249.9" fill="none" stroke="#e8e89c" stroke-width="0.6" stroke-linecap="round"/><path d="M467.2 240.2Q469.6 242.2 471.5 244.5" fill="none" stroke="#e8e89c" stroke-width="0.5" stroke-linecap="round"/><path d="M522.0 235.4Q524.1 241.4 527.6 246.7" fill="none" stroke="#e8e89c" stroke-width="1.3" stroke-linecap="round"/><path d="M534.3 233.1Q535.5 239.8 537.9 246.2" fill="none" stroke="#e8e89c" stroke-width="1.0" stroke-linecap="round"/><path d="M541.4 222.8Q542.7 227.0 545.0 230.7" fill="none" stroke="#e8e89c" stroke-width="1.0" stroke-linecap="round"/><path d="M558.2 222.5Q556.4 225.9 555.4 229.6" fill="none" stroke="#e8e89c" stroke-width="0.8" stroke-linecap="round"/><polygon points="469.0,232.8 471.3,231.2 473.9,229.6 476.6,228.5 479.6,227.7 483.0,227.1 486.5,226.7 489.9,226.6 493.0,226.8 495.8,227.4 498.4,228.2 500.9,229.3 503.2,230.7 505.3,232.3 507.3,234.3 509.1,236.6 510.7,239.2 512.2,241.9 513.5,244.6 514.5,247.5 515.1,250.6 515.7,253.8 516.4,256.9 517.6,259.7 519.3,262.2 521.4,264.5 523.7,266.6 526.1,268.7 528.6,270.6 531.2,272.5 534.1,274.2 537.1,275.8 539.8,277.4 542.2,278.8 544.3,280.2 546.0,281.6 547.6,282.8 548.4,281.7 546.9,280.4 545.1,279.0 543.1,277.5 540.7,275.9 537.9,274.4 535.0,272.7 532.2,271.0 529.6,269.2 527.2,267.3 524.8,265.3 522.7,263.2 520.7,261.0 519.2,258.8 518.2,256.3 517.5,253.4 517.0,250.3 516.4,247.0 515.4,243.9 514.0,241.0 512.4,238.1 510.7,235.5 508.8,233.0 506.6,230.8 504.3,229.0 501.8,227.5 499.1,226.3 496.3,225.4 493.3,224.8 489.9,224.6 486.3,224.7 482.7,225.2 479.2,225.9 476.0,226.7 473.1,228.1 470.4,229.8 468.1,231.5"/><ellipse cx="472.6" cy="242.8" rx="1.0" ry="0.8"/><ellipse cx="476.7" cy="245.3" rx="1.0" ry="0.8"/><ellipse cx="480.8" cy="247.6" rx="1.0" ry="0.8"/><ellipse cx="484.5" cy="249.7" rx="1.0" ry="0.8"/><path d="M446.8 227.5Q449.4 229.3 451.7 231.6" fill="none" stroke="#e8e89c" stroke-width="0.6" stroke-linecap="round"/><path d="M461.0 234.2Q462.0 236.2 463.5 237.9" fill="none" stroke="#e8e89c" stroke-width="0.5" stroke-linecap="round"/><path d="M490.3 245.3Q494.3 243.8 498.5 243.2" fill="none" stroke="#e8e89c" stroke-width="0.7" stroke-linecap="round"/><path d="M494.1 250.6Q491.4 252.2 489.2 254.3" fill="none" stroke="#e8e89c" stroke-width="0.6" stroke-linecap="round"/><path d="M522.1 236.1Q525.6 233.3 529.5 231.2" fill="none" stroke="#e8e89c" stroke-width="0.7" stroke-linecap="round"/><path d="M524.9 244.6Q529.4 242.2 534.3 240.5" fill="none" stroke="#e8e89c" stroke-width="0.7" stroke-linecap="round"/><path d="M525.7 253.2Q529.4 251.4 533.5 250.4" fill="none" stroke="#e8e89c" stroke-width="0.7" stroke-linecap="round"/><path d="M527.5 261.8Q530.9 260.6 534.4 260.2" fill="none" stroke="#e8e89c" stroke-width="0.7" stroke-linecap="round"/><path d="M529.9 269.1Q533.0 268.6 536.1 268.7" fill="none" stroke="#e8e89c" stroke-width="0.6" stroke-linecap="round"/><path d="M532.7 229.6Q534.4 227.2 536.8 225.5" fill="none" stroke="#e8e89c" stroke-width="0.7" stroke-linecap="round"/><path d="M539.5 235.0Q543.4 232.6 547.7 230.9" fill="none" stroke="#e8e89c" stroke-width="0.7" stroke-linecap="round"/><path d="M536.8 244.3Q539.6 241.6 542.9 239.4" fill="none" stroke="#e8e89c" stroke-width="0.6" stroke-linecap="round"/><path d="M517.8 233.7Q519.7 231.3 522.3 229.6" fill="none" stroke="#e8e89c" stroke-width="0.7" stroke-linecap="round"/><path d="M554.8 225.7Q557.6 227.9 559.7 230.7" fill="none" stroke="#e8e89c" stroke-width="0.7" stroke-linecap="round"/><path d="M556.5 228.2Q559.1 225.9 562.2 224.1" fill="none" stroke="#e8e89c" stroke-width="0.6" stroke-linecap="round"/><path d="M519.5 276.6Q514.1 271.2 506.6 271.9" fill="none" stroke="#e8e89c" stroke-width="0.7" stroke-linecap="round"/><path d="M520.1 272.0Q517.1 266.1 511.1 263.8" fill="none" stroke="#e8e89c" stroke-width="0.5" stroke-linecap="round"/><polygon points="514.9,277.8 513.3,278.6 511.8,279.6 510.5,280.9 509.7,282.5 509.1,284.3 508.8,286.2 508.8,288.2 509.0,290.0 509.8,291.8 511.0,293.5 512.3,295.0 513.0,294.4 511.8,292.9 510.7,291.3 510.1,289.7 509.9,288.1 510.0,286.4 510.3,284.6 510.8,282.9 511.5,281.5 512.5,280.4 513.9,279.4 515.4,278.6"/><path d="M530.3 288.0Q534.3 292.5 539.8 294.9" fill="none" stroke="#e8e89c" stroke-width="1.0" stroke-linecap="round"/><path d="M532.4 296.1Q537.4 298.0 542.0 300.8" fill="none" stroke="#e8e89c" stroke-width="0.7" stroke-linecap="round"/><path d="M540.0 283.9Q536.8 282.9 533.5 282.6" fill="none" stroke="#e8e89c" stroke-width="0.6" stroke-linecap="round"/></g><use href="#lhh" transform="translate(1133 0) scale(-1 1)"/><path d="M566.5 160.6Q566.1 155.5 566.5 150.4" fill="none" stroke="#e8e89c" stroke-width="0.7" stroke-linecap="round"/><path d="M560.6 161.8Q561.2 158.4 562.4 155.2" fill="none" stroke="#e8e89c" stroke-width="0.5" stroke-linecap="round"/><path d="M572.4 161.8Q571.2 158.6 570.6 155.2" fill="none" stroke="#e8e89c" stroke-width="0.5" stroke-linecap="round"/><path d="M557.0 217.8Q555.9 221.9 555.7 226.2" fill="none" stroke="#e8e89c" stroke-width="0.8" stroke-linecap="round"/><path d="M562.8 217.8Q562.1 222.0 562.3 226.2" fill="none" stroke="#e8e89c" stroke-width="0.8" stroke-linecap="round"/><path d="M570.2 217.8Q570.0 222.0 570.7 226.2" fill="none" stroke="#e8e89c" stroke-width="0.8" stroke-linecap="round"/><path d="M576.0 217.8Q576.2 222.1 577.3 226.2" fill="none" stroke="#e8e89c" stroke-width="0.8" stroke-linecap="round"/><ellipse cx="550.6" cy="298.6" rx="0.8" ry="0.6"/><ellipse cx="555.6" cy="299.2" rx="0.8" ry="0.6"/><ellipse cx="560.6" cy="299.8" rx="0.8" ry="0.6"/><ellipse cx="566.1" cy="300.5" rx="0.8" ry="0.6"/><ellipse cx="571.6" cy="299.8" rx="0.8" ry="0.6"/><ellipse cx="576.6" cy="299.2" rx="0.8" ry="0.6"/><ellipse cx="581.6" cy="298.6" rx="0.8" ry="0.6"/><circle cx="725.2" cy="310.6" r="3"/><path d="M763.2 264.9Q755.9 262.3 748.3 261.0" fill="none" stroke="#e8e89c" stroke-width="1.2" stroke-linecap="round"/><path d="M766.3 268.9Q761.4 270.2 756.9 272.8" fill="none" stroke="#e8e89c" stroke-width="1.1" stroke-linecap="round"/><path d="M768.6 261.6Q765.8 258.1 762.4 255.3" fill="none" stroke="#e8e89c" stroke-width="0.8" stroke-linecap="round"/><path d="M779.6 267.0Q777.1 267.9 774.9 269.4" fill="none" stroke="#e8e89c" stroke-width="0.6" stroke-linecap="round"/><polygon points="744.7,316.4 747.3,315.4 750.1,314.3 752.5,313.1 754.7,311.7 756.8,310.0 758.8,308.2 760.9,306.6 762.9,305.3 765.0,304.5 767.1,303.9 769.2,303.5 771.3,303.3 773.3,303.2 775.5,303.2 777.6,303.4 779.8,303.7 781.8,304.2 783.8,304.8 785.6,305.8 787.4,307.1 789.1,308.4 790.7,306.5 789.0,305.0 787.1,303.4 784.9,302.1 782.6,301.3 780.3,300.7 777.9,300.4 775.6,300.2 773.3,300.2 771.0,300.4 768.8,300.7 766.5,301.2 764.2,302.0 761.8,303.1 759.6,304.7 757.6,306.7 755.7,308.7 753.8,310.5 751.9,312.1 749.6,313.4 747.0,314.7 744.5,315.8"/><ellipse cx="767.2" cy="302.4" rx="1.7" ry="0.9"/><path d="M765.0 306.5Q760.0 308.5 755.6 311.5" fill="none" stroke="#e8e89c" stroke-width="0.9" stroke-linecap="round"/><path d="M759.5 315.7Q756.1 319.4 753.3 323.5" fill="none" stroke="#e8e89c" stroke-width="0.6" stroke-linecap="round"/><polygon points="792.6,309.0 795.1,306.1 797.5,303.1 799.4,300.1 800.8,297.1 802.0,294.0 802.9,290.9 803.8,287.6 804.6,284.5 805.4,281.3 806.1,278.1 806.6,274.9 807.0,271.8 807.2,268.9 807.0,265.9 806.4,262.8 805.7,260.0 804.8,260.2 805.3,263.1 805.7,266.0 805.8,268.9 805.6,271.7 805.1,274.7 804.4,277.8 803.6,280.9 802.8,284.0 802.0,287.2 801.2,290.4 800.3,293.5 799.2,296.5 797.9,299.3 796.2,302.2 793.9,305.2 791.6,308.1"/><polygon points="788.5,295.8 789.9,292.9 791.5,289.9 792.9,287.1 794.1,284.4 795.3,281.6 796.6,278.9 797.9,276.3 799.4,274.1 801.2,272.0 803.3,270.2 805.4,268.6 804.7,267.7 802.5,269.3 800.3,271.1 798.3,273.2 796.7,275.6 795.3,278.3 794.0,281.0 792.8,283.8 791.6,286.5 790.3,289.3 788.9,292.4 787.5,295.3"/><polygon points="788.1,320.4 791.1,321.8 794.1,322.9 796.8,323.5 799.1,323.6 801.3,323.3 803.4,322.7 805.3,321.9 807.2,320.9 809.0,319.6 810.7,317.8 812.2,315.9 811.3,315.2 809.7,316.9 808.0,318.5 806.4,319.7 804.7,320.5 802.8,321.2 800.9,321.7 799.0,321.9 797.0,321.9 794.6,321.4 791.7,320.4 788.7,319.1"/><polygon points="781.8,324.7 784.1,327.2 786.5,329.6 789.0,331.4 791.4,332.5 794.1,333.3 796.8,333.8 799.5,334.0 802.0,334.0 804.4,333.5 806.8,332.7 809.1,331.6 808.6,330.6 806.4,331.5 804.0,332.2 801.8,332.4 799.6,332.4 797.0,332.2 794.5,331.7 792.0,331.0 789.7,330.0 787.5,328.5 785.1,326.3 782.7,323.9"/><path d="M797.8 281.4Q803.2 280.0 808.8 279.8" fill="none" stroke="#e8e89c" stroke-width="0.9" stroke-linecap="round"/><path d="M800.3 292.0Q805.6 291.0 810.9 291.2" fill="none" stroke="#e8e89c" stroke-width="1.1" stroke-linecap="round"/><path d="M802.4 302.8Q806.9 302.4 811.5 303.1" fill="none" stroke="#e8e89c" stroke-width="0.9" stroke-linecap="round"/><path d="M793.6 312.6Q796.7 311.4 799.9 311.0" fill="none" stroke="#e8e89c" stroke-width="0.7" stroke-linecap="round"/><path d="M780.1 334.0Q778.1 337.7 777.0 341.8" fill="none" stroke="#e8e89c" stroke-width="0.8" stroke-linecap="round"/><path d="M796.8 340.2Q800.9 341.3 804.6 343.3" fill="none" stroke="#e8e89c" stroke-width="0.9" stroke-linecap="round"/><path d="M791.6 348.0Q795.6 349.2 799.4 351.1" fill="none" stroke="#e8e89c" stroke-width="0.7" stroke-linecap="round"/><ellipse cx="744.8" cy="327.4" rx="1.2" ry="0.9"/><path d="M737.4 343.3Q730.5 341.2 723.3 340.2" fill="none" stroke="#e8e89c" stroke-width="1.1" stroke-linecap="round"/><path d="M739.0 347.2Q732.1 348.9 725.7 351.9" fill="none" stroke="#e8e89c" stroke-width="1.2" stroke-linecap="round"/><path d="M739.5 349.6Q735.2 353.1 731.7 357.4" fill="none" stroke="#e8e89c" stroke-width="0.9" stroke-linecap="round"/><path d="M749.4 345.9Q754.5 345.6 759.5 346.7" fill="none" stroke="#e8e89c" stroke-width="1.2" stroke-linecap="round"/><path d="M748.9 350.1Q753.5 352.4 757.4 355.6" fill="none" stroke="#e8e89c" stroke-width="0.9" stroke-linecap="round"/><path d="M740.0 341.5Q737.1 338.8 733.8 336.8" fill="none" stroke="#e8e89c" stroke-width="0.8" stroke-linecap="round"/><path d="M747.8 342.0Q750.3 340.1 753.3 338.9" fill="none" stroke="#e8e89c" stroke-width="0.7" stroke-linecap="round"/><path d="M719.7 359.5Q717.0 362.4 715.0 365.7" fill="none" stroke="#e8e89c" stroke-width="0.7" stroke-linecap="round"/><polygon points="734.1,364.4 737.5,363.9 741.1,363.4 744.7,363.1 748.2,363.1 752.0,363.1 755.9,363.3 759.6,363.3 762.9,363.1 765.9,362.6 768.6,361.9 771.2,361.0 773.6,360.2 775.9,359.5 778.2,358.8 780.3,358.1 782.3,357.5 784.3,357.0 786.4,356.9 788.5,357.1 790.8,357.6 793.0,358.2 795.0,359.1 796.8,360.0 798.2,361.2 799.5,362.7 800.5,364.2 801.4,363.6 800.4,362.0 799.1,360.4 797.4,359.0 795.5,358.0 793.4,357.1 791.1,356.4 788.7,356.0 786.4,355.8 784.2,356.0 782.1,356.5 780.0,357.2 777.9,357.9 775.7,358.6 773.3,359.4 770.9,360.2 768.4,361.1 765.7,361.9 762.8,362.4 759.5,362.6 755.9,362.5 752.1,362.4 748.3,362.3 744.6,362.4 741.1,362.7 737.4,363.2 734.0,363.8"/><path d="M779.1 355.8Q777.6 353.6 776.7 351.1" fill="none" stroke="#e8e89c" stroke-width="0.6" stroke-linecap="round"/><path d="M801.5 359.7Q802.3 357.2 803.8 355.1" fill="none" stroke="#e8e89c" stroke-width="0.6" stroke-linecap="round"/><polygon points="738.2,379.2 740.8,378.1 743.5,377.3 746.0,376.9 748.3,377.1 750.6,377.6 752.8,378.4 754.8,379.5 756.4,380.8 757.7,382.5 758.8,384.5 759.5,386.8 760.1,389.1 760.3,391.2 760.2,393.5 759.6,395.9 758.9,398.2 760.5,398.8 761.4,396.4 762.2,393.8 762.4,391.2 762.2,388.7 761.7,386.1 760.9,383.6 759.7,381.2 758.1,379.1 756.1,377.5 753.8,376.2 751.2,375.3 748.6,374.8 745.9,374.7 743.1,375.2 740.2,376.2 737.5,377.5"/><polygon points="777.9,378.0 779.3,376.1 780.9,374.3 782.4,373.0 784.1,372.2 786.0,371.7 787.9,371.5 789.8,371.5 791.6,371.7 793.3,372.4 795.2,373.6 796.9,374.9 797.9,373.6 796.2,372.1 794.2,370.8 792.1,369.8 789.9,369.5 787.7,369.5 785.6,369.8 783.5,370.5 781.5,371.5 779.7,373.1 778.1,375.1 776.8,377.1"/><polygon points="773.3,384.9 772.4,387.9 771.8,391.0 771.5,393.9 771.8,396.6 772.4,399.1 773.3,401.5 774.4,403.7 775.8,405.6 777.6,407.1 779.7,408.1 781.7,408.8 782.3,407.2 780.5,406.5 778.7,405.5 777.2,404.3 776.1,402.6 775.1,400.7 774.2,398.5 773.6,396.2 773.3,393.9 773.5,391.2 774.0,388.2 774.8,385.2"/><ellipse cx="767.4" cy="398.7" rx="1.3" ry="1.0"/><polygon points="724.7,402.2 727.0,400.9 729.4,399.8 731.7,399.1 733.8,398.8 736.0,398.8 738.2,399.1 740.3,399.6 742.1,400.4 743.8,401.5 745.4,403.0 746.8,404.6 747.9,406.4 748.6,408.2 748.6,410.1 748.1,412.2 747.3,414.2 748.6,414.8 749.6,412.6 750.3,410.3 750.4,407.8 749.6,405.6 748.4,403.5 746.9,401.5 745.1,399.8 743.1,398.5 740.9,397.6 738.6,397.0 736.1,396.8 733.7,396.9 731.3,397.3 728.8,398.2 726.3,399.6 724.0,401.1"/><polygon points="726.3,419.1 728.0,420.3 729.8,421.5 731.7,422.5 733.6,423.5 735.6,424.4 737.8,425.3 740.0,426.0 742.1,426.4 744.3,426.4 746.7,426.0 749.1,425.5 748.8,424.0 746.4,424.4 744.2,424.6 742.2,424.6 740.4,424.2 738.4,423.6 736.4,422.8 734.3,421.9 732.4,421.0 730.6,420.1 728.8,419.1 727.0,418.0"/><path d="M723.1 383.4Q721.4 387.2 720.7 391.2" fill="none" stroke="#e8e89c" stroke-width="0.9" stroke-linecap="round"/><path d="M728.0 372.5Q726.1 375.4 724.9 378.8" fill="none" stroke="#e8e89c" stroke-width="0.7" stroke-linecap="round"/><path d="M756.7 419.4Q758.6 422.8 761.4 425.6" fill="none" stroke="#e8e89c" stroke-width="0.9" stroke-linecap="round"/><path d="M722.3 395.9Q723.5 399.3 725.4 402.2" fill="none" stroke="#e8e89c" stroke-width="0.7" stroke-linecap="round"/><polygon points="796.7,412.6 798.4,411.2 800.2,410.1 802.0,409.5 803.8,409.4 805.8,409.7 807.8,410.3 809.6,411.1 811.1,412.1 812.2,413.4 813.0,415.2 813.6,417.1 814.6,416.8 814.1,414.8 813.3,412.8 812.0,411.1 810.3,409.8 808.3,408.9 806.1,408.2 803.9,407.9 801.7,408.0 799.6,408.8 797.6,410.1 795.9,411.6"/><path d="M806.6 400.6Q809.3 398.6 812.5 397.5" fill="none" stroke="#e8e89c" stroke-width="0.9" stroke-linecap="round"/><path d="M798.3 425.0Q796.4 428.6 795.2 432.5" fill="none" stroke="#e8e89c" stroke-width="0.8" stroke-linecap="round"/><polygon points="721.6,435.2 723.9,436.4 726.1,437.7 728.1,439.1 729.9,440.8 731.7,442.6 733.5,444.7 735.1,446.8 736.4,449.1 737.5,451.8 738.5,454.8 739.4,457.9 739.9,461.1 740.3,463.9 740.2,466.6 739.8,469.5 739.2,472.3 740.6,472.7 741.4,469.9 741.9,466.8 742.1,463.9 741.8,460.8 741.2,457.5 740.4,454.2 739.4,451.1 738.2,448.2 736.7,445.7 735.0,443.4 733.1,441.4 731.1,439.5 729.1,437.8 726.9,436.4 724.5,435.1 722.1,434.1"/><polygon points="725.5,453.6 726.2,457.1 727.0,460.8 727.7,464.2 728.4,467.3 728.9,470.5 729.6,473.8 730.4,477.0 731.4,480.1 732.8,483.0 734.4,485.7 736.0,488.2 737.7,490.7 739.3,493.3 741.0,496.2 742.7,499.3 744.4,502.4 746.0,505.5 747.3,508.6 748.4,511.7 749.4,514.9 750.2,518.0 751.0,521.1 751.6,523.9 752.1,526.6 752.6,529.4 752.9,531.9 753.5,531.8 753.3,529.3 752.9,526.5 752.5,523.8 751.9,520.9 751.3,517.8 750.6,514.6 749.7,511.3 748.6,508.1 747.3,505.0 745.8,501.8 744.1,498.6 742.4,495.5 740.8,492.5 739.2,489.8 737.5,487.2 735.8,484.8 734.3,482.2 733.0,479.5 731.9,476.5 731.1,473.4 730.4,470.2 729.8,467.0 729.1,463.9 728.2,460.5 727.3,456.9 726.4,453.4"/><path d="M725.7 456.0Q724.1 459.8 723.3 463.9" fill="none" stroke="#e8e89c" stroke-width="0.7" stroke-linecap="round"/><path d="M737.7 482.9Q740.9 483.6 743.9 485.2" fill="none" stroke="#e8e89c" stroke-width="0.8" stroke-linecap="round"/><path d="M744.2 494.6Q747.2 493.4 750.4 493.0" fill="none" stroke="#e8e89c" stroke-width="0.7" stroke-linecap="round"/><path d="M748.1 509.7Q751.4 511.7 754.3 514.4" fill="none" stroke="#e8e89c" stroke-width="0.7" stroke-linecap="round"/><polygon points="748.4,438.6 750.8,441.0 753.2,443.4 755.1,445.6 756.4,447.8 757.4,450.0 758.3,452.2 759.2,454.3 760.3,456.0 761.8,457.5 763.6,458.8 765.4,459.8 765.9,459.0 764.2,457.9 762.6,456.6 761.2,455.3 760.3,453.7 759.5,451.8 758.6,449.6 757.5,447.2 756.1,444.9 754.0,442.6 751.5,440.2 749.0,438.0"/><ellipse cx="756.7" cy="454.1" rx="1.0" ry="0.8"/><polygon points="768.8,439.8 771.1,441.2 773.5,442.3 775.9,443.0 778.4,443.2 781.0,443.1 783.6,442.7 786.3,442.3 789.0,441.7 791.6,441.0 794.3,440.0 797.0,439.0 799.5,438.2 802.0,437.8 804.4,438.0 806.8,438.5 809.1,439.2 809.5,438.1 807.2,437.3 804.6,436.7 801.9,436.4 799.2,436.8 796.5,437.6 793.8,438.6 791.1,439.4 788.6,440.1 786.0,440.6 783.4,441.0 780.8,441.4 778.4,441.5 776.2,441.4 774.1,440.8 771.8,439.8 769.5,438.6"/><path d="M776.7 445.6Q777.5 449.7 779.1 453.4" fill="none" stroke="#e8e89c" stroke-width="0.8" stroke-linecap="round"/><path d="M789.2 444.8Q789.2 449.6 790.0 454.2" fill="none" stroke="#e8e89c" stroke-width="0.8" stroke-linecap="round"/><path d="M801.5 442.5Q800.2 447.5 799.9 452.7" fill="none" stroke="#e8e89c" stroke-width="0.8" stroke-linecap="round"/><path d="M811.8 447.2Q812.2 453.5 813.8 459.7" fill="none" stroke="#e8e89c" stroke-width="0.9" stroke-linecap="round"/><path d="M766.0 434.4Q763.0 432.9 759.8 432.1" fill="none" stroke="#e8e89c" stroke-width="0.6" stroke-linecap="round"/><path d="M794.2 432.1Q798.0 430.9 802.0 430.5" fill="none" stroke="#e8e89c" stroke-width="0.7" stroke-linecap="round"/><path d="M803.6 487.8Q805.8 484.4 808.6 481.6" fill="none" stroke="#e8e89c" stroke-width="0.7" stroke-linecap="round"/><path d="M767.1 500.2Q765.1 503.0 764.0 506.1" fill="none" stroke="#e8e89c" stroke-width="0.8" stroke-linecap="round"/><path d="M758.8 503.4Q755.9 507.9 754.1 512.8" fill="none" stroke="#e8e89c" stroke-width="0.9" stroke-linecap="round"/><path d="M806.6 505.0Q809.7 505.8 812.5 507.3" fill="none" stroke="#e8e89c" stroke-width="0.7" stroke-linecap="round"/><ellipse cx="770.1" cy="513.8" rx="1.2" ry="0.9"/><polygon points="766.7,537.3 766.8,539.3 767.0,541.4 767.1,543.3 767.3,545.3 767.6,547.4 767.8,549.4 768.8,549.4 768.8,547.4 768.7,545.2 768.6,543.3 768.6,541.3 768.4,539.2 768.3,537.2"/><polygon points="780.0,540.7 780.1,543.3 780.3,546.0 780.4,548.5 780.6,551.0 780.8,553.8 781.0,556.4 781.9,556.4 781.8,553.7 781.7,551.0 781.7,548.5 781.6,546.0 781.5,543.2 781.3,540.6"/><polygon points="790.3,539.8 790.5,543.6 790.6,547.5 790.8,551.1 791.1,554.8 791.3,558.7 791.6,562.5 792.8,562.5 792.7,558.7 792.7,554.7 792.6,551.1 792.5,547.4 792.4,543.5 792.3,539.7"/><polygon points="803.1,539.4 803.3,541.2 803.4,543.0 803.6,544.7 803.8,546.3 804.0,548.1 804.3,549.9 805.3,549.8 805.2,548.1 805.2,546.3 805.1,544.6 805.0,542.9 804.9,541.1 804.8,539.3"/><polygon points="811.2,541.0 811.4,545.7 811.5,550.5 811.7,555.0 811.9,559.5 812.1,564.3 812.3,569.0 813.1,569.0 813.1,564.3 813.0,559.5 812.9,555.0 812.8,550.5 812.7,545.7 812.6,541.0"/><ellipse cx="778.7" cy="524.2" rx="2.1" ry="0.9"/><ellipse cx="795.9" cy="521.7" rx="1.7" ry="0.8"/><path d="M787.4 516.5Q786.7 513.4 786.6 510.2" fill="none" stroke="#e8e89c" stroke-width="0.6" stroke-linecap="round"/><path d="M805.1 516.5Q805.6 513.3 806.7 510.2" fill="none" stroke="#e8e89c" stroke-width="0.5" stroke-linecap="round"/><ellipse cx="785.5" cy="570.0" rx="4.0" ry="2.0"/><ellipse cx="784.5" cy="569.9" rx="1.1" ry="0.8"/><ellipse cx="792.3" cy="572.1" rx="1.0" ry="0.8"/><polygon points="781.2,582.3 781.3,585.0 781.5,587.7 781.7,590.2 781.9,592.7 782.2,595.5 782.5,598.1 783.3,598.0 783.2,595.4 783.1,592.7 783.0,590.2 782.9,587.6 782.7,584.9 782.6,582.3"/><polygon points="791.4,584.0 791.6,587.8 791.8,591.8 792.0,595.4 792.2,599.1 792.5,603.0 792.8,606.8 793.7,606.7 793.6,602.9 793.5,599.0 793.4,595.4 793.3,591.7 793.2,587.8 793.0,584.0"/><polygon points="800.8,579.3 801.0,581.6 801.2,584.1 801.3,586.3 801.6,588.6 801.8,591.0 802.1,593.3 802.9,593.2 802.7,590.9 802.6,588.5 802.5,586.2 802.4,584.0 802.3,581.6 802.1,579.2"/><polygon points="803.2,600.8 803.4,603.5 803.5,606.4 803.7,609.1 803.9,611.7 804.1,614.6 804.3,617.4 804.9,617.3 804.8,614.6 804.7,611.7 804.6,609.0 804.5,606.4 804.4,603.5 804.2,600.7"/><polygon points="810.2,577.6 810.4,578.8 810.5,580.0 810.7,581.1 810.9,582.2 811.1,583.4 811.4,584.6 812.0,584.5 811.8,583.4 811.7,582.2 811.6,581.0 811.5,579.9 811.4,578.7 811.3,577.5"/></g></g><polygon points="318.5,247.5 318.5,144.5 815.5,144.5 815.5,624.5 815.5,624.5 808.0,624.5 808.0,623.5 803.5,623.5 795.0,615.5 778.5,602.0 769.4,555.0 751.2,538.0 749.5,534.0 747.1,528.3 744.4,521.9 742.0,516.0 739.9,510.7 738.0,505.5 736.1,500.3 734.3,495.0 732.6,489.5 731.0,483.9 729.5,478.4 728.0,473.0 726.6,467.8 725.3,462.6 724.0,457.7 722.6,453.4 721.1,449.8 719.5,446.7 717.9,443.8 716.5,441.0 715.2,438.2 714.1,435.7 713.0,433.0 712.0,430.0 711.2,426.4 710.4,422.5 709.7,418.5 709.0,415.0 708.2,412.0 707.3,409.4 706.4,406.8 705.6,404.3 704.8,401.7 704.1,399.1 703.4,396.6 702.8,394.0 702.2,391.4 701.7,388.7 701.3,386.0 701.0,383.4 700.8,380.8 700.7,378.2 700.6,375.6 700.6,373.0 700.6,370.5 700.7,367.9 700.8,365.4 701.0,362.6 701.3,359.6 701.8,356.3 702.3,353.1 703.0,350.0 703.8,347.1 704.8,344.2 705.9,341.5 707.0,339.0 708.1,336.8 709.3,334.8 710.6,332.9 712.0,331.0 713.8,329.0 715.9,327.0 717.7,325.1 718.6,323.5 718.4,322.2 717.4,321.2 716.0,320.3 714.7,319.6 713.6,319.1 712.4,318.8 711.2,318.5 710.0,318.0 708.8,317.2 707.7,316.3 706.6,315.3 705.6,314.4 704.7,313.6 704.0,312.7 703.3,311.9 702.8,311.0 702.4,310.0 702.1,308.8 701.8,307.7 701.7,306.6 701.6,305.6 701.6,304.7 701.8,303.8 702.0,303.0 702.4,302.2 703.0,301.4 703.7,300.7 704.3,300.0 704.8,299.3 705.2,298.7 705.7,298.1 706.3,297.7 707.0,297.4 707.9,297.3 708.8,297.3 709.5,297.5 710.1,298.0 710.5,298.8 710.9,299.7 711.5,300.5 712.2,301.3 713.0,302.1 713.9,302.8 714.7,303.2 715.5,303.3 716.3,303.2 717.2,303.0 718.0,302.6 718.8,302.2 719.6,301.8 720.4,301.1 721.3,300.0 722.4,298.2 723.7,295.9 724.9,293.4 726.0,291.0 726.9,288.7 727.7,286.4 728.4,284.2 729.0,281.9 729.4,279.7 729.8,277.5 729.9,275.3 730.0,273.0 729.9,270.7 729.8,268.4 729.4,266.0 729.0,263.6 728.5,260.9 727.8,258.1 727.0,255.4 726.0,253.0 724.6,251.0 722.8,249.2 721.1,247.7 720.0,246.7 718.2,247.5 717.0,246.7 715.2,245.5 713.1,244.2 711.0,243.0 708.7,241.8 706.2,240.5 703.7,239.4 701.5,238.5 699.7,238.0 698.1,237.7 696.6,237.6 695.0,237.6 693.3,237.7 691.5,237.8 689.7,238.1 687.9,238.5 686.1,239.0 684.3,239.6 682.6,240.3 681.0,241.0 679.6,241.6 678.3,242.3 677.0,243.0 675.6,243.9 674.0,245.1 672.2,246.6 670.6,248.1 669.4,249.4 668.7,250.5 668.2,251.6 668.1,252.6 668.0,253.5 668.1,254.4 668.3,255.3 668.6,256.1 669.0,256.9 669.4,257.7 669.8,258.6 670.2,259.3 670.8,259.7 671.5,259.6 672.3,259.2 673.2,258.7 674.0,258.4 674.8,258.3 675.5,258.2 676.3,258.3 676.9,258.7 677.5,259.3 678.0,260.1 678.4,261.2 678.6,262.4 678.5,263.9 678.2,265.8 677.7,267.6 676.9,269.2 675.8,270.5 674.4,271.7 672.9,272.6 671.5,273.3 670.1,273.6 668.7,273.7 667.3,273.6 666.0,273.3 664.9,272.8 663.9,272.1 662.9,271.4 661.9,270.9 660.9,270.7 660.0,270.7 659.0,270.8 658.0,270.9 656.9,270.9 655.8,270.9 654.7,271.1 653.7,271.7 653.0,272.7 652.5,274.0 651.8,275.6 650.9,277.4 649.6,279.5 648.2,281.8 646.4,284.3 644.1,287.0 641.3,289.9 637.9,293.1 634.3,296.4 630.4,299.3 626.2,302.0 621.7,304.5 617.1,306.9 612.7,308.9 608.5,310.6 604.5,312.1 600.4,313.3 596.2,314.4 591.7,315.4 587.1,316.2 582.6,316.9 578.5,317.4 574.8,317.7 571.4,317.8 568.5,317.8 566.5,317.8 566.5,317.8 564.5,317.8 561.6,317.8 558.2,317.7 554.5,317.4 550.4,316.9 545.9,316.2 541.3,315.4 536.8,314.4 532.6,313.3 528.5,312.1 524.5,310.6 520.3,308.9 515.9,306.9 511.3,304.5 506.8,302.0 502.6,299.3 498.7,296.4 495.1,293.1 491.7,289.9 488.9,287.0 486.6,284.3 484.8,281.8 483.4,279.5 482.1,277.4 481.2,275.6 480.5,274.0 480.0,272.7 479.3,271.7 478.3,271.1 477.2,270.9 476.1,270.9 475.0,270.9 474.0,270.8 473.0,270.7 472.1,270.7 471.1,270.9 470.1,271.4 469.1,272.1 468.1,272.8 467.0,273.3 465.7,273.6 464.3,273.7 462.9,273.6 461.5,273.3 460.1,272.6 458.6,271.7 457.2,270.5 456.1,269.2 455.3,267.6 454.8,265.8 454.5,263.9 454.4,262.4 454.6,261.2 455.0,260.1 455.5,259.3 456.1,258.7 456.7,258.3 457.5,258.2 458.2,258.3 459.0,258.4 459.8,258.7 460.7,259.2 461.5,259.6 462.2,259.7 462.8,259.3 463.2,258.6 463.6,257.7 464.0,256.9 464.4,256.1 464.7,255.3 464.9,254.4 465.0,253.5 464.9,252.6 464.8,251.6 464.3,250.5 463.6,249.4 462.4,248.1 460.7,246.6 459.0,245.1 457.4,243.9 456.0,243.0 454.7,242.3 453.4,241.6 452.0,241.0 450.4,240.3 448.7,239.6 446.9,239.0 445.1,238.5 443.3,238.1 441.5,237.8 439.7,237.7 438.0,237.6 436.4,237.6 434.9,237.7 433.3,238.0 431.5,238.5 429.3,239.4 426.8,240.5 424.3,241.8 422.0,243.0 419.9,244.2 417.8,245.5 416.0,246.7 414.8,247.5" fill="none" stroke="#ff0000" stroke-width="1.1"/><line x1="719" y1="247.5" x2="815" y2="247.5" stroke="#ff0000" stroke-width="1"/><g fill="none" stroke-width="1"><polyline points="127.5,625.5 127.5,577.5 175.5,577.5 175.5,625.5 127.5,625.5" stroke="#00b000"/><line x1="127.5" y1="625.5" x2="127.5" y2="574" stroke="#00ff00"/><polyline points="125,587 127.5,579 130,587" stroke="#00ff00"/><polyline points="124,561 127.5,566 131,561" stroke="#00ff00"/><line x1="127.5" y1="566" x2="127.5" y2="572" stroke="#00ff00"/><line x1="166" y1="625.5" x2="174" y2="625.5" stroke="#ff0000"/><polyline points="165,623 173,625.5 165,628" stroke="#ff0000"/><line x1="183" y1="620.5" x2="190" y2="630.5" stroke="#ff0000"/><line x1="190" y1="620.5" x2="183" y2="630.5" stroke="#ff0000"/></g>
</svg>

<!-- right -->
<svg width="1360" height="768" viewBox="0 0 1360 768" style="left:0;top:0;pointer-events:none;">
<line x1="1185.5" y1="106" x2="1185.5" y2="675" stroke="#e3e3e3" stroke-width="1" /><line x1="1188.5" y1="106" x2="1188.5" y2="675" stroke="#7a7a7a" stroke-width="1" /><line x1="1189.5" y1="106" x2="1189.5" y2="675" stroke="#a8a8a8" stroke-width="1" /><line x1="1193" y1="116.5" x2="1304" y2="116.5" stroke="#fff" stroke-width="1" /><line x1="1193" y1="117.5" x2="1304" y2="117.5" stroke="#a0a0a0" stroke-width="1" /><line x1="1304.5" y1="116" x2="1304.5" y2="118" stroke="#a0a0a0" stroke-width="1" /><line x1="1193" y1="120.5" x2="1304" y2="120.5" stroke="#fff" stroke-width="1" /><line x1="1193" y1="121.5" x2="1304" y2="121.5" stroke="#a0a0a0" stroke-width="1" /><line x1="1304.5" y1="120" x2="1304.5" y2="122" stroke="#a0a0a0" stroke-width="1" /><rect x="1308" y="111" width="10.5" height="10.5" fill="#f0f0f0"  /><polyline points="1308,121.5 1318.5,121.5 1318.5,111" fill="none" stroke="#707070" stroke-width="1" /><polyline points="1308,121.5 1308,111.5 1318.5,111.5" fill="none" stroke="#fff" stroke-width="1" /><rect x="1321.5" y="111" width="10.5" height="10.5" fill="#f0f0f0"  /><polyline points="1321.5,121.5 1332,121.5 1332,111" fill="none" stroke="#707070" stroke-width="1" /><polyline points="1321.5,121.5 1321.5,111.5 1332,111.5" fill="none" stroke="#fff" stroke-width="1" /><rect x="1310.5" y="113.5" width="5.5" height="5.5" fill="none" stroke="#000" stroke-width="1.3" /><line x1="1310" y1="113.7" x2="1316.5" y2="113.7" stroke="#000" stroke-width="1.6" /><line x1="1324" y1="114" x2="1329.5" y2="119.5" stroke="#000" stroke-width="1.5" /><line x1="1329.5" y1="114" x2="1324" y2="119.5" stroke="#000" stroke-width="1.5" /><line x1="1190" y1="124.5" x2="1339" y2="124.5" stroke="#a0a0a0" stroke-width="1" /><line x1="1190" y1="125.5" x2="1339" y2="125.5" stroke="#fff" stroke-width="1" /><line x1="1336.5" y1="126" x2="1336.5" y2="129" stroke="#606060" stroke-width="1" /><rect x="1190" y="129.5" width="32.5" height="24" fill="#fff"  /><polyline points="1190,129.5 1222.5,129.5 1222.5,151.5 1335.5,151.5 1335.5,154" fill="none" stroke="#8a8a8a" stroke-width="1" /><rect x="1190" y="152" width="146" height="3" fill="#f8f8f8"  /><rect x="1196" y="132.5" width="13.5" height="13.8" fill="#c0c0c0"  /><rect x="1198" y="134.5" width="9.5" height="9.8" fill="none" stroke="#00008b" stroke-width="1.6" /><rect x="1196.4" y="132.9" width="3.2" height="3.2" fill="#00008b"  /><rect x="1205.9" y="132.9" width="3.2" height="3.2" fill="#00008b"  /><rect x="1196.4" y="142.7" width="3.2" height="3.2" fill="#00008b"  /><rect x="1205.9" y="142.7" width="3.2" height="3.2" fill="#00008b"  /><rect x="1201.1" y="132.9" width="3.2" height="3.2" fill="#ff0000"  /><rect x="1196.4" y="137.8" width="3.2" height="3.2" fill="#ff0000"  /><rect x="1205.9" y="137.8" width="3.2" height="3.2" fill="#ff0000"  /><rect x="1201.1" y="142.7" width="3.2" height="3.2" fill="#ff0000"  /><rect x="1201.2" y="137.8" width="3" height="3" fill="#fff"  /><line x1="1191" y1="287.5" x2="1336" y2="287.5" stroke="#a0a0a0" stroke-width="1" /><line x1="1191" y1="288.5" x2="1336" y2="288.5" stroke="#fff" stroke-width="1" />
</svg>
<div class="t" style="left:1196.5px;top:165.5px;font-size:12px;letter-spacing:-0.82px;">Nudge dist.</div>
<div class="t" style="left:1196.0px;top:185.1px;font-size:12px;letter-spacing:-0.65px;">Angle Incr.</div>
<div class="a" style="left:1268.5px;top:161px;width:41px;height:19.5px;background:#fff;border:1px solid #e3e9ef;border-top-color:#abadb3;border-radius:2px;box-sizing:border-box;"></div>
<div class="a" style="left:1268.5px;top:182.5px;width:41px;height:19.5px;background:#fff;border:1px solid #e3e9ef;border-top-color:#abadb3;border-radius:2px;box-sizing:border-box;"></div>
<div class="a" style="left:1270px;top:162px;width:37.5px;height:17px;overflow:hidden;"><div class="t" style="left:1.6px;top:3.5px;font-size:12px;letter-spacing:-0.56px;">200.000</div>
</div><div class="t" style="left:1271.6px;top:185.1px;font-size:12px;letter-spacing:-0.78px;">90.000</div>
<div class="a" style="left:1200.4px;top:207.4px;width:62.5px;height:20.2px;background:linear-gradient(180deg,#f2f2f2 0,#ebebeb 48%,#dddddd 52%,#cfcfcf 100%);border:1px solid #3c7fb1;box-shadow:inset 0 0 0 1px #48d8fb;border-radius:3px;box-sizing:border-box;"></div>
<div class="t" style="left:1209.7px;top:211.9px;font-size:12px;letter-spacing:-0.71px;">[Q]Select</div>
<div class="a" style="left:1267.3px;top:207.4px;width:62.5px;height:20.2px;background:linear-gradient(180deg,#f2f2f2 0,#ebebeb 48%,#dddddd 52%,#cfcfcf 100%);border:1px solid #707070;box-shadow:inset 0 0 0 1px #fcfcfc;border-radius:3px;box-sizing:border-box;"></div>
<div class="t" style="left:1279.8px;top:211.9px;font-size:12px;letter-spacing:-0.55px;">[R]Lock</div>
<div class="a" style="left:1200.4px;top:233.2px;width:62.5px;height:20.4px;background:linear-gradient(180deg,#f2f2f2 0,#ebebeb 48%,#dddddd 52%,#cfcfcf 100%);border:1px solid #707070;box-shadow:inset 0 0 0 1px #fcfcfc;border-radius:3px;box-sizing:border-box;"></div>
<div class="t" style="left:1206.5px;top:238.2px;font-size:12px;letter-spacing:-0.73px;">[W]Display</div>
<div class="a" style="left:1267.3px;top:233.2px;width:62.5px;height:20.4px;background:linear-gradient(180deg,#f2f2f2 0,#ebebeb 48%,#dddddd 52%,#cfcfcf 100%);border:1px solid #707070;box-shadow:inset 0 0 0 1px #fcfcfc;border-radius:3px;box-sizing:border-box;"></div>
<div class="t" style="left:1279.8px;top:238.2px;font-size:12px;letter-spacing:-0.92px;">[T]Order</div>
<div class="a" style="left:1200.4px;top:259.2px;width:62.5px;height:20.4px;background:linear-gradient(180deg,#f2f2f2 0,#ebebeb 48%,#dddddd 52%,#cfcfcf 100%);border:1px solid #707070;box-shadow:inset 0 0 0 1px #fcfcfc;border-radius:3px;box-sizing:border-box;"></div>
<div class="t" style="left:1212.6px;top:264.2px;font-size:12px;letter-spacing:-0.84px;">[E]Layer</div>
<div class="a" style="left:1267.3px;top:259.2px;width:62.5px;height:20.4px;background:linear-gradient(180deg,#f2f2f2 0,#ebebeb 48%,#dddddd 52%,#cfcfcf 100%);border:1px solid #707070;box-shadow:inset 0 0 0 1px #fcfcfc;border-radius:3px;box-sizing:border-box;"></div>
<div class="t" style="left:1281.0px;top:264.2px;font-size:12px;letter-spacing:-0.87px;">[Y]Align</div>
<svg width="1360" height="768" viewBox="0 0 1360 768" style="left:0;top:0;pointer-events:none;">
<rect x="1342" y="106" width="18" height="17" fill="#c0c0c0"  /><polygon points="1346.5,119 1353,108.5 1356.5,110.5 1350,121" fill="#ffff00" stroke="#000" stroke-width="1" /><polygon points="1346.5,119 1350,121 1345.8,122.8" fill="#000"  /><polygon points="1353,108.5 1354.5,106.5 1357.8,108.5 1356.5,110.5" fill="#ff0000" stroke="#800000" stroke-width="0.6" /><rect x="1342.5" y="126.5" width="17" height="16" fill="#fff" stroke="#000" stroke-width="1" stroke-dasharray="1 1"/><rect x="1344.5" y="128.5" width="13" height="12" fill="#fff" stroke="#000" stroke-width="1.2" /><line x1="1345" y1="129" x2="1357" y2="140" stroke="#000" stroke-width="1.1" /><line x1="1357" y1="129" x2="1345" y2="140" stroke="#000" stroke-width="1.1" /><rect x="1342" y="145.5" width="18" height="17.5" fill="#c0c0c0"  /><ellipse cx="1349.5" cy="160.3" rx="6.5" ry="2" fill="#0000ff"  /><line x1="1347" y1="157.5" x2="1355" y2="149.5" stroke="#000" stroke-width="3.2" /><line x1="1347.3" y1="157.2" x2="1354.3" y2="150.2" stroke="#fff" stroke-width="1.4" /><circle cx="1356.3" cy="148.5" r="2.4" fill="#000"  /><line x1="1352.5" y1="148" x2="1357.5" y2="153" stroke="#000" stroke-width="1.6" /><rect x="1342.5" y="166.5" width="17" height="16" fill="#c0c0c0" stroke="#000" stroke-width="1.3" /><rect x="1345" y="169" width="2.6" height="2.6" fill="#000"  /><rect x="1349" y="169" width="2.6" height="2.6" fill="#fff"  /><rect x="1353" y="169" width="2.6" height="2.6" fill="#808080"  /><rect x="1345" y="173" width="2.6" height="2.6" fill="#808000"  /><rect x="1349" y="173" width="2.6" height="2.6" fill="#00ffff"  /><rect x="1345" y="177" width="2.6" height="2.6" fill="#0000ff"  /><rect x="1349" y="177" width="2.6" height="2.6" fill="#00ff00"  /><rect x="1353" y="177" width="2.6" height="2.6" fill="#ff00ff"  /><line x1="1346.5" y1="179.5" x2="1357" y2="168.5" stroke="#000" stroke-width="3" /><line x1="1347" y1="179" x2="1356.5" y2="169" stroke="#ffff00" stroke-width="1.5" /><polygon points="1355.5,167 1358.5,167 1358.5,170" fill="#ff0000"  /><rect x="1342.5" y="185.5" width="17" height="17" fill="#ffc0cb" stroke="#404040" stroke-width="1" /><rect x="1342.5" y="206" width="17" height="16.5" fill="#f4f4f4" stroke="#b8b8b8" stroke-width="1" /><polygon points="1347,215.5 1355,215.5 1351,211.5" fill="#b0b0b0"  /><rect x="1342.5" y="225.5" width="17" height="17" fill="#f4f4f4" stroke="#b8b8b8" stroke-width="1" /><polygon points="1347,232 1355,232 1351,236.5" fill="#000"  /><rect x="1342.5" y="245.5" width="17" height="17" fill="#ff0000" stroke="#303030" stroke-width="1" /><rect x="1342.5" y="265.5" width="17" height="17" fill="#ffff00" stroke="#303030" stroke-width="1" /><rect x="1342.5" y="285.5" width="17" height="17" fill="#0000ff" stroke="#303030" stroke-width="1" /><rect x="1342.5" y="305.5" width="17" height="17" fill="#00ff00" stroke="#303030" stroke-width="1" /><rect x="1342.5" y="325.5" width="17" height="17" fill="#00ffff" stroke="#303030" stroke-width="1" /><rect x="1342.5" y="345.5" width="17" height="17" fill="#ff00ff" stroke="#303030" stroke-width="1" /><rect x="1342.5" y="365.5" width="17" height="17" fill="#ffffff" stroke="#303030" stroke-width="1" /><rect x="1342.5" y="385.5" width="17" height="17" fill="#000000" stroke="#303030" stroke-width="1" /><rect x="1342.5" y="405.5" width="17" height="17" fill="#c0c0c0" stroke="#303030" stroke-width="1" /><rect x="1342.5" y="425.5" width="17" height="17" fill="#ff6820" stroke="#303030" stroke-width="1" /><rect x="1342.5" y="445.5" width="17" height="17" fill="#a52a2a" stroke="#303030" stroke-width="1" /><rect x="1342.5" y="465.5" width="17" height="17" fill="#ffc0cb" stroke="#303030" stroke-width="1" /><rect x="1342.5" y="485.5" width="17" height="17" fill="#3cb371" stroke="#303030" stroke-width="1" /><rect x="1342.5" y="505.5" width="17" height="17" fill="#3c9090" stroke="#303030" stroke-width="1" /><rect x="1342.5" y="525.5" width="17" height="17" fill="#ffd700" stroke="#303030" stroke-width="1" /><rect x="1342.5" y="545.5" width="17" height="17" fill="#ffaa55" stroke="#303030" stroke-width="1" /><rect x="1342.5" y="565.5" width="17" height="17" fill="#808000" stroke="#303030" stroke-width="1" /><rect x="1342.5" y="585.5" width="17" height="17" fill="#800000" stroke="#303030" stroke-width="1" /><rect x="1342.5" y="605.5" width="17" height="17" fill="#00008b" stroke="#303030" stroke-width="1" /><rect x="1342.5" y="625.5" width="17" height="17" fill="#008000" stroke="#303030" stroke-width="1" /><rect x="1342.5" y="645.5" width="17" height="17" fill="#008b8b" stroke="#303030" stroke-width="1" /><rect x="1342.5" y="665.5" width="17" height="9.5" fill="#800080" stroke="#303030" stroke-width="1" />
</svg>

<!-- bottom -->
<div class="a" style="left:0px;top:676px;width:1360px;height:30px;background:#f0f0f0;"></div>
<div class="a" style="left:0px;top:706px;width:1360px;height:1px;background:#a0a0a0;"></div>
<div class="a" style="left:0px;top:707px;width:1360px;height:1px;background:#fff;"></div>
<svg width="1360" height="768" viewBox="0 0 1360 768" style="left:0;top:0;pointer-events:none;">
<rect x="1" y="677" width="5" height="29" fill="#fff"  /><line x1="0.5" y1="677" x2="0.5" y2="706" stroke="#a0a0a0" stroke-width="1" /><line x1="6.5" y1="677" x2="6.5" y2="706" stroke="#a0a0a0" stroke-width="1" /><rect x="7.9" y="678.8" width="27.4" height="24.2" rx="3" ry="3" fill="url(#gp)" stroke="#7d7d7d" stroke-width="1"/><rect x="8.9" y="679.8" width="25.4" height="22.2" rx="2" ry="2" fill="none" stroke="#c9c9c9" stroke-width="1"/><rect x="65.8" y="678.8" width="26.7" height="24.2" rx="3" ry="3" fill="url(#gp)" stroke="#7d7d7d" stroke-width="1"/><rect x="66.8" y="679.8" width="24.7" height="22.2" rx="2" ry="2" fill="none" stroke="#c9c9c9" stroke-width="1"/><rect x="95.3" y="678.8" width="26.2" height="24.2" rx="3" ry="3" fill="url(#gp)" stroke="#7d7d7d" stroke-width="1"/><rect x="96.3" y="679.8" width="24.2" height="22.2" rx="2" ry="2" fill="none" stroke="#c9c9c9" stroke-width="1"/><rect x="124.4" y="678.8" width="26.5" height="24.2" rx="3" ry="3" fill="url(#gp)" stroke="#7d7d7d" stroke-width="1"/><rect x="125.4" y="679.8" width="24.5" height="22.2" rx="2" ry="2" fill="none" stroke="#c9c9c9" stroke-width="1"/><rect x="153.3" y="678.8" width="26.5" height="24.2" rx="3" ry="3" fill="url(#gp)" stroke="#7d7d7d" stroke-width="1"/><rect x="154.3" y="679.8" width="24.5" height="22.2" rx="2" ry="2" fill="none" stroke="#c9c9c9" stroke-width="1"/><rect x="246" y="678.8" width="26.7" height="24.2" rx="3" ry="3" fill="url(#gp)" stroke="#7d7d7d" stroke-width="1"/><rect x="247" y="679.8" width="24.7" height="22.2" rx="2" ry="2" fill="none" stroke="#c9c9c9" stroke-width="1"/><rect x="275" y="678.8" width="26.8" height="24.2" rx="3" ry="3" fill="url(#gp)" stroke="#7d7d7d" stroke-width="1"/><rect x="276" y="679.8" width="24.8" height="22.2" rx="2" ry="2" fill="none" stroke="#c9c9c9" stroke-width="1"/><line x1="16" y1="696" x2="26" y2="686" stroke="#000" stroke-width="1.1" /><circle cx="16" cy="696" r="1.8" fill="#00ffff" stroke="#8b0000" stroke-width="1" /><circle cx="26" cy="686" r="1.8" fill="#00ffff" stroke="#8b0000" stroke-width="1" /><path d="M42 686C47 686 52 688 54.5 697.5" fill="none" stroke="#000" stroke-width="1.1" /><line x1="43" y1="696.5" x2="55" y2="683" stroke="#000" stroke-width="1" /><circle cx="51.5" cy="688" r="1.8" fill="#00ffff" stroke="#8b0000" stroke-width="1" /><line x1="59" y1="681.5" x2="54.5" y2="686" stroke="#0000ff" stroke-width="1.2" /><polyline points="54.5,682.5 54.5,686 58,686" fill="none" stroke="#0000ff" stroke-width="1.2" /><line x1="44.5" y1="695.5" x2="49.5" y2="690.5" stroke="#0000ff" stroke-width="1.2" /><polyline points="46,690.5 49.5,690.5 49.5,694" fill="none" stroke="#0000ff" stroke-width="1.2" /><polyline points="72.5,685.5 80,686.5 84,690 84.5,697.5" fill="none" stroke="#000" stroke-width="1.2" /><circle cx="82" cy="688" r="1.8" fill="#ffff00" stroke="#8b0000" stroke-width="1" /><line x1="102.5" y1="697.5" x2="115.5" y2="684.5" stroke="#000" stroke-width="1.1" /><line x1="101.5" y1="687" x2="116.5" y2="695.5" stroke="#000" stroke-width="1.1" /><rect x="107.2" y="689.3" width="3.4" height="3.4" fill="#00ffff" stroke="#8b0000" stroke-width="1" /><path d="M132.5 684C140 683.5 144.5 687 144.5 696.5" fill="none" stroke="#000" stroke-width="1.2" /><line x1="132.5" y1="685" x2="132.5" y2="695" stroke="#808080" stroke-width="1" stroke-dasharray="1 1.5"/><line x1="134" y1="696.5" x2="144" y2="696.5" stroke="#808080" stroke-width="1" stroke-dasharray="1 1.5"/><circle cx="133" cy="696.3" r="1.8" fill="#00ffff" stroke="#8b0000" stroke-width="1" /><path d="M159.5 690.5C159.5 686 162 683.5 166.5 683.5C171 683.5 173.5 686 173.5 690.5C173.5 695 171 697.5 166.5 697.5C162 697.5 159.5 695 159.5 690.5Z" fill="none" stroke="#000" stroke-width="1.1" /><circle cx="166.5" cy="683.8" r="1.8" fill="#ffff00" stroke="#c00000" stroke-width="1" /><circle cx="160" cy="690.5" r="1.8" fill="#ffff00" stroke="#c00000" stroke-width="1" /><circle cx="173" cy="690.5" r="1.8" fill="#ffff00" stroke="#c00000" stroke-width="1" /><circle cx="166.5" cy="697.2" r="1.8" fill="#ffff00" stroke="#c00000" stroke-width="1" /><line x1="186" y1="695.5" x2="204" y2="695.5" stroke="#000" stroke-width="1.2" /><line x1="193.5" y1="682" x2="193.5" y2="695.5" stroke="#000" stroke-width="1.2" /><rect x="194.5" y="690.5" width="4.5" height="4.5" fill="none" stroke="#a0a0a0" stroke-width="1" stroke-dasharray="1 1"/><circle cx="193.3" cy="695.5" r="1.8" fill="#00ffff" stroke="#8b0000" stroke-width="1" /><path d="M214 688.5C219 684.5 225 686.5 226 699" fill="none" stroke="#000" stroke-width="1.1" /><line x1="217" y1="682" x2="233" y2="697" stroke="#000" stroke-width="1" /><circle cx="224" cy="689" r="1.8" fill="#ff00ff" stroke="#8b0000" stroke-width="1" /><line x1="241.5" y1="679" x2="241.5" y2="703" stroke="#a0a0a0" stroke-width="1" /><line x1="242.5" y1="679" x2="242.5" y2="703" stroke="#fff" stroke-width="1" /><circle cx="259.2" cy="691" r="3.6" fill="#fff" stroke="#00008b" stroke-width="1.3" /><line x1="255.6" y1="691" x2="262.8" y2="691" stroke="#00008b" stroke-width="1" /><line x1="259.2" y1="687.4" x2="259.2" y2="694.6" stroke="#00008b" stroke-width="1" /><rect x="257.9" y="689.7" width="2.6" height="2.6" fill="#00ffff"  /><line x1="288.3" y1="682.5" x2="288.3" y2="691" stroke="#000" stroke-width="1.1" /><line x1="288.3" y1="691" x2="281.5" y2="698" stroke="#000" stroke-width="1.1" /><line x1="288.3" y1="691" x2="295.5" y2="697.5" stroke="#000" stroke-width="1.1" /><circle cx="288.3" cy="691.2" r="1.6" fill="#ffff00" stroke="#c00000" stroke-width="1" /><line x1="290.5" y1="683.5" x2="294" y2="683.5" stroke="#000" stroke-width="1" /><line x1="290.5" y1="686" x2="294" y2="686" stroke="#000" stroke-width="1" /><line x1="290.5" y1="686" x2="294" y2="683.5" stroke="#000" stroke-width="1" /><polyline points="279,694 280.5,697 282,694" fill="none" stroke="#000" stroke-width="0.9" /><line x1="295" y1="694.5" x2="298" y2="697.5" stroke="#000" stroke-width="0.9" /><line x1="298" y1="694.5" x2="295" y2="697.5" stroke="#000" stroke-width="0.9" /><line x1="305.5" y1="679" x2="305.5" y2="703" stroke="#a0a0a0" stroke-width="1" /><line x1="306.5" y1="679" x2="306.5" y2="703" stroke="#fff" stroke-width="1" /><polygon points="312,689.7 323.7,681.8 332.4,692.4 321.2,700.4" fill="none" stroke="#000" stroke-width="1.1" /><line x1="317.4" y1="695.8" x2="328" y2="686.4" stroke="#000" stroke-width="1" /><line x1="317.8" y1="685.7" x2="327" y2="696.3" stroke="#000" stroke-width="1" /><circle cx="320" cy="688" r="2" fill="#ff00ff" stroke="#8b0000" stroke-width="1" /><polygon points="341.2,689.7 352.9,681.8 361.6,692.4 350.4,700.4" fill="none" stroke="#000" stroke-width="1.1" /><line x1="346.6" y1="695.8" x2="357.2" y2="686.4" stroke="#000" stroke-width="1" /><line x1="347" y1="685.7" x2="356.2" y2="696.3" stroke="#000" stroke-width="1" /><circle cx="355" cy="685" r="2" fill="#ff00ff" stroke="#8b0000" stroke-width="1" /><polygon points="370.3,689.7 382,681.8 390.7,692.4 379.5,700.4" fill="none" stroke="#000" stroke-width="1.1" /><line x1="375.7" y1="695.8" x2="386.3" y2="686.4" stroke="#000" stroke-width="1" /><line x1="376.1" y1="685.7" x2="385.3" y2="696.3" stroke="#000" stroke-width="1" /><circle cx="381" cy="691" r="2" fill="#ff00ff" stroke="#8b0000" stroke-width="1" /><line x1="398.5" y1="679" x2="398.5" y2="703" stroke="#a0a0a0" stroke-width="1" /><line x1="399.5" y1="679" x2="399.5" y2="703" stroke="#fff" stroke-width="1" /><polyline points="412,682.5 412,690.5 422,690.5" fill="none" stroke="#000" stroke-width="1.2" /><line x1="410" y1="692.5" x2="422" y2="692.5" stroke="#000" stroke-width="1" /><line x1="408.5" y1="694.5" x2="420.5" y2="694.5" stroke="#000" stroke-width="1" /><line x1="407" y1="696.5" x2="419" y2="696.5" stroke="#000" stroke-width="1" /><rect x="420.5" y="689" width="3" height="3" fill="#ffff00" stroke="#c00000" stroke-width="1" /><polyline points="441,682.5 441,690.5 451,690.5" fill="none" stroke="#000" stroke-width="1.2" /><line x1="439" y1="692.5" x2="451" y2="692.5" stroke="#000" stroke-width="1" /><line x1="437.5" y1="694.5" x2="449.5" y2="694.5" stroke="#000" stroke-width="1" /><line x1="436" y1="696.5" x2="448" y2="696.5" stroke="#000" stroke-width="1" /><circle cx="445.8" cy="690.5" r="1.8" fill="#ff00ff" stroke="#8b0000" stroke-width="1" /><line x1="452.5" y1="683" x2="448" y2="687.5" stroke="#0000ff" stroke-width="1.2" /><polyline points="448,684 448,687.5 451.5,687.5" fill="none" stroke="#0000ff" stroke-width="1.2" /><line x1="462.5" y1="679" x2="462.5" y2="703" stroke="#a0a0a0" stroke-width="1" /><line x1="463.5" y1="679" x2="463.5" y2="703" stroke="#fff" stroke-width="1" /><polygon points="471.5,686 471.5,697 474.1,694.6 476.1,698.6 477.9,697.8 475.9,693.8 479.3,693.6" fill="#000"  /><line x1="478" y1="682" x2="488" y2="691.5" stroke="#000" stroke-width="1" /><line x1="488" y1="682" x2="479" y2="691" stroke="#000" stroke-width="1" /><circle cx="483" cy="686.8" r="1.8" fill="#ffff00" stroke="#c00000" stroke-width="1" /><polygon points="500.5,686 500.5,697 503.1,694.6 505.1,698.6 506.9,697.8 504.9,693.8 508.3,693.6" fill="#000"  /><line x1="508.5" y1="684.5" x2="515" y2="690.5" stroke="#ff0000" stroke-width="2" /><line x1="515" y1="684.5" x2="508.5" y2="690.5" stroke="#ff0000" stroke-width="2" /><line x1="526.5" y1="679" x2="526.5" y2="703" stroke="#a0a0a0" stroke-width="1" /><line x1="527.5" y1="679" x2="527.5" y2="703" stroke="#fff" stroke-width="1" /><polygon points="533.5,693.5 542,688 553,692.5 545.5,699.5" fill="none" stroke="#000" stroke-width="1.1" /><line x1="544.5" y1="684" x2="544.5" y2="694" stroke="#000" stroke-width="1" /><rect x="543" y="681.8" width="3" height="3" fill="#ffff00" stroke="#c00000" stroke-width="1" /><circle cx="544.3" cy="695" r="2" fill="#ff00ff" stroke="#8b0000" stroke-width="1" /><line x1="549.5" y1="682" x2="549.5" y2="688.5" stroke="#0000ff" stroke-width="1.2" /><polyline points="547.5,686 549.5,688.8 551.5,686" fill="none" stroke="#0000ff" stroke-width="1.1" /><line x1="566.5" y1="696" x2="581" y2="682" stroke="#000" stroke-width="1" /><polyline points="572.5,683.5 571.5,682.5 563.5,691" fill="none" stroke="#000" stroke-width="1" stroke-dasharray="2 1"/><circle cx="567" cy="696" r="2" fill="#ff00ff" stroke="#8b0000" stroke-width="1" /><rect x="574" y="686" width="3" height="3" fill="#ffff00" stroke="#c00000" stroke-width="1" /><line x1="570" y1="684.5" x2="566" y2="688.5" stroke="#0000ff" stroke-width="1.2" /><polyline points="566,685 566,688.5 569.5,688.5" fill="none" stroke="#0000ff" stroke-width="1.1" /><rect x="600" y="683.5" width="9.8" height="14" fill="#f0f0f0" stroke="#a0a0a0" stroke-width="1.2" /><line x1="592.5" y1="682.5" x2="603" y2="692.5" stroke="#000" stroke-width="1" /><line x1="592.5" y1="692.5" x2="600" y2="685" stroke="#000" stroke-width="1" /><circle cx="597" cy="687.5" r="1.8" fill="#ffff00" stroke="#c00000" stroke-width="1" /><line x1="602.5" y1="687" x2="608" y2="687" stroke="#000" stroke-width="1.1" /><line x1="602.5" y1="689.5" x2="608" y2="689.5" stroke="#000" stroke-width="1.1" /><line x1="602.5" y1="692" x2="608" y2="692" stroke="#000" stroke-width="1.1" /><line x1="602.5" y1="694.5" x2="608" y2="694.5" stroke="#000" stroke-width="1.1" /><line x1="624.5" y1="685.5" x2="636" y2="696.5" stroke="#ff0000" stroke-width="3.2" /><line x1="636" y1="685.5" x2="624.5" y2="696.5" stroke="#ff0000" stroke-width="3.2" /><line x1="646.5" y1="677" x2="646.5" y2="706" stroke="#a0a0a0" stroke-width="1" />
</svg>
<div class="a" style="left:0px;top:708px;width:1360px;height:20px;background:#f0eded;"></div>
<div class="a" style="left:1px;top:709px;width:952px;height:1px;background:#a0a0a0;"></div>
<div class="a" style="left:1px;top:709px;width:1px;height:18px;background:#a0a0a0;"></div>
<div class="a" style="left:954px;top:709px;width:1px;height:18px;background:#c8c8c8;"></div>
<div class="a" style="left:956px;top:709px;width:1px;height:18px;background:#a0a0a0;"></div>
<div class="a" style="left:956px;top:709px;width:188px;height:1px;background:#a0a0a0;"></div>
<div class="a" style="left:1146px;top:709px;width:1px;height:18px;background:#a0a0a0;"></div>
<div class="a" style="left:1146px;top:709px;width:210px;height:1px;background:#a0a0a0;"></div>
<div class="t" style="left:2.6px;top:712.5px;font-size:13px;letter-spacing:0.23px;">Select command tool: No selected object</div>
<div class="t" style="left:960.3px;top:713.1px;font-size:12px;letter-spacing:0.09px;">10.97 -1359.85 0.00</div>
<div class="a" style="left:1147.5px;top:711.5px;width:22.5px;height:13.5px;background:#f0eded;border:1px solid #9a9a9a;border-radius:2px;box-sizing:border-box;"></div>
<div class="t" style="left:1154.5px;top:713.3px;font-size:11.5px;color:#808080;font-weight:bold;">U</div>

<!-- taskbar -->
<div class="a" style="left:0px;top:728px;width:1360px;height:40px;background:linear-gradient(90deg,#1b2c4c 0,#1f3153 36%,#2a3c60 38%,#4a5878 42%,#5a6283 45%,#566080 49%,#4a5a70 53%,#526078 57%,#5e6686 61%,#72739a 64%,#8482a8 68%,#8684aa 73%,#7a79a0 77%,#585d86 80%,#3e476c 85%,#2e3759 92%,#2a3354 100%);"></div>
<div class="a" style="left:585px;top:728px;width:80px;height:40px;background:radial-gradient(ellipse at 50% 40%,rgba(50,60,95,.65) 0,rgba(50,60,95,0) 70%);"></div>
<div class="a" style="left:680px;top:728px;width:110px;height:40px;background:radial-gradient(ellipse at 50% 75%,rgba(45,66,72,.85) 0,rgba(45,66,72,0) 72%);"></div>
<div class="a" style="left:790px;top:728px;width:70px;height:40px;background:radial-gradient(ellipse at 50% 80%,rgba(55,75,85,.7) 0,rgba(55,75,85,0) 70%);"></div>
<div class="a" style="left:600px;top:728px;width:120px;height:40px;background:radial-gradient(ellipse at 40% 100%,rgba(40,58,70,.7) 0,rgba(40,58,70,0) 70%);"></div>
<svg width="1360" height="768" viewBox="0 0 1360 768" style="left:0;top:0;pointer-events:none;">
<ellipse cx="905" cy="736" rx="5" ry="3" fill="rgba(36,38,70,.5)"  /><ellipse cx="925" cy="741" rx="5" ry="3" fill="rgba(36,38,70,.5)"  /><ellipse cx="948" cy="738" rx="5" ry="3" fill="rgba(36,38,70,.5)"  /><ellipse cx="968" cy="744" rx="5" ry="3" fill="rgba(36,38,70,.5)"  /><ellipse cx="985" cy="746" rx="5" ry="3" fill="rgba(36,38,70,.5)"  /><ellipse cx="1003" cy="750" rx="5" ry="3" fill="rgba(36,38,70,.5)"  /><ellipse cx="1020" cy="751" rx="5" ry="3" fill="rgba(36,38,70,.5)"  /><ellipse cx="1040" cy="756" rx="5" ry="3" fill="rgba(36,38,70,.5)"  /><ellipse cx="1058" cy="757" rx="5" ry="3" fill="rgba(36,38,70,.5)"  /><ellipse cx="925" cy="752" rx="5" ry="3" fill="rgba(36,38,70,.5)"  /><ellipse cx="950" cy="757" rx="5" ry="3" fill="rgba(36,38,70,.5)"  /><ellipse cx="985" cy="764" rx="5" ry="3" fill="rgba(36,38,70,.5)"  /><ellipse cx="1020" cy="765" rx="5" ry="3" fill="rgba(36,38,70,.5)"  /><ellipse cx="890" cy="748" rx="5" ry="3" fill="rgba(36,38,70,.5)"  /><ellipse cx="912" cy="762" rx="5" ry="3" fill="rgba(36,38,70,.5)"  /><ellipse cx="1072" cy="764" rx="5" ry="3" fill="rgba(36,38,70,.5)"  />
</svg>
<div class="a" style="left:0px;top:727.5px;width:1360px;height:1px;background:#7d8698;"></div>
<div class="a" style="left:0px;top:728.5px;width:1360px;height:1px;background:rgba(255,255,255,.18);"></div>
<div class="a" style="left:0px;top:729px;width:1360px;height:39px;background:linear-gradient(180deg,rgba(255,255,255,.10) 0,rgba(255,255,255,.03) 45%,rgba(0,0,0,.10) 55%,rgba(0,0,0,.18) 100%);"></div>
<div class="a" style="left:122px;top:729.5px;width:158px;height:37px;background:linear-gradient(180deg,rgba(255,255,255,.22) 0,rgba(255,255,255,.12) 45%,rgba(255,255,255,.03) 50%,rgba(255,255,255,.07) 100%);border:1px solid rgba(10,16,30,.85);box-shadow:inset 0 0 0 1px rgba(255,255,255,.28);border-radius:3px;box-sizing:border-box;"></div>
<div class="t" style="left:167.7px;top:741.6px;font-size:12px;color:#fff;letter-spacing:-0.62px;">CUA VONG</div>
<div class="a" style="left:346px;top:729.5px;width:158px;height:37px;background:linear-gradient(180deg,rgba(215,225,240,.62) 0,rgba(190,202,222,.55) 45%,rgba(150,165,190,.52) 50%,rgba(160,175,200,.55) 100%);border:1px solid rgba(10,16,30,.85);box-shadow:inset 0 0 0 1px rgba(255,255,255,.5);border-radius:3px;box-sizing:border-box;"></div>
<div class="t" style="left:391.8px;top:741.6px;font-size:12px;color:#fff;letter-spacing:-0.12px;">cua vong hoa mai...</div>
<svg width="1360" height="768" viewBox="0 0 1360 768" style="left:0;top:0;pointer-events:none;">
<defs><radialGradient id="orb" cx=".5" cy=".35" r=".7"><stop offset="0" stop-color="#7fb8e8"/><stop offset=".45" stop-color="#2a62b0"/><stop offset=".8" stop-color="#123a7c"/><stop offset="1" stop-color="#3aa0e0"/></radialGradient><linearGradient id="fold" x1="0" y1="0" x2="1" y2="0"><stop offset="0" stop-color="#e8cf7a"/><stop offset="1" stop-color="#f6e6a0"/></linearGradient></defs><circle cx="26.9" cy="747.6" r="18.6" fill="url(#orb)" stroke="#0c2244" stroke-width="1.4" /><path d="M10 742A18 18 0 0 1 44 742C36 747 18 747 10 742Z" fill="rgba(255,255,255,.28)"  /><path d="M18.5 739.5C21 738 24 738 26 739.5L24.5 746.5C22.5 745.5 19.5 745.5 17 747Z" fill="#f0682a"  /><path d="M27.5 740C30 741.5 33 741.5 36 739.5L34.5 746.5C32 748 29 748 26 746.5Z" fill="#8dc63f"  /><path d="M16.7 748.5C19 747 22 747 24.2 748L22.7 755C20.5 754 17.5 754 15 755.5Z" fill="#3d8fe0"  /><path d="M25.7 748.5C28 750 31.5 750 34.2 748L32.7 755C30 756.7 27 756.7 24.2 755.5Z" fill="#fcc527"  /><path d="M74 753C73 744 82 739 92 740C100 741 103 746 101 752C99 758 93 756 90 758C88 760 90 763 84 763C78 763 74.5 758.5 74 753Z" fill="#dfe9f5" stroke="#8ea3c0" stroke-width="1" /><circle cx="80" cy="750" r="2.6" fill="#e03030"  /><circle cx="84.5" cy="744.8" r="2.6" fill="#40b040"  /><circle cx="90.5" cy="743.2" r="2.6" fill="#f0a020"  /><circle cx="81.5" cy="756.5" r="2.2" fill="#3060d0"  /><circle cx="88" cy="752" r="2.2" fill="#304060"  /><line x1="88.5" y1="763.5" x2="98.5" y2="741" stroke="#e08020" stroke-width="3.4" /><path d="M97 743C97 738 100 734 104.5 733C104 737 103 741 100.5 744.5Z" fill="#e8d8b0" stroke="#a08040" stroke-width="0.6" /><polygon points="133,736 141,733.5 141,760.5 136,762.5 133,757" fill="#d9bd62" stroke="#b89a40" stroke-width="0.8" /><polygon points="138.5,737.5 153.5,734 154.5,759 140.5,762.5" fill="url(#fold)" stroke="#c9ad55" stroke-width="0.8" /><rect x="152.3" y="755" width="1.5" height="4" fill="#5080d0"  /><circle cx="312.6" cy="748" r="15.6" fill="#4fae50" stroke="#e8f4e8" stroke-width="1.2" /><circle cx="311.5" cy="748.8" r="7.6" fill="#fff"  /><circle cx="311.5" cy="748.8" r="4.6" fill="#4fae50"  /><polygon points="311.5,748.8 322,733 329.5,741" fill="#4fae50"  /><polygon points="316.5,740.5 320,733.5 323.3,735.8 318.3,742" fill="#f26522"  /><polygon points="320,743.5 326.8,738 328.8,741.5 321.5,746" fill="#f26522"  /><polygon points="313,739 314,732.5 317,733 315,739.5" fill="#f26522"  /><polygon points="318,741.5 322.5,734.5 327.5,739.5 321,745.5" fill="none" stroke="#fff" stroke-width="1" /><polygon points="356,749 367,741 386,741 386,748 376,756 356,756" fill="#5a5a5a" stroke="#2a2a2a" stroke-width="0.8" /><polygon points="356,756 376,756 376,762.5 356,762.5" fill="#3a3a3a" stroke="#1a1a1a" stroke-width="0.8" /><polygon points="376,756 386,748 386,755 376,762.5" fill="#2a2a2a"  /><rect x="369.5" y="732.5" width="8.5" height="3" fill="#707070" stroke="#303030" stroke-width="0.8" rx="1"/><rect x="371" y="735.5" width="5.5" height="10" fill="#c8c8c8" stroke="#404040" stroke-width="0.8" /><rect x="371.3" y="745" width="5" height="7" fill="#f0a020" stroke="#a06010" stroke-width="0.6" /><polygon points="370.5,752 377,752 377,761 373.5,762.5 370.5,761" fill="#d8a0f0" stroke="#8050a0" stroke-width="0.6" /><polygon points="1171,748.5 1179,748.5 1175,744" fill="#fff"  /><rect x="1199.5" y="745.5" width="9.5" height="7.5" fill="#2a3a5a" stroke="#fff" stroke-width="1.3" /><line x1="1201" y1="756" x2="1208" y2="756" stroke="#fff" stroke-width="1.4" /><line x1="1204.5" y1="753" x2="1204.5" y2="756" stroke="#fff" stroke-width="1.2" /><rect x="1196" y="741.5" width="4.5" height="7.5" fill="#fff"  /><line x1="1197" y1="740" x2="1197" y2="742" stroke="#fff" stroke-width="1" /><line x1="1199.5" y1="740" x2="1199.5" y2="742" stroke="#fff" stroke-width="1" /><polygon points="1221,746 1224,746 1228,742 1228,756 1224,752 1221,752" fill="#fff"  /><path d="M1230.5 745.5C1232 747.5 1232 750.5 1230.5 752.5" fill="none" stroke="#c8d0e0" stroke-width="1.1" /><path d="M1232.8 743.5C1235.2 746.5 1235.2 751.5 1232.8 754.5" fill="none" stroke="#98a4bc" stroke-width="1" /><rect x="1242" y="741.3" width="15.6" height="15.5" fill="#1e90ff" stroke="#58b0ff" stroke-width="0.8" rx="1.5"/>
</svg>
<div class="t" style="left:1245.3px;top:742.5px;font-size:14px;color:#fff;font-weight:bold;">E</div>
<div class="t" style="left:1285.0px;top:732.8px;font-size:12px;color:#fff;letter-spacing:-0.50px;">9:15 CH</div>
<div class="t" style="left:1275.0px;top:749.3px;font-size:12px;color:#fff;">30/09/2018</div>
<div class="a" style="left:1346px;top:729px;width:14px;height:39px;background:linear-gradient(180deg,rgba(200,205,235,.42) 0,rgba(170,175,215,.28) 100%);border-left:1px solid rgba(255,255,255,.45);box-shadow:-1px 0 0 rgba(0,0,0,.5);"></div>
<svg width="1360" height="768" viewBox="0 0 1360 768" style="left:0;top:0;pointer-events:none;">
<path d="M1311.8 691C1313 682 1317 674 1321.5 668.5C1322.5 670 1322 671.5 1321 673C1317.5 679 1314.5 686 1313.5 691.5Z" fill="#e8222a"  /><path d="M1313.5 692.5C1316 683 1322 674 1328.5 670C1330.5 670 1331.5 672 1330.5 674C1325 679 1318.5 686 1315.5 694Z" fill="#27468f"  /><path d="M1316 694.5C1319 688.5 1323.5 683.5 1328.5 681C1329.5 682 1329.3 684 1328 686C1324 688.5 1320 691.5 1317.5 695.5Z" fill="#f7941d"  /><rect x="1268.1" y="687.4" width="31.7" height="49.3" fill="#ed1c24"  rx="6" ry="6"/>
</svg>
<div class="t" style="left:1273.5px;top:688.8px;font-size:56px;color:#fff;font-weight:bold;letter-spacing:-13.44px;transform:scaleX(.72);transform-origin:0 0;-webkit-text-stroke:1.8px #fff;">C</div>
<svg width="1360" height="768" viewBox="0 0 1360 768" style="left:0;top:0;pointer-events:none;">
<polygon points="1303.3,704 1307.2,704 1307.2,736 1303.3,736" fill="#27468f"  /><polygon points="1304,704.5 1308,702.5 1323.5,735 1319.5,736" fill="#27468f"  /><polygon points="1310,701 1313.5,699.5 1324.4,727 1324.4,736 1322.5,736" fill="#27468f"  /><polygon points="1318.8,697 1324.4,697 1324.4,736 1318.8,730" fill="#27468f"  /><polygon points="1309.0,692.8 1310.5,696.9 1314.9,697.1 1311.5,699.8 1312.6,704.0 1309.0,701.6 1305.4,704.0 1306.5,699.8 1303.1,697.1 1307.5,696.9" fill="#b07a45"  /><rect x="1287.7" y="694" width="1" height="42" fill="#ed1c24"  /><rect x="1339" y="694" width="1.2" height="44" fill="#f0f0f0"  />
</svg>
<div class="t" style="left:1326.3px;top:688.8px;font-size:56px;color:#f7941d;font-weight:bold;letter-spacing:-13.44px;transform:scaleX(.62);transform-origin:0 0;-webkit-text-stroke:1.8px #f7941d;">C</div>
<svg width="1360" height="768" viewBox="0 0 1360 768" style="left:0;top:0;pointer-events:none;">
<rect x="1339.3" y="694" width="1" height="44" fill="#f0eded"  />
</svg>
<div class="a" style="left:1267.4px;top:741px;width:85px;height:14px;background:#27468f;border-radius:5px;"></div>
<div class="t" style="left:1271.5px;top:741.2px;font-size:13.5px;color:#fff;font-weight:bold;font-family:'Liberation Serif',serif;letter-spacing:-0.90px;text-shadow:0 0 1.5px #0a1840,0 1px 1px #0a1840;-webkit-text-stroke:.3px #fff;">Khomaucnc.vn</div>
<div class="a" style="left:1274.5px;top:758.4px;width:71.5px;height:1.2px;background:#a97c50;"></div>

</body></html>
